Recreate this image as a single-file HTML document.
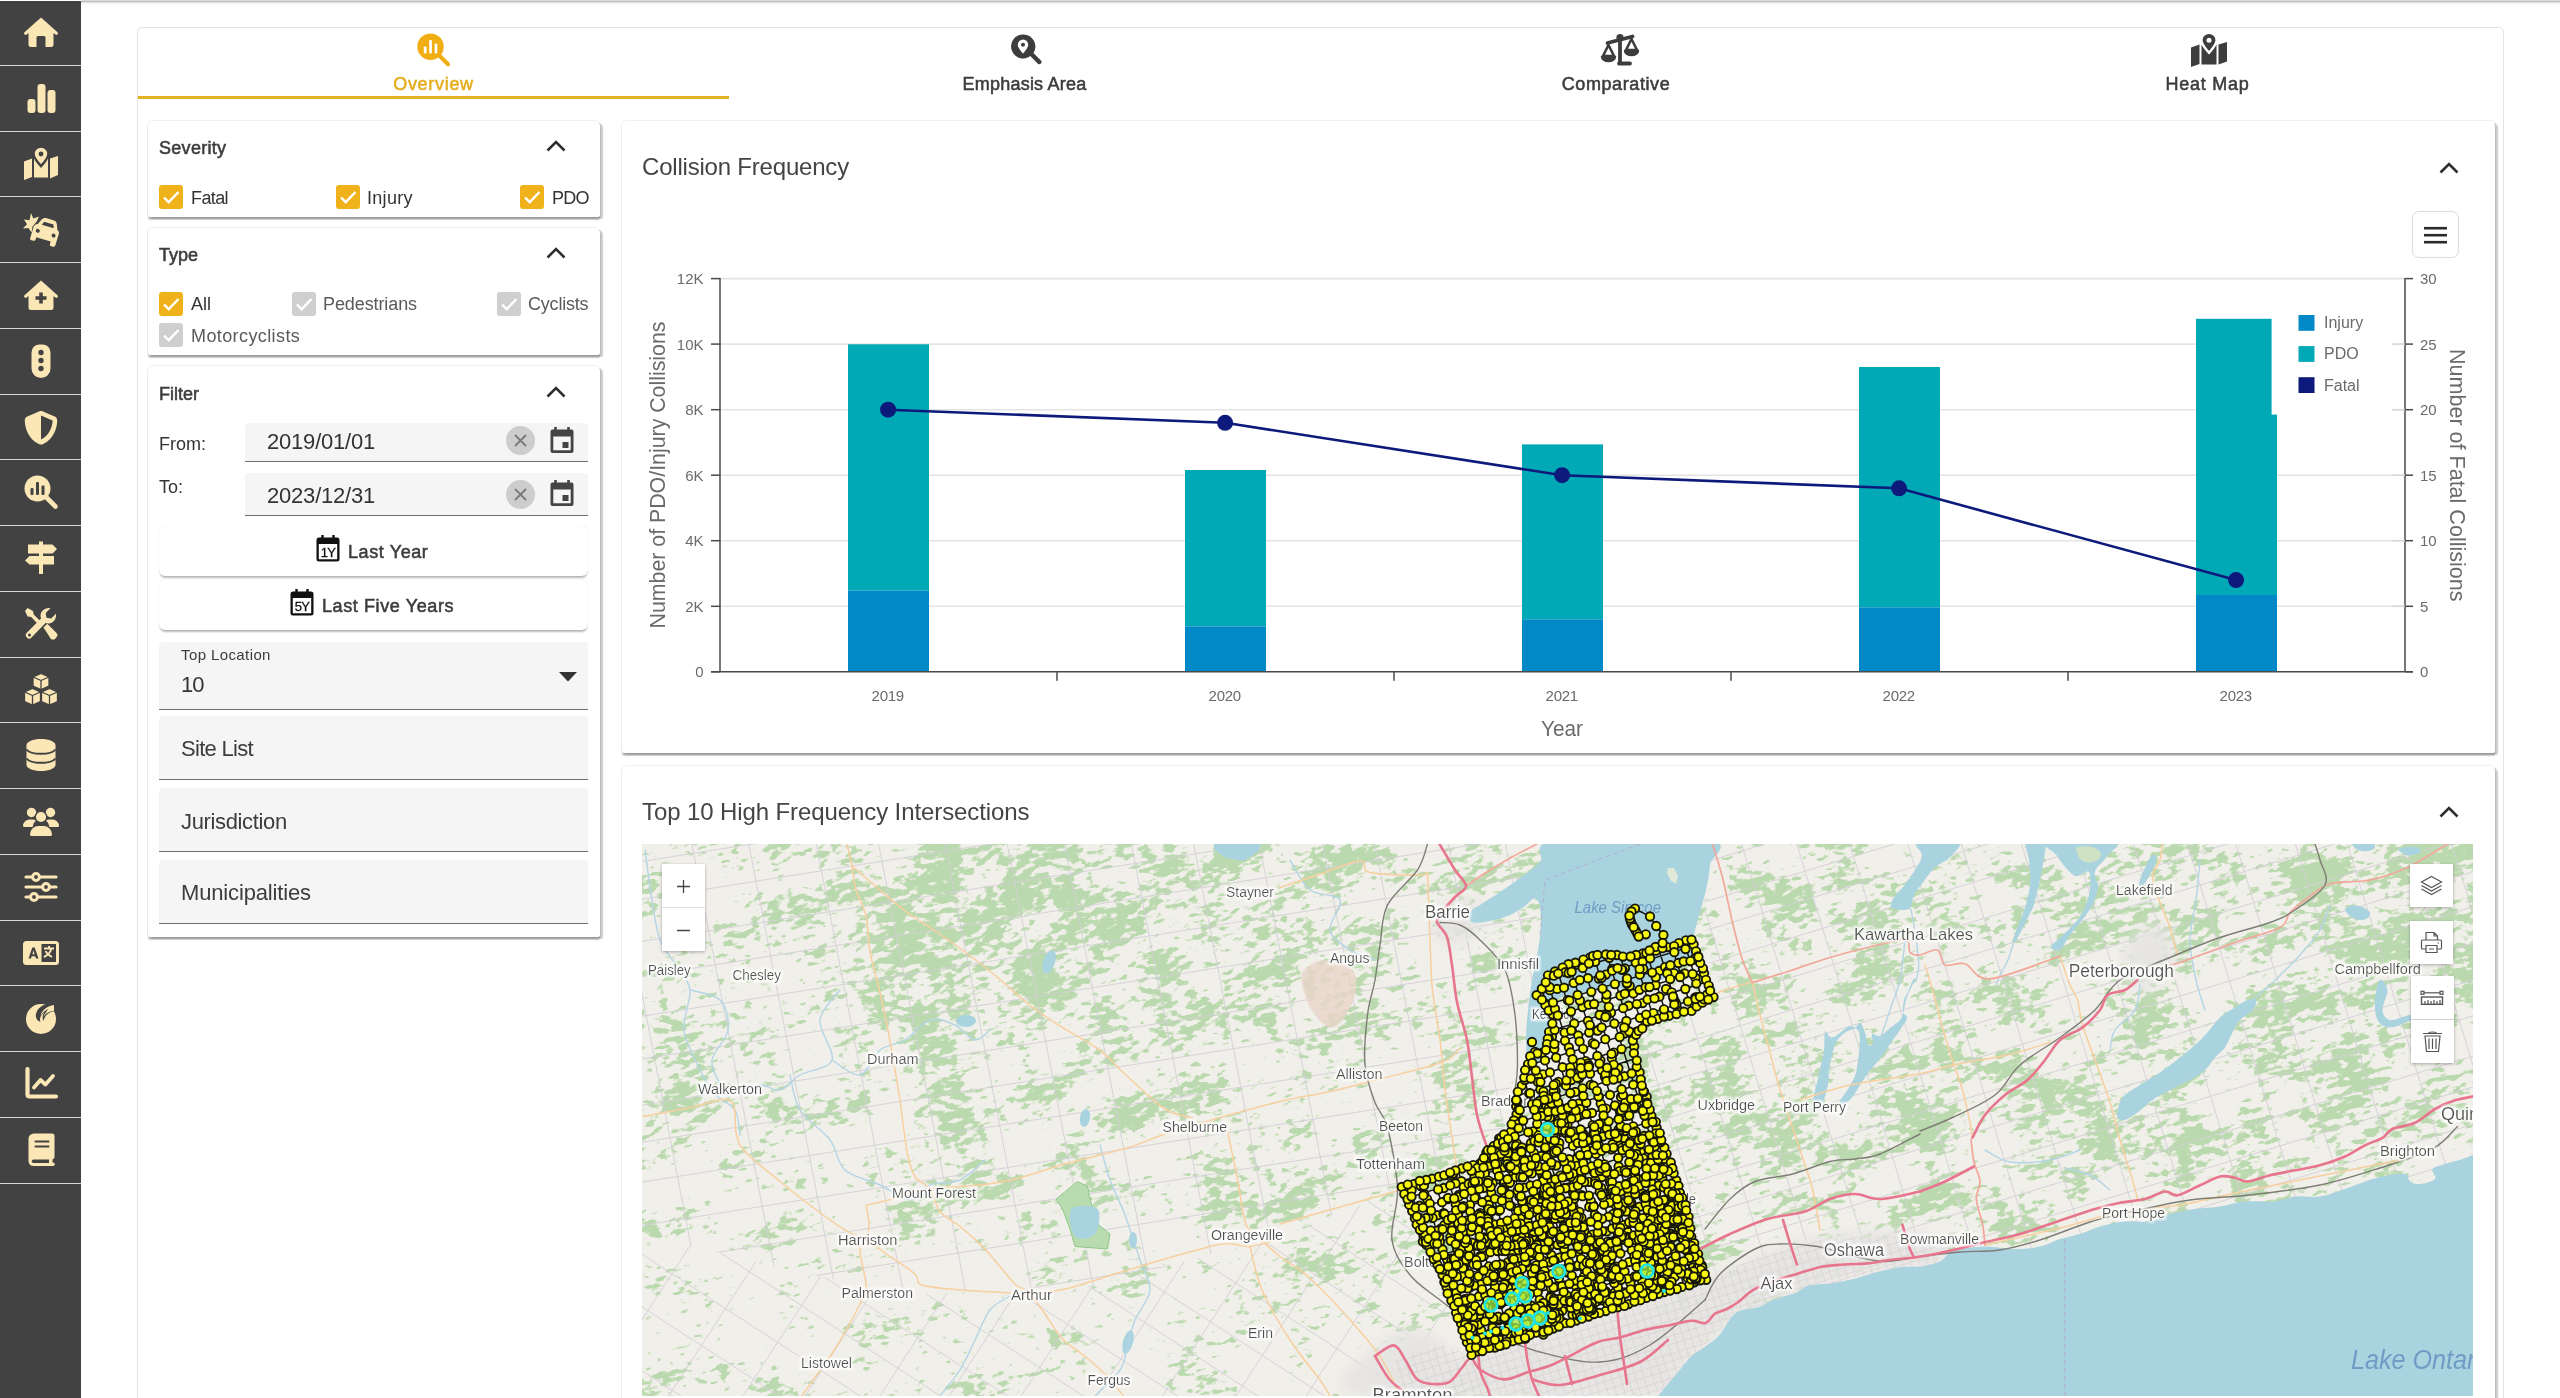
<!DOCTYPE html>
<html lang="en"><head><meta charset="utf-8"><title>Collision Dashboard</title>
<style>
*{box-sizing:border-box;margin:0;padding:0}
html,body{width:2560px;height:1398px;overflow:hidden;background:#fff;font-family:"Liberation Sans",sans-serif;color:#333}
.abs{position:absolute}
#topbar{position:absolute;left:81px;top:0;width:2479px;height:5px;background:linear-gradient(#e6e6e6 0,#c2c2c2 1.5px,#e2e2e2 2.5px,#f6f6f6 3.5px,#fff 5px)}
#side{position:absolute;left:0;top:1px;width:81px;height:1397px;background:#424242}
#side .it{position:absolute;left:0;width:81px;height:66px;border-bottom:1.5px solid #d9d9d9}
#side svg{position:absolute;left:23px;top:14px;width:36px;height:36px;fill:#fbe7b6}
#main{position:absolute;left:137px;top:27px;width:2367px;height:1400px;border:1px solid #e4e4e4;border-radius:5px;background:#fff}
.tab{position:absolute;top:27px;height:72px;text-align:center;font-size:18px;color:#3c3c3c;-webkit-text-stroke:.55px currentColor}
.tab span{position:absolute;left:0;right:0;top:47px;line-height:20px;white-space:nowrap}
.tab svg{position:absolute;left:50%;top:5px;margin-left:-22px;width:44px;height:36px;fill:#3d3d3d}
#ink{position:absolute;left:138px;top:96px;width:591px;height:3px;background:#e4b122}
.card{position:absolute;background:#fff;border-radius:5px 5px 2px 2px;box-shadow:0 0 0 1px rgba(0,0,0,.055),2.5px 2px 1.2px rgba(0,0,0,.2),0 3px 1.2px rgba(0,0,0,.2)}
.h{position:absolute;font-size:18px;line-height:20px;white-space:nowrap;color:#3c3c3c;-webkit-text-stroke:.55px currentColor}
.chev{position:absolute;width:20px;height:12px;fill:none;stroke:#2e2e2e;stroke-width:2.6}
.cb{position:absolute;width:24px;height:24px;border-radius:3px;background:#f0b21a}
.cb.d{background:#cfcfcf}
.cb svg{position:absolute;left:0;top:0;width:24px;height:24px;fill:none;stroke:#fff;stroke-width:2.4}
.lb{position:absolute;font-size:18px;line-height:22px;white-space:nowrap;color:#333}
.lb.d{color:#5a5a5a}
.fld{position:absolute;background:#f5f5f5;border-bottom:1.5px solid #6e6e6e;border-radius:4px 4px 0 0}
.fld .v{position:absolute;font-size:22px;line-height:26px;white-space:nowrap;color:#333}
.clr{position:absolute;width:29px;height:29px;border-radius:50%;background:#cdcdcd}
.clr svg{position:absolute;left:0;top:0;width:29px;height:29px;stroke:#7a7a7a;stroke-width:1.8;fill:none}
.btn{position:absolute;left:159px;width:429px;height:50px;border-radius:6px;background:#fff;box-shadow:0 3px 2px -1px rgba(0,0,0,.28),0 0 1px rgba(0,0,0,.18)}
.btn span{position:absolute;font-size:18px;line-height:20px;letter-spacing:.6px;white-space:nowrap;color:#3c3c3c;-webkit-text-stroke:.55px currentColor}
.ttl{position:absolute;font-size:24px;line-height:28px;white-space:nowrap;color:#444}
.mbtn{position:absolute;width:43px;height:43px;background:#fff;box-shadow:0 1px 3px rgba(0,0,0,.3)}
.mbtn svg{position:absolute;left:9px;top:9px;width:25px;height:25px;fill:none;stroke:#555;stroke-width:1.2}
#root{position:absolute;left:0;top:0;width:2560px;height:1398px;overflow:hidden;will-change:transform;background:#fff}
</style></head><body><div id="root">
<div id="topbar"></div>
<div id="side">
<div class="it" style="top:-1.00px;height:65.750px"><svg viewBox="0 0 36 36"><path d="M18 3.5 1.5 18.2a1.6 1.6 0 0 0 2.1 2.4L5.5 19v11.5a2.5 2.5 0 0 0 2.5 2.5h5.5v-9.5a1.5 1.5 0 0 1 1.5-1.5h6a1.5 1.5 0 0 1 1.5 1.5V33H28a2.5 2.5 0 0 0 2.5-2.5V19l1.9 1.6a1.6 1.6 0 0 0 2.1-2.4z"/></svg></div>
<div class="it" style="top:64.75px;height:65.750px"><svg viewBox="0 0 36 36"><rect x="4.5" y="19" width="8" height="14" rx="3"/><rect x="14.5" y="4" width="8" height="29" rx="3"/><rect x="24.5" y="10" width="8" height="23" rx="3"/></svg></div>
<div class="it" style="top:130.50px;height:65.750px"><svg viewBox="0 0 36 36"><path d="M1 15.5 9 12.5V31l-8 3zM11 12.5c1 3 4 6 7 9.500c3-3.500 6-6.500 7-9.500V31.500l-14 0zM27 12.500 35 10V29l-8 3.500z"/><path d="M18 1a7 7 0 0 0-7 7c0 4 4.500 8.500 7 11.500 2.500-3 7-7.500 7-11.500a7 7 0 0 0-7-7z" stroke="#424242" stroke-width="1.6"/><circle cx="18" cy="8" r="2.400" fill="#424242"/></svg></div>
<div class="it" style="top:196.25px;height:65.750px"><svg viewBox="0 0 36 36"><path d="M8 2l2.300 5.500 5.700-2-2.500 5.300-4 4.700-1 6L5.500 17 0 17.500l4-4.200L1 8.500l5.500.8z"/><g transform="rotate(17 22 22)"><path d="M12.500 15.500 14.800 10a4 4 0 0 1 3.700-2.500h8.500a4 4 0 0 1 3.700 2.500l2.300 5.500a4 4 0 0 1 2.500 3.700V31a1.800 1.800 0 0 1-1.800 1.800h-2a1.800 1.800 0 0 1-1.800-1.800v-2.500h-15V31a1.800 1.800 0 0 1-1.800 1.800h-2A1.800 1.800 0 0 1 9.300 31V19.200a4 4 0 0 1 3.200-3.700z"/><path d="M16.500 15l1.400-3.500h9.700l1.400 3.500z" fill="#424242"/><circle cx="14.500" cy="22" r="2" fill="#424242"/><circle cx="31" cy="22" r="2" fill="#424242"/></g></svg></div>
<div class="it" style="top:262.00px;height:65.750px"><svg viewBox="0 0 36 36"><path d="M18 3.500 1.500 18.200a1.600 1.600 0 0 0 2.100 2.400L5.500 19v11.500A2.500 2.500 0 0 0 8 33h20a2.500 2.500 0 0 0 2.500-2.500V19l1.900 1.600a1.600 1.600 0 0 0 2.100-2.400z"/><path d="M16.200 15.500h3.600v3.700h3.700v3.600h-3.700v3.700h-3.600v-3.700h-3.700v-3.600h3.700z" fill="#424242"/></svg></div>
<div class="it" style="top:327.75px;height:65.750px"><svg viewBox="0 0 36 36"><path d="M8.500 9.500a8 8 0 0 1 8-8h3a8 8 0 0 1 8 8v16a9.500 9.500 0 0 1-19 0z"/><circle cx="18" cy="9.500" r="2.700" fill="#424242"/><circle cx="18" cy="17.500" r="2.700" fill="#424242"/><circle cx="18" cy="25.500" r="2.700" fill="#424242"/></svg></div>
<div class="it" style="top:393.50px;height:65.750px"><svg viewBox="0 0 36 36"><path d="M18 2c.500 0 1 .1 1.400.3l12.300 5.200c1.400.6 2.500 2 2.500 3.700 0 6.500-2.700 18.300-14 23.700a5 5 0 0 1-4.400 0C4.500 29.500 1.800 17.700 1.800 11.200c0-1.700 1.100-3.100 2.500-3.700L16.600 2.300c.4-.2.900-.3 1.400-.3z"/><path d="M18 6.500v24c9-4.400 11.500-14 11.600-19.100z" fill="#424242"/></svg></div>
<div class="it" style="top:459.25px;height:65.750px"><svg viewBox="0 0 36 36"><circle cx="14.500" cy="14.500" r="13"/><path d="M23.500 23.500 32.500 32.500" stroke="#fbe7b6" stroke-width="4.600" stroke-linecap="round"/><g fill="#424242"><rect x="7.500" y="14" width="3" height="7" rx="1"/><rect x="13" y="8" width="3" height="13" rx="1"/><rect x="18.500" y="11.500" width="3" height="9.500" rx="1"/></g></svg></div>
<div class="it" style="top:525.00px;height:65.750px"><svg viewBox="0 0 36 36"><path d="M16 1.500h4v3h9.500L34 9l-4.500 4.500H20v2.500h11v8.500H20V34h-4v-9.500H6.500L2 20.500 6.500 16H16v-2.500H5V4.500h11z"/></svg></div>
<div class="it" style="top:590.75px;height:65.750px"><svg viewBox="0 0 36 36"><path d="M4.500 2 10 5l.7 3.500 7.800 7.800-2.600 2.600L8.100 11.100 4.600 10.400 2 5z"/><path d="M33 9.500a8 8 0 0 1-10.500 7.600L8.500 31.500a3.300 3.300 0 0 1-4.700-4.700L18 12.600A8 8 0 0 1 27.500 2.200l-4.800 4.800.8 4.700 4.700.8 4.800-4.800c.1.600 0 1.200 0 1.800z"/><path d="M20.500 21.500l3.800-3.800 9 9a3.400 3.400 0 0 1 0 4.800l-.9.900a3.400 3.400 0 0 1-4.800 0z"/><circle cx="6.500" cy="29" r="1.500" fill="#424242"/></svg></div>
<div class="it" style="top:656.50px;height:65.750px"><svg viewBox="0 0 36 36"><g stroke="#424242" stroke-width="1.300" stroke-linejoin="round"><path d="M18 1.500 26 5v9l-8 3.500L10 14V5z"/><path d="M9.500 16.500 17.500 20v9.500l-8 3.500-8-3.500V20z"/><path d="M26.500 16.500 34.500 20v9.500l-8 3.500-8-3.500V20z"/><path d="M10 5l8 3.500L26 5M18 8.500v9M1.500 20l8 3.500 8-3.500M9.500 23.500V33M18.500 20l8 3.500 8-3.500M26.500 23.500V33" fill="none"/></g></svg></div>
<div class="it" style="top:722.25px;height:65.750px"><svg viewBox="0 0 36 36"><path d="M3.500 8c0-3.300 6.500-6 14.500-6s14.500 2.700 14.500 6v20c0 3.300-6.500 6-14.500 6S3.500 31.300 3.500 28z"/><path d="M3.500 12.500c2 2.700 7.500 4.300 14.500 4.300s12.500-1.600 14.500-4.300M3.500 21.500c2 2.700 7.500 4.300 14.500 4.300s12.500-1.600 14.500-4.300" fill="none" stroke="#424242" stroke-width="2"/></svg></div>
<div class="it" style="top:788.00px;height:65.750px"><svg viewBox="0 0 36 36"><circle cx="8.500" cy="9.500" r="4.700"/><circle cx="27.500" cy="9.500" r="4.700"/><path d="M0 23a6.500 6.500 0 0 1 6.500-6.500h3A6.500 6.500 0 0 1 13 17.600 9.500 9.500 0 0 0 9.500 24H1.200A1.200 1.200 0 0 1 0 23zM36 23a6.500 6.500 0 0 0-6.500-6.500h-3a6.500 6.500 0 0 0-3.500 1.100A9.500 9.500 0 0 1 26.500 24h8.300a1.200 1.200 0 0 0 1.200-1z"/><circle cx="18" cy="14" r="5.700" stroke="#424242" stroke-width="1.200"/><path d="M7 31.500a8.500 8.500 0 0 1 8.500-8.500h5a8.500 8.500 0 0 1 8.500 8.500 1.500 1.500 0 0 1-1.500 1.500h-19A1.500 1.500 0 0 1 7 31.500z"/></svg></div>
<div class="it" style="top:853.75px;height:65.750px"><svg viewBox="0 0 36 36"><g stroke="#fbe7b6" stroke-width="3.200" stroke-linecap="round" fill="none"><path d="M3 8h30M3 18h30M3 28h30"/></g><g stroke="#fbe7b6" stroke-width="3" fill="#424242"><circle cx="13" cy="8" r="3.400"/><circle cx="23" cy="18" r="3.400"/><circle cx="11" cy="28" r="3.400"/></g></svg></div>
<div class="it" style="top:919.50px;height:65.750px"><svg viewBox="0 0 36 36"><rect x="0" y="6" width="36" height="24" rx="3.500"/><rect x="18.500" y="9" width="14.500" height="18" fill="#424242"/><path d="M5.500 23.500 9.300 12.500h2.400l3.800 11h-2.500l-.7-2.200H8.700L8 23.500zm3.900-4.300h2.200l-1.100-3.600z" fill="#424242"/><path d="M25 11v1.500h-4v2h6c-.3 1.300-1 2.500-1.900 3.500-.6-.6-1.100-1.300-1.400-2h-2c.4 1.200 1.100 2.300 2 3.300-1 .8-2.100 1.400-3.200 1.800l.8 1.800c1.400-.5 2.700-1.300 3.800-2.300 1 .9 2.200 1.600 3.500 2.100l.8-1.800c-1.100-.4-2.100-1-3-1.700 1.300-1.400 2.200-3 2.600-4.700H31v-2h-4V11z"/></svg></div>
<div class="it" style="top:985.25px;height:65.750px"><svg viewBox="0 0 36 36"><circle cx="18" cy="19" r="15"/><path d="M30 3.500C22 3 14.500 7 13 14c-.8 3.500 1 7 4.500 8-1.500-3.500.5-7.500 4-10-2 3-2.500 6 -1 9 1-5.500 5-8.500 10.500-10-3.500 0-6 .5-8 2 1.500-4 4-7 7-9.500z" fill="#424242"/><path d="M31 5c-6.500 1-12 5-13.500 10.500 2.500-4 6.500-6.500 11-7.500-4 2-7 5-8 9 2.500-4 6-6 10.500-6.500" fill="#fbe7b6"/></svg></div>
<div class="it" style="top:1051.00px;height:65.750px"><svg viewBox="0 0 36 36"><path d="M4.500 3v25.500a2 2 0 0 0 2 2H33" fill="none" stroke="#fbe7b6" stroke-width="4.200" stroke-linecap="round"/><path d="M11 21.500l6.500-7.500 5 4.500 7.500-8.500" fill="none" stroke="#fbe7b6" stroke-width="3.800" stroke-linecap="round" stroke-linejoin="round"/></svg></div>
<div class="it" style="top:1116.75px;height:65.750px"><svg viewBox="0 0 36 36"><path d="M5.500 7a5.500 5.500 0 0 1 5.500-5.500h18A2.500 2.500 0 0 1 31.500 4v21a2.500 2.500 0 0 1-2 2.400v3.100H30a1.800 1.800 0 0 1 0 3.600H10.500a5 5 0 0 1-5-5z"/><path d="M10.500 27.500a1.700 1.700 0 0 0 0 3.400h15.500v-3.400z" fill="#424242"/><path d="M12.500 9.500h13M12.500 14.500h13" stroke="#424242" stroke-width="2" fill="none" stroke-linecap="round"/></svg></div>
</div>
<div id="main"></div>
<div class="tab" style="left:138px;width:591px;color:#e5ae1f"><svg viewBox="0 0 44 36" style="fill:#f0ae12"><circle cx="18.500" cy="14.700" r="13.200"/><path d="M27.500 23.700 36 32.200" stroke="#f0ae12" stroke-width="4.200" stroke-linecap="round"/><g fill="#fff"><rect x="11.800" y="14.500" width="2.700" height="7" rx=".8"/><rect x="17.200" y="8" width="2.700" height="13.500" rx=".8"/><rect x="22.600" y="11.500" width="2.700" height="10" rx=".8"/></g></svg><span style="letter-spacing:.7px">Overview</span></div>
<div class="tab" style="left:729px;width:591px"><svg viewBox="0 0 44 36"><path d="M20 2.500a12 12 0 1 0 7.300 21.600l7.600 7.600a2.200 2.200 0 0 0 3.100-3.100l-7.600-7.600A12 12 0 0 0 20 2.500z"/><path d="M20 7.500a5.200 5.200 0 0 0-5.200 5.200c0 3 3.400 6.500 5.200 8.800 1.800-2.300 5.200-5.800 5.200-8.800A5.200 5.200 0 0 0 20 7.500z" fill="#fff"/><circle cx="20" cy="12.700" r="2" /></svg><span style="letter-spacing:.23px">Emphasis Area</span></div>
<div class="tab" style="left:1320px;width:592px"><svg viewBox="0 0 44 36" style="margin-left:-18px"><g fill="none" stroke="#3d3d3d" stroke-linecap="round" stroke-linejoin="round"><path d="M22 5.500v25M21 31.500h11M9.500 11 34.500 4.500" stroke-width="3.800"/><path d="M10.500 13 5 24h11zM33.500 7 28 18h11z" stroke-width="2.600"/><path d="M3.500 24.500a7 5 0 0 0 14 0zM26.500 18.500a7 5 0 0 0 14 0z" fill="#3d3d3d" stroke-width="1.500"/></g><circle cx="22" cy="5.500" r="3.600"/></svg><span style="letter-spacing:.6px">Comparative</span></div>
<div class="tab" style="left:1912px;width:591px"><svg viewBox="0 0 44 36" style="margin-left:-20px"><path d="M3 15.500 11.500 12.500V32L3 35zM13.500 12.500c1 3 4.500 6.500 7.500 10 3-3.500 6.500-7 7.500-10V32.500l-15 0zM30.500 12.500 39 10V29.500l-8.500 3z"/><path d="M21 1a7.300 7.300 0 0 0-7.300 7.300c0 4.200 4.700 8.800 7.300 12 2.600-3.200 7.300-7.800 7.300-12A7.300 7.300 0 0 0 21 1z" stroke="#fff" stroke-width="1.800"/><circle cx="21" cy="8.300" r="2.500" fill="#fff"/></svg><span style="letter-spacing:.75px">Heat Map</span></div>
<div id="ink"></div>

<!-- Severity -->
<div class="card" style="left:148px;top:121px;width:452px;height:96px"></div>
<div class="h" style="left:159px;top:138px;letter-spacing:.3px">Severity</div>
<svg class="chev" style="left:546px;top:140px" viewBox="0 0 20 12"><path d="M1.500 10.500 10 2l8.500 8.500"/></svg>
<div class="cb" style="left:159px;top:185px"><svg viewBox="0 0 24 24"><path d="M5 12.500l4.700 4.700L19.500 7"/></svg></div><div class="lb" style="left:191px;top:187px;letter-spacing:-.6px">Fatal</div>
<div class="cb" style="left:336px;top:185px"><svg viewBox="0 0 24 24"><path d="M5 12.500l4.700 4.700L19.500 7"/></svg></div><div class="lb" style="left:367px;top:187px;letter-spacing:.3px">Injury</div>
<div class="cb" style="left:520px;top:185px"><svg viewBox="0 0 24 24"><path d="M5 12.500l4.700 4.700L19.500 7"/></svg></div><div class="lb" style="left:552px;top:187px;letter-spacing:-.7px">PDO</div>

<!-- Type -->
<div class="card" style="left:148px;top:228px;width:452px;height:127px"></div>
<div class="h" style="left:159px;top:245px">Type</div>
<svg class="chev" style="left:546px;top:247px" viewBox="0 0 20 12"><path d="M1.500 10.500 10 2l8.500 8.500"/></svg>
<div class="cb" style="left:159px;top:292px"><svg viewBox="0 0 24 24"><path d="M5 12.500l4.700 4.700L19.500 7"/></svg></div><div class="lb" style="left:191px;top:293px">All</div>
<div class="cb d" style="left:292px;top:292px"><svg viewBox="0 0 24 24"><path d="M5 12.500l4.700 4.700L19.500 7"/></svg></div><div class="lb d" style="left:323px;top:293px;letter-spacing:-.1px">Pedestrians</div>
<div class="cb d" style="left:497px;top:292px"><svg viewBox="0 0 24 24"><path d="M5 12.500l4.700 4.700L19.500 7"/></svg></div><div class="lb d" style="left:528px;top:293px;letter-spacing:-.2px">Cyclists</div>
<div class="cb d" style="left:159px;top:323px"><svg viewBox="0 0 24 24"><path d="M5 12.500l4.700 4.700L19.500 7"/></svg></div><div class="lb d" style="left:191px;top:325px;letter-spacing:.4px">Motorcyclists</div>

<!-- Filter -->
<div class="card" style="left:148px;top:366px;width:452px;height:571px"></div>
<div class="h" style="left:159px;top:384px">Filter</div>
<svg class="chev" style="left:546px;top:386px" viewBox="0 0 20 12"><path d="M1.500 10.500 10 2l8.500 8.500"/></svg>
<div class="lb" style="left:159px;top:433px">From:</div>
<div class="fld" style="left:245px;top:423px;width:343px;height:39px"><div class="v" style="left:22px;top:6px;letter-spacing:-.2px">2019/01/01</div></div>
<div class="clr" style="left:505.500px;top:426px"><svg viewBox="0 0 29 29"><path d="M9 9l11 11M20 9 9 20"/></svg></div>
<svg class="abs" style="left:549px;top:426px;width:26px;height:28px" viewBox="0 0 26 28"><path d="M6.500 1v4M19.500 1v4" stroke="#444" stroke-width="2.600"/><path d="M3.500 3.500h19a2 2 0 0 1 2 2V25a2 2 0 0 1-2 2h-19a2 2 0 0 1-2-2V5.500a2 2 0 0 1 2-2zM4.300 10.500v13.800h17.400V10.500z" fill="#444" fill-rule="evenodd"/><rect x="13.500" y="16" width="6" height="6" fill="#444"/></svg>
<div class="lb" style="left:159px;top:476px">To:</div>
<div class="fld" style="left:245px;top:473px;width:343px;height:43px"><div class="v" style="left:22px;top:10px;letter-spacing:-.2px">2023/12/31</div></div>
<div class="clr" style="left:505.500px;top:480px"><svg viewBox="0 0 29 29"><path d="M9 9l11 11M20 9 9 20"/></svg></div>
<svg class="abs" style="left:549px;top:479px;width:26px;height:28px" viewBox="0 0 26 28"><path d="M6.500 1v4M19.500 1v4" stroke="#444" stroke-width="2.600"/><path d="M3.500 3.500h19a2 2 0 0 1 2 2V25a2 2 0 0 1-2 2h-19a2 2 0 0 1-2-2V5.500a2 2 0 0 1 2-2zM4.300 10.500v13.800h17.400V10.500z" fill="#444" fill-rule="evenodd"/><rect x="13.500" y="16" width="6" height="6" fill="#444"/></svg>

<div class="btn" style="top:526px"><svg class="abs" style="left:157px;top:9px;width:24px;height:27px" viewBox="0 0 24 27"><path d="M6.500 0v4M17.500 0v4" stroke="#111" stroke-width="2.400"/><path d="M3 2.500h18a2.500 2.500 0 0 1 2.500 2.500v19a2.500 2.500 0 0 1-2.500 2.500H3A2.500 2.500 0 0 1 .5 24V5A2.500 2.500 0 0 1 3 2.500zM2.800 9v15.200h18.400V9z" fill="#111" fill-rule="evenodd"/><text x="12" y="22" text-anchor="middle" font-family="Liberation Sans" font-size="13" fill="#111" letter-spacing="-.8" stroke="#111" stroke-width=".3">1Y</text></svg><span style="left:189px;top:16px">Last Year</span></div>
<div class="btn" style="top:580px"><svg class="abs" style="left:131px;top:9px;width:24px;height:27px" viewBox="0 0 24 27"><path d="M6.500 0v4M17.500 0v4" stroke="#111" stroke-width="2.400"/><path d="M3 2.500h18a2.500 2.500 0 0 1 2.500 2.500v19a2.500 2.500 0 0 1-2.500 2.500H3A2.500 2.500 0 0 1 .5 24V5A2.500 2.500 0 0 1 3 2.500zM2.800 9v15.200h18.400V9z" fill="#111" fill-rule="evenodd"/><text x="12" y="22" text-anchor="middle" font-family="Liberation Sans" font-size="13" fill="#111" letter-spacing="-.8" stroke="#111" stroke-width=".3">5Y</text></svg><span style="left:163px;top:16px">Last Five Years</span></div>

<div class="fld" style="left:159px;top:642px;width:429px;height:67.500px"><div class="abs" style="left:22px;top:4px;font-size:15px;line-height:18px;letter-spacing:.4px;color:#3c3c3c;white-space:nowrap">Top Location</div><div class="v" style="left:22px;top:30px;letter-spacing:-1px">10</div><svg class="abs" style="left:400px;top:30px;width:18px;height:10px" viewBox="0 0 18 10"><path d="M0 0h18L9 9.500z" fill="#333"/></svg></div>
<div class="fld" style="left:159px;top:716px;width:429px;height:64px"><div class="v" style="left:22px;top:20px;letter-spacing:-.7px;color:#3c3c3c">Site List</div></div>
<div class="fld" style="left:159px;top:788px;width:429px;height:64px"><div class="v" style="left:22px;top:21px;letter-spacing:-.35px;color:#3c3c3c">Jurisdiction</div></div>
<div class="fld" style="left:159px;top:859.500px;width:429px;height:64px"><div class="v" style="left:22px;top:20px;letter-spacing:-.15px;color:#3c3c3c">Municipalities</div></div>
<div class="card" style="left:622px;top:121px;width:1873px;height:632px"></div>
<div class="ttl" style="left:642px;top:153px;letter-spacing:-.2px">Collision Frequency</div>
<svg class="chev" style="left:2439px;top:162px" viewBox="0 0 20 12"><path d="M1.500 10.500 10 2l8.500 8.500"/></svg>
<div class="abs" style="left:2412px;top:211px;width:47px;height:47px;border:1px solid #dcdcdc;border-radius:7px;background:#fff"></div>
<svg class="abs" style="left:0;top:0;width:2560px;height:760px;overflow:visible" viewBox="0 0 2560 760" font-family="Liberation Sans, sans-serif">
<rect x="2424" y="226.9" width="23" height="2.600" fill="#2b2b2b"/>
<rect x="2424" y="233.9" width="23" height="2.600" fill="#2b2b2b"/>
<rect x="2424" y="240.9" width="23" height="2.600" fill="#2b2b2b"/>
<path d="M720.0 606.3H2405.0" stroke="#e4e4e4" stroke-width="1.600"/>
<path d="M720.0 540.7H2405.0" stroke="#e4e4e4" stroke-width="1.600"/>
<path d="M720.0 475.2H2405.0" stroke="#e4e4e4" stroke-width="1.600"/>
<path d="M720.0 409.7H2405.0" stroke="#e4e4e4" stroke-width="1.600"/>
<path d="M720.0 344.1H2405.0" stroke="#e4e4e4" stroke-width="1.600"/>
<path d="M720.0 278.6H2405.0" stroke="#e4e4e4" stroke-width="1.600"/>
<rect x="848.0" y="344.3" width="81" height="246.2" fill="#00a9b5"/>
<rect x="848.0" y="590.5" width="81" height="81.3" fill="#0089c6"/>
<rect x="1185.0" y="470.0" width="81" height="156.4" fill="#00a9b5"/>
<rect x="1185.0" y="626.4" width="81" height="45.4" fill="#0089c6"/>
<rect x="1522.0" y="444.4" width="81" height="174.9" fill="#00a9b5"/>
<rect x="1522.0" y="619.3" width="81" height="52.5" fill="#0089c6"/>
<rect x="1859.0" y="367.0" width="81" height="240.3" fill="#00a9b5"/>
<rect x="1859.0" y="607.3" width="81" height="64.5" fill="#0089c6"/>
<rect x="2196.0" y="318.8" width="81" height="276.2" fill="#00a9b5"/>
<rect x="2196.0" y="595.0" width="81" height="76.8" fill="#0089c6"/>
<rect x="2271.600" y="300" width="120.400" height="114.600" fill="#fff"/>
<path d="M720.0 278.1V671.8" stroke="#4a4a4a" stroke-width="1.500" fill="none"/>
<path d="M2405.0 278.1V671.8" stroke="#4a4a4a" stroke-width="1.500" fill="none"/>
<path d="M711.0 671.8H2413.0" stroke="#4a4a4a" stroke-width="1.500" fill="none"/>
<path d="M711.0 671.8H720.0" stroke="#4a4a4a" stroke-width="1.500"/>
<path d="M2405.0 671.8H2413.0" stroke="#4a4a4a" stroke-width="1.500"/>
<text x="703.500" y="677.4" text-anchor="end" font-size="15" fill="#6a6a6a">0</text>
<text x="2420" y="677.4" font-size="15" fill="#6a6a6a">0</text>
<path d="M711.0 606.3H720.0" stroke="#4a4a4a" stroke-width="1.500"/>
<path d="M2405.0 606.3H2413.0" stroke="#4a4a4a" stroke-width="1.500"/>
<path d="M2392.0 606.3H2405.0" stroke="#d8d8d8" stroke-width="1.500"/>
<text x="703.500" y="611.9" text-anchor="end" font-size="15" fill="#6a6a6a">2K</text>
<text x="2420" y="611.9" font-size="15" fill="#6a6a6a">5</text>
<path d="M711.0 540.7H720.0" stroke="#4a4a4a" stroke-width="1.500"/>
<path d="M2405.0 540.7H2413.0" stroke="#4a4a4a" stroke-width="1.500"/>
<path d="M2392.0 540.7H2405.0" stroke="#d8d8d8" stroke-width="1.500"/>
<text x="703.500" y="546.3" text-anchor="end" font-size="15" fill="#6a6a6a">4K</text>
<text x="2420" y="546.3" font-size="15" fill="#6a6a6a">10</text>
<path d="M711.0 475.2H720.0" stroke="#4a4a4a" stroke-width="1.500"/>
<path d="M2405.0 475.2H2413.0" stroke="#4a4a4a" stroke-width="1.500"/>
<path d="M2392.0 475.2H2405.0" stroke="#d8d8d8" stroke-width="1.500"/>
<text x="703.500" y="480.8" text-anchor="end" font-size="15" fill="#6a6a6a">6K</text>
<text x="2420" y="480.8" font-size="15" fill="#6a6a6a">15</text>
<path d="M711.0 409.7H720.0" stroke="#4a4a4a" stroke-width="1.500"/>
<path d="M2405.0 409.7H2413.0" stroke="#4a4a4a" stroke-width="1.500"/>
<path d="M2392.0 409.7H2405.0" stroke="#d8d8d8" stroke-width="1.500"/>
<text x="703.500" y="415.3" text-anchor="end" font-size="15" fill="#6a6a6a">8K</text>
<text x="2420" y="415.3" font-size="15" fill="#6a6a6a">20</text>
<path d="M711.0 344.1H720.0" stroke="#4a4a4a" stroke-width="1.500"/>
<path d="M2405.0 344.1H2413.0" stroke="#4a4a4a" stroke-width="1.500"/>
<path d="M2392.0 344.1H2405.0" stroke="#d8d8d8" stroke-width="1.500"/>
<text x="703.500" y="349.7" text-anchor="end" font-size="15" fill="#6a6a6a">10K</text>
<text x="2420" y="349.7" font-size="15" fill="#6a6a6a">25</text>
<path d="M711.0 278.6H720.0" stroke="#4a4a4a" stroke-width="1.500"/>
<path d="M2405.0 278.6H2413.0" stroke="#4a4a4a" stroke-width="1.500"/>
<text x="703.500" y="284.2" text-anchor="end" font-size="15" fill="#6a6a6a">12K</text>
<text x="2420" y="284.2" font-size="15" fill="#6a6a6a">30</text>
<path d="M1057.0 671.8V680.8" stroke="#4a4a4a" stroke-width="1.500"/>
<path d="M1394.0 671.8V680.8" stroke="#4a4a4a" stroke-width="1.500"/>
<path d="M1731.0 671.8V680.8" stroke="#4a4a4a" stroke-width="1.500"/>
<path d="M2068.0 671.8V680.8" stroke="#4a4a4a" stroke-width="1.500"/>
<text x="887.7" y="701.200" text-anchor="middle" font-size="15" fill="#6a6a6a" letter-spacing="-.3">2019</text>
<text x="1224.7" y="701.200" text-anchor="middle" font-size="15" fill="#6a6a6a" letter-spacing="-.3">2020</text>
<text x="1561.7" y="701.200" text-anchor="middle" font-size="15" fill="#6a6a6a" letter-spacing="-.3">2021</text>
<text x="1898.7" y="701.200" text-anchor="middle" font-size="15" fill="#6a6a6a" letter-spacing="-.3">2022</text>
<text x="2235.7" y="701.200" text-anchor="middle" font-size="15" fill="#6a6a6a" letter-spacing="-.3">2023</text>
<polyline points="888.1,409.7 1225.1,422.8 1562.1,475.2 1899.1,488.3 2236.1,580.1" fill="none" stroke="#0d1a7c" stroke-width="2.600" stroke-linejoin="round"/>
<circle cx="888.1" cy="409.7" r="8" fill="#0d1a7c"/>
<circle cx="1225.1" cy="422.8" r="8" fill="#0d1a7c"/>
<circle cx="1562.1" cy="475.2" r="8" fill="#0d1a7c"/>
<circle cx="1899.1" cy="488.3" r="8" fill="#0d1a7c"/>
<circle cx="2236.1" cy="580.1" r="8" fill="#0d1a7c"/>
<rect x="2298.500" y="315.0" width="16" height="15.800" fill="#0089c6"/>
<text x="2324" y="328.3" font-size="16" fill="#6a6a6a">Injury</text>
<rect x="2298.500" y="346.1" width="16" height="15.800" fill="#00a9b5"/>
<text x="2324" y="359.4" font-size="16" fill="#6a6a6a">PDO</text>
<rect x="2298.500" y="377.2" width="16" height="15.800" fill="#0d1a7c"/>
<text x="2324" y="390.5" font-size="16" fill="#6a6a6a">Fatal</text>
<text transform="translate(664.500 628.500) rotate(-90)" font-size="22" fill="#6a6a6a" textLength="307" lengthAdjust="spacingAndGlyphs">Number of PDO/Injury Collisions</text>
<text transform="translate(2450 349) rotate(90)" font-size="22" fill="#6a6a6a" textLength="252.500" lengthAdjust="spacingAndGlyphs">Number of Fatal Collisions</text>
<text x="1562" y="735.500" text-anchor="middle" font-size="22" fill="#6a6a6a" textLength="42" lengthAdjust="spacingAndGlyphs">Year</text>
</svg>
<div class="card" style="left:622px;top:766px;width:1873px;height:700px"></div>
<div class="ttl" style="left:642px;top:798px;letter-spacing:-.1px">Top 10 High Frequency Intersections</div>
<svg class="chev" style="left:2439px;top:806px" viewBox="0 0 20 12"><path d="M1.500 10.500 10 2l8.500 8.500"/></svg>
<svg class="abs" style="left:642px;top:844px;width:1831px;height:552px" viewBox="642 844 1831 552" font-family="Liberation Sans, sans-serif">
<defs>
<filter id="gr" x="-400" y="200" width="3400" height="2200" filterUnits="userSpaceOnUse" color-interpolation-filters="sRGB">
<feTurbulence type="fractalNoise" baseFrequency="0.085 0.17" numOctaves="3" seed="11" result="hf0"/>
<feColorMatrix in="hf0" type="matrix" values="1 0 0 0 0 1 0 0 0 0 1 0 0 0 0 0 0 0 0 1" result="hf"/>
<feTurbulence type="fractalNoise" baseFrequency="0.016 0.026" numOctaves="2" seed="4" result="mf0"/>
<feColorMatrix in="mf0" type="matrix" values="1 0 0 0 0 1 0 0 0 0 1 0 0 0 0 0 0 0 0 1" result="mf"/>
<feComposite in="hf" in2="mf" operator="arithmetic" k1="0" k2="0.7" k3="0.7" k4="-0.2" result="hm"/>
<feComposite in="hm" in2="SourceGraphic" operator="arithmetic" k1="0" k2="1" k3="0.35" k4="-0.25" result="mx"/>
<feColorMatrix in="mx" type="matrix" values="0 0 0 0 0.705  0 0 0 0 0.845  0 0 0 0 0.65  14 0 0 0 -6.500"/>
</filter>
<filter id="b6" x="-10%" y="-20%" width="120%" height="140%"><feGaussianBlur stdDeviation="7"/></filter>
<filter id="bl" x="-10%" y="-10%" width="120%" height="120%"><feGaussianBlur stdDeviation="28"/></filter>
<filter id="halo" x="-5%" y="-25%" width="110%" height="150%"><feMorphology in="SourceAlpha" operator="dilate" radius="1.500" result="d"/><feGaussianBlur in="d" stdDeviation=".8" result="b"/><feFlood flood-color="#fff" flood-opacity=".9"/><feComposite in2="b" operator="in" result="h"/><feMerge><feMergeNode in="h"/><feMergeNode in="SourceGraphic"/></feMerge></filter>
<clipPath id="mc"><rect x="642" y="844" width="1831" height="552"/></clipPath>
</defs>
<g clip-path="url(#mc)">
<rect x="642" y="844" width="1831" height="552" fill="#f1efe9"/>
<g filter="url(#gr)" transform="rotate(-13 1557 1120)" opacity=".88">
<rect x="-400" y="200" width="3400" height="2200" fill="#6b6b6b"/>
<g filter="url(#bl)" transform="rotate(13 1557 1120)">
<ellipse cx="980" cy="930" rx="190" ry="110" fill="#c6c6c6"/>
<ellipse cx="1130" cy="1000" rx="120" ry="80" fill="#9e9e9e"/>
<ellipse cx="1330" cy="960" rx="70" ry="110" fill="#9e9e9e"/>
<ellipse cx="1250" cy="880" rx="90" ry="50" fill="#999999"/>
<ellipse cx="760" cy="1000" rx="110" ry="120" fill="#6b6b6b"/>
<ellipse cx="700" cy="880" rx="60" ry="60" fill="#4c4c4c"/>
<ellipse cx="800" cy="1280" rx="200" ry="130" fill="#383838"/>
<ellipse cx="1100" cy="1330" rx="200" ry="90" fill="#333333"/>
<ellipse cx="1000" cy="1150" rx="100" ry="60" fill="#7f7f7f"/>
<ellipse cx="1180" cy="1180" rx="90" ry="70" fill="#4c4c4c"/>
<ellipse cx="1330" cy="1200" rx="70" ry="90" fill="#7f7f7f"/>
<ellipse cx="1420" cy="1010" rx="60" ry="120" fill="#595959"/>
<ellipse cx="1480" cy="880" rx="50" ry="50" fill="#727272"/>
<ellipse cx="1800" cy="900" rx="90" ry="70" fill="#999999"/>
<ellipse cx="1800" cy="1080" rx="90" ry="110" fill="#9e9e9e"/>
<ellipse cx="1960" cy="900" rx="60" ry="60" fill="#8c8c8c"/>
<ellipse cx="1950" cy="1100" rx="90" ry="90" fill="#999999"/>
<ellipse cx="2150" cy="900" rx="120" ry="60" fill="#9e9e9e"/>
<ellipse cx="2420" cy="900" rx="90" ry="80" fill="#f2f2f2"/>
<ellipse cx="2330" cy="870" rx="60" ry="40" fill="#b2b2b2"/>
<ellipse cx="2300" cy="1040" rx="150" ry="80" fill="#9e9e9e"/>
<ellipse cx="2100" cy="1130" rx="120" ry="60" fill="#999999"/>
<ellipse cx="2380" cy="1130" rx="90" ry="40" fill="#8c8c8c"/>
<ellipse cx="1560" cy="1340" rx="160" ry="70" fill="#000000"/>
<ellipse cx="1400" cy="1360" rx="100" ry="50" fill="#141414"/>
<ellipse cx="1850" cy="1250" rx="120" ry="30" fill="#1e1e1e"/>
</g></g>
<defs>
<clipPath id="zW"><path d="M642.0 844.0 L1545.0 844.0 L1530.0 1000.0 L1500.0 1140.0 L1400.0 1190.0 L1280.0 1235.0 L1100.0 1285.0 L900.0 1295.0 L642.0 1235.0Z"/></clipPath>
<clipPath id="zS"><path d="M642.0 1235.0 L900.0 1295.0 L1100.0 1285.0 L1280.0 1235.0 L1400.0 1190.0 L1472.0 1355.0 L1480.0 1396.0 L642.0 1396.0Z"/></clipPath>
<clipPath id="zE"><path d="M1700.0 844.0 L2473.0 844.0 L2473.0 1396.0 L1700.0 1396.0 L1705.0 1280.0 L1640.0 1050.0 L1712.0 997.0Z"/></clipPath>
<clipPath id="zT"><path d="M1440.0 1345.0 L1472.0 1355.0 L1706.0 1281.0 L1760.0 1255.0 L1830.0 1238.0 L1915.0 1235.0 L1940.0 1248.0 L1940.0 1264.0 L1880.0 1270.0 L1830.0 1284.0 L1773.0 1300.0 L1740.0 1310.0 L1656.0 1396.0 L1400.0 1396.0 L1395.0 1360.0Z"/></clipPath>
</defs>
<path d="M122 -275L2492 -650M128 -237L2498 -613M135 -192L2505 -567M140 -159L2510 -535M147 -114L2518 -490M153 -77L2523 -452M159 -41L2529 -416M166 4L2536 -371M171 38L2542 -337M178 82L2549 -293M184 117L2554 -258M190 157L2560 -218M197 201L2567 -175M204 245L2574 -131M209 276L2579 -99M215 317L2586 -59M222 361L2593 -14M229 404L2600 29M235 439L2605 64M241 477L2611 101M248 523L2618 148M253 552L2623 176M260 601L2631 225M266 634L2636 258M271 671L2642 296M278 711L2648 335M284 752L2655 377M292 798L2662 422M297 830L2667 454M304 874L2674 499M310 914L2680 539M316 951L2686 575M322 992L2693 617M328 1026L2698 651M334 1065L2704 690M340 1107L2711 731M348 1152L2718 776M353 1188L2724 813M359 1227L2730 851M366 1269L2737 894M372 1307L2743 932M378 1345L2749 969M385 1390L2756 1015M391 1429L2762 1053M397 1463L2767 1087M404 1506L2774 1131M410 1545L2780 1170M417 1589L2787 1213M423 1627L2793 1251M428 1661L2799 1285M436 1708L2806 1333M440 1738L2811 1362M447 1781L2818 1405M454 1824L2825 1449M459 1857L2830 1481M466 1900L2837 1525M472 1934L2842 1559M479 1981L2849 1606M485 2022L2856 1647M491 2059L2862 1684M498 2102L2869 1727M503 2135L2874 1760M510 2179L2881 1804M516 2218L2887 1842M523 2257L2893 1881M529 2295L2899 1919M536 2339L2906 1964M542 2380L2913 2004M547 2414L2918 2038M554 2455L2924 2080M559 2488L2930 2112M567 2535L2937 2159M573 2574L2943 2198M580 2617L2950 2242M586 2655L2956 2279M591 2688L2961 2312M597 2729L2968 2353M604 2771L2975 2396M609 2803L2980 2428M616 2848L2987 2473M622 2884L2992 2509" fill="none" stroke="#d3cfd7" stroke-width="0.9" clip-path="url(#zW)"/>
<path d="M3770 -533L4228 1823M3710 -521L4168 1835M3636 -507L4094 1849M3587 -497L4045 1859M3524 -485L3982 1871M3461 -472L3919 1884M3391 -459L3849 1897M3345 -450L3803 1906M3277 -437L3735 1919M3214 -425L3672 1931M3147 -411L3605 1944M3088 -400L3546 1956M3026 -388L3484 1968M2976 -378L3434 1978M2912 -366L3370 1990M2853 -354L3311 2002M2782 -341L3240 2015M2720 -328L3178 2027M2674 -319L3132 2036M2613 -308L3070 2048M2551 -296L3009 2060M2490 -284L2948 2072M2424 -271L2882 2085M2362 -259L2819 2097M2307 -248L2765 2108M2250 -237L2708 2119M2182 -224L2640 2132M2122 -212L2580 2144M2058 -200L2516 2156M1990 -186L2448 2169M1934 -176L2392 2180M1876 -164L2334 2192M1813 -152L2271 2204M1751 -140L2209 2216M1702 -131L2160 2225M1626 -116L2083 2240M1567 -104L2025 2252M1504 -92L1962 2264M1445 -81L1903 2275M1391 -70L1849 2286M1330 -58L1788 2298M1275 -48L1733 2308M1204 -34L1662 2322M1154 -24L1612 2332M1093 -12L1551 2344M1030 0L1487 2356M970 12L1427 2368M905 24L1363 2380M850 35L1308 2391M790 47L1248 2403M726 59L1184 2415M666 71L1124 2427M601 84L1059 2439M546 94L1004 2450M470 109L928 2465M414 120L871 2476M361 130L819 2486M298 142L756 2498M236 154L694 2510M175 166L633 2522M118 177L576 2533M44 192L502 2548M-19 204L439 2560M-71 214L387 2570M-132 226L326 2582M-185 236L273 2592M-247 248L211 2604M-312 261L146 2617M-371 272L87 2628M-442 286L16 2642M-491 296L-33 2652M-549 307L-92 2663M-627 322L-169 2678M-680 333L-222 2688M-734 343L-276 2699M-802 356L-344 2712M-854 366L-396 2722M-924 380L-466 2736M-993 393L-535 2749M-1052 405L-594 2761M-1109 416L-652 2772" fill="none" stroke="#d3cfd7" stroke-width="0.9" clip-path="url(#zW)"/>
<path d="M1511 -1012L3524 295M1487 -974L3499 333M1464 -940L3477 368M1436 -896L3449 411M1414 -862L3426 445M1388 -822L3401 485M1367 -790L3380 517M1344 -754L3357 553M1316 -711L3329 596M1290 -672L3303 635M1267 -637L3280 670M1244 -600L3257 707M1220 -563L3233 744M1196 -527L3209 780M1176 -496L3189 811M1150 -456L3163 851M1127 -421L3140 886M1106 -388L3118 920M1082 -351L3095 957M1056 -311L3069 996M1032 -274L3045 1033M1005 -233L3018 1075M979 -193L2992 1114M959 -161L2972 1146M931 -119L2944 1188M907 -82L2920 1225M883 -45L2896 1262M864 -15L2876 1292M841 21L2853 1328M817 57L2829 1365M793 94L2806 1401M769 131L2782 1438M742 173L2755 1480M716 213L2729 1520M692 249L2705 1556M671 282L2684 1589M646 321L2659 1628M621 359L2634 1666M602 388L2615 1695M574 431L2587 1738M548 471L2561 1778M525 506L2538 1814M501 543L2514 1850M479 577L2492 1884M458 610L2470 1918M429 654L2442 1961M409 686L2421 1993M381 728L2394 2035M356 767L2369 2074M336 797L2349 2105M312 834L2325 2141M284 877L2297 2184M262 912L2275 2219M242 942L2255 2250M218 979L2231 2286M194 1016L2207 2323M165 1061L2178 2368M142 1097L2154 2404M122 1127L2135 2434M93 1171L2106 2478M68 1210L2081 2517M47 1243L2060 2550M25 1277L2038 2584M-0 1316L2012 2623M-21 1348L1991 2655M-45 1384L1968 2691M-75 1431L1937 2738M-97 1464L1916 2772M-120 1500L1893 2807M-147 1541L1866 2849M-167 1573L1845 2880M-194 1614L1818 2922M-218 1651L1795 2958M-238 1681L1775 2988M-262 1718L1751 3025M-286 1756L1727 3063M-310 1792L1703 3099M-336 1833L1677 3140M-358 1866L1655 3173M-383 1905L1630 3212M-405 1938L1608 3246" fill="none" stroke="#d3cfd7" stroke-width="0.9" clip-path="url(#zS)"/>
<path d="M-1103 823L204 -1190M-1061 851L246 -1162M-1009 884L298 -1129M-957 918L350 -1095M-901 954L406 -1059M-858 982L449 -1031M-801 1019L506 -993M-757 1048L551 -965M-706 1081L601 -932M-656 1114L651 -899M-613 1141L694 -871M-556 1178L751 -835M-510 1208L797 -805M-462 1239L845 -774M-400 1280L907 -733M-359 1306L948 -707M-304 1342L1003 -671M-250 1377L1057 -636M-202 1408L1105 -605M-155 1438L1152 -574M-102 1473L1205 -540M-51 1506L1256 -507M2 1541L1310 -472M43 1567L1350 -446M100 1604L1407 -409M145 1634L1452 -379M196 1667L1503 -346M254 1704L1561 -309M300 1734L1607 -278M351 1768L1658 -245M405 1802L1712 -211M457 1836L1764 -176M501 1864L1808 -148M553 1899L1861 -114M602 1930L1909 -82M653 1963L1960 -50M706 1998L2013 -15M752 2028L2059 15M804 2061L2111 49M853 2094L2160 81M911 2131L2218 118M957 2161L2264 148M1010 2195L2317 183M1062 2229L2369 216M1102 2255L2409 242M1156 2290L2464 278M1213 2327L2520 314M1261 2358L2568 346M1301 2384L2608 371M1351 2417L2658 404M1406 2453L2713 440M1451 2482L2758 469M1504 2516L2811 503M1552 2547L2859 534M1611 2586L2918 573M1663 2619L2970 607M1715 2653L3022 640M1754 2679L3061 666M1813 2717L3120 704M1862 2749L3170 736M1905 2776L3212 764M1966 2816L3274 804M2018 2850L3325 837M2057 2875L3364 862M2118 2915L3426 902M2160 2942L3468 930M2212 2976L3519 963M2270 3014L3577 1001M2318 3045L3625 1032M2358 3071L3665 1058M2413 3106L3720 1093M2464 3140L3771 1127M2512 3171L3819 1158M2560 3202L3867 1189M2612 3236L3919 1223M2668 3272L3976 1260M2708 3298L4015 1285M2767 3336L4074 1323M2815 3368L4122 1355M2859 3396L4166 1383M2914 3432L4221 1419" fill="none" stroke="#d3cfd7" stroke-width="0.9" clip-path="url(#zS)"/>
<path d="M13 171L2308 -530M22 203L2317 -499M31 231L2326 -471M44 273L2339 -429M53 303L2348 -399M63 337L2359 -364M71 362L2366 -340M81 396L2376 -306M90 426L2386 -276M103 466L2398 -236M111 493L2406 -209M121 524L2416 -177M131 560L2426 -142M143 597L2438 -105M152 629L2448 -73M161 656L2456 -46M170 687L2465 -15M183 727L2478 25M191 756L2487 55M202 790L2497 88M210 817L2505 115M220 849L2515 147M232 887L2527 186M241 917L2536 216M250 946L2545 245M262 987L2557 286M271 1017L2566 315M282 1051L2577 349M289 1077L2585 375M302 1117L2597 415M309 1141L2604 440M322 1182L2617 480M330 1210L2625 509M340 1242L2635 540M350 1276L2646 575M362 1312L2657 611M369 1339L2665 637M379 1370L2674 668M390 1406L2685 704M399 1436L2694 734M409 1467L2704 765M419 1500L2714 798M428 1531L2724 830M439 1565L2734 864M449 1599L2744 897M459 1632L2754 930M470 1668L2765 967M479 1696L2774 995M489 1731L2785 1029M498 1760L2794 1059M509 1794L2804 1093M518 1824L2813 1122M528 1859L2824 1157M538 1889L2833 1187M550 1928L2845 1227M559 1959L2854 1257M568 1988L2863 1286M579 2023L2874 1322M590 2060L2885 1359M598 2085L2893 1383M610 2124L2905 1423M618 2153L2914 1451M629 2186L2924 1484M640 2222L2935 1520M648 2250L2943 1548M658 2284L2954 1582M669 2318L2964 1616M680 2353L2975 1652M688 2380L2983 1678M699 2417L2994 1715M709 2448L3004 1747M718 2480L3014 1778M728 2510L3023 1809M738 2542L3033 1841M747 2572L3042 1870M757 2605L3052 1904M767 2637L3062 1935M778 2676L3074 1975M787 2704L3082 2002M797 2736L3092 2034M806 2767L3101 2066" fill="none" stroke="#d3cfd7" stroke-width="0.9" clip-path="url(#zE)"/>
<path d="M3191 -634L3892 1661M3141 -619L3842 1676M3094 -605L3795 1691M3050 -591L3752 1704M3001 -576L3702 1719M2950 -561L3652 1735M2898 -545L3600 1750M2853 -531L3554 1764M2799 -514L3500 1781M2752 -500L3453 1795M2692 -482L3393 1814M2642 -466L3343 1829M2598 -453L3300 1842M2553 -439L3255 1856M2493 -421L3194 1874M2453 -409L3154 1887M2402 -393L3104 1902M2358 -380L3060 1916M2302 -363L3004 1933M2251 -347L2953 1948M2201 -332L2903 1964M2156 -318L2858 1977M2102 -301L2803 1994M2059 -288L2761 2007M2006 -272L2708 2023M1959 -257L2660 2038M1904 -241L2606 2054M1860 -227L2562 2068M1811 -212L2512 2083M1757 -196L2458 2099M1708 -181L2410 2114M1653 -164L2355 2131M1604 -149L2306 2146M1551 -133L2253 2162M1503 -118L2204 2177M1452 -103L2154 2193M1400 -87L2102 2208M1357 -74L2059 2221M1309 -59L2010 2236M1249 -41L1951 2255M1212 -29L1914 2266M1154 -11L1855 2284M1105 3L1807 2299M1064 16L1766 2311M1003 35L1704 2330M952 50L1654 2345M906 64L1608 2359M855 80L1557 2375M804 95L1506 2391M764 108L1466 2403M709 125L1411 2420M660 140L1361 2435M605 156L1307 2452M556 171L1257 2467M506 187L1207 2482M459 201L1161 2496M405 217L1107 2513M359 232L1060 2527M309 247L1010 2542M266 260L968 2555M219 274L921 2569M168 290L870 2585M115 306L816 2601M69 320L770 2615M8 339L710 2634M-37 353L664 2648M-88 368L614 2663M-138 383L564 2679M-188 399L513 2694M-235 413L466 2708M-278 426L424 2721M-339 445L362 2740M-388 460L313 2755M-434 474L267 2769M-485 490L217 2785M-536 505L165 2800M-577 518L125 2813M-637 536L65 2831M-679 549L22 2844M-726 563L-25 2859M-779 579L-77 2875" fill="none" stroke="#d3cfd7" stroke-width="0.9" clip-path="url(#zE)"/>
<path d="M1472.0 1355.0C1498.7 1350.7 1561.0 1326.3 1600.0 1314.0C1639.0 1301.7 1682.7 1281.7 1706.0 1281.0C1729.3 1280.3 1740.2 1299.2 1740.0 1310.0C1739.8 1320.8 1715.0 1336.0 1705.0 1346.0C1695.0 1356.0 1688.2 1361.7 1680.0 1370.0C1671.8 1378.3 1709.3 1391.7 1656.0 1396.0C1602.7 1400.3 1407.3 1403.7 1360.0 1396.0C1312.7 1388.3 1363.7 1361.0 1372.0 1350.0C1380.3 1339.0 1398.7 1331.7 1410.0 1330.0C1421.3 1328.3 1429.7 1335.8 1440.0 1340.0C1450.3 1344.2 1445.3 1359.3 1472.0 1355.0Z" fill="#e6e4e3" opacity=".9" filter="url(#b6)"/>
<path d="M1706.0 1281.0C1709.3 1271.8 1739.3 1262.7 1760.0 1255.0C1780.7 1247.3 1804.2 1238.8 1830.0 1235.0C1855.8 1231.2 1896.7 1230.3 1915.0 1232.0C1933.3 1233.7 1935.8 1239.3 1940.0 1245.0C1944.2 1250.7 1950.0 1261.8 1940.0 1266.0C1930.0 1270.2 1898.3 1267.0 1880.0 1270.0C1861.7 1273.0 1847.8 1279.0 1830.0 1284.0C1812.2 1289.0 1788.0 1295.7 1773.0 1300.0C1758.0 1304.3 1751.2 1313.2 1740.0 1310.0C1728.8 1306.8 1702.7 1290.2 1706.0 1281.0Z" fill="#e6e4e3" opacity=".9" filter="url(#b6)"/>
<path d="M1440.0 905.0C1447.2 900.0 1468.3 895.8 1475.0 900.0C1481.7 904.2 1484.2 922.5 1480.0 930.0C1475.8 937.5 1458.0 945.0 1450.0 945.0C1442.0 945.0 1433.7 936.7 1432.0 930.0C1430.3 923.3 1432.8 910.0 1440.0 905.0Z" fill="#e6e4e3" opacity=".9" filter="url(#b6)"/>
<path d="M2130.0 940.0C2135.8 930.8 2152.5 921.7 2160.0 925.0C2167.5 928.3 2176.7 949.2 2175.0 960.0C2173.3 970.8 2158.3 986.7 2150.0 990.0C2141.7 993.3 2128.3 988.3 2125.0 980.0C2121.7 971.7 2124.2 949.2 2130.0 940.0Z" fill="#e6e4e3" opacity=".9" filter="url(#b6)"/>
<g opacity=".6"><path d="M316 1165L2612 463M319 1172L2614 470M321 1180L2616 479M324 1189L2619 487M326 1195L2621 494M328 1203L2623 501M330 1211L2626 509M333 1219L2628 517M335 1226L2630 525M337 1234L2633 532M340 1242L2635 540M342 1248L2637 547M344 1256L2639 554M347 1264L2642 562M349 1272L2644 571M351 1279L2646 578M354 1287L2649 586M356 1294L2651 592M358 1302L2653 600M361 1310L2656 608M363 1318L2658 616M366 1326L2661 624M368 1333L2663 632M370 1340L2665 639M373 1348L2668 647M375 1356L2670 654M377 1364L2672 662M379 1371L2674 669M382 1380L2677 678M384 1386L2679 685M387 1395L2682 693M389 1403L2684 701M391 1409L2686 707M394 1417L2689 716M396 1425L2691 724M398 1433L2694 732M401 1440L2696 738M403 1448L2698 746M405 1455L2700 753M408 1464L2703 762M410 1470L2705 769M412 1479L2707 777M414 1486L2710 784M417 1494L2712 792M420 1502L2715 800M421 1509L2717 807M424 1517L2719 816M426 1524L2721 823M429 1533L2724 831M431 1540L2726 838M433 1547L2728 845M436 1556L2731 854M438 1563L2733 861M440 1570L2735 868M442 1577L2738 876M445 1586L2740 884M447 1593L2742 891M450 1601L2745 899M452 1608L2747 906M454 1616L2749 914M457 1624L2752 922M459 1632L2754 930M461 1638L2756 937M464 1647L2759 945M466 1655L2761 953M468 1662L2763 960M471 1670L2766 969M473 1678L2768 976M476 1686L2771 984M478 1692L2773 991M480 1700L2775 998M482 1708L2778 1006M485 1716L2780 1015M487 1723L2782 1022M489 1731L2785 1029M492 1739L2787 1037M494 1746L2789 1044M496 1753L2791 1052M499 1761L2794 1059M501 1770L2796 1068M503 1777L2799 1075" fill="none" stroke="#c9c6c6" stroke-width="0.7" clip-path="url(#zT)"/><path d="M1512 -121L2214 2174M1505 -119L2207 2176M1498 -117L2199 2179M1490 -114L2191 2181M1483 -112L2184 2183M1475 -109L2176 2186M1466 -107L2168 2188M1459 -105L2160 2191M1451 -102L2153 2193M1444 -100L2145 2195M1436 -98L2137 2198M1428 -95L2130 2200M1421 -93L2122 2202M1413 -91L2115 2205M1406 -89L2108 2207M1398 -86L2099 2209M1390 -84L2092 2211M1382 -81L2084 2214M1375 -79L2076 2216M1368 -77L2069 2218M1360 -75L2062 2221M1351 -72L2053 2223M1345 -70L2047 2225M1337 -67L2038 2228M1329 -65L2031 2230M1322 -63L2023 2232M1313 -60L2015 2235M1305 -58L2007 2237M1299 -56L2001 2239M1291 -53L1992 2242M1283 -51L1985 2244M1275 -49L1977 2247M1268 -46L1970 2249M1261 -44L1962 2251M1253 -42L1955 2253M1245 -39L1947 2256M1237 -37L1938 2258M1230 -35L1931 2261M1222 -32L1924 2263M1214 -30L1915 2265M1206 -27L1908 2268M1199 -25L1901 2270M1192 -23L1894 2272M1184 -21L1886 2274M1177 -18L1878 2277M1169 -16L1870 2279M1161 -14L1863 2281M1154 -11L1855 2284M1146 -9L1848 2286M1138 -6L1839 2289M1130 -4L1831 2291M1122 -2L1824 2293M1115 0L1817 2296M1107 3L1809 2298M1100 5L1801 2300M1092 7L1794 2303M1084 10L1786 2305M1077 12L1779 2307M1069 14L1771 2310M1061 17L1762 2312M1054 19L1756 2314M1046 22L1748 2317M1038 24L1740 2319M1030 26L1732 2322M1023 28L1725 2324M1016 31L1717 2326M1008 33L1710 2328M1000 36L1702 2331M993 38L1694 2333M984 40L1686 2336M977 43L1678 2338M969 45L1671 2340M963 47L1664 2342M955 49L1657 2345M946 52L1648 2347M938 54L1640 2350M931 57L1633 2352M923 59L1625 2354M917 61L1618 2356M908 64L1610 2359M900 66L1602 2361" fill="none" stroke="#c9c6c6" stroke-width="0.7" clip-path="url(#zT)"/></g>
<path d="M1656.4 1398.0C1658.3 1395.7 1664.1 1388.7 1668.0 1384.0C1671.9 1379.3 1675.9 1374.7 1679.8 1370.0C1683.7 1365.3 1687.2 1359.9 1691.5 1356.0C1695.8 1352.1 1700.9 1350.0 1705.6 1346.5C1710.3 1343.0 1715.8 1339.1 1719.7 1334.8C1723.6 1330.5 1725.9 1324.7 1729.0 1320.8C1732.1 1316.9 1733.3 1313.8 1738.4 1311.4C1743.5 1309.1 1753.6 1308.7 1759.5 1306.7C1765.4 1304.8 1767.3 1302.1 1773.6 1299.7C1779.8 1297.3 1791.2 1294.9 1797.0 1292.6C1802.8 1290.2 1802.9 1287.1 1808.7 1285.6C1814.5 1284.0 1824.3 1284.5 1832.1 1283.3C1839.9 1282.1 1847.8 1280.5 1855.6 1278.6C1863.4 1276.6 1871.2 1273.5 1879.0 1271.6C1886.8 1269.6 1895.6 1267.8 1902.4 1266.9C1909.2 1266.1 1913.7 1267.4 1920.0 1266.5C1926.3 1265.6 1934.6 1264.0 1940.0 1261.5C1945.4 1259.0 1945.4 1254.0 1952.5 1251.5C1959.6 1249.0 1972.1 1246.9 1982.5 1246.5C1992.9 1246.1 2005.4 1249.0 2015.0 1249.0C2024.6 1249.0 2032.5 1248.2 2040.0 1246.5C2047.5 1244.8 2053.3 1241.1 2060.0 1239.0C2066.7 1236.9 2073.3 1236.1 2080.0 1234.0C2086.7 1231.9 2092.5 1228.6 2100.0 1226.5C2107.5 1224.4 2116.7 1222.3 2125.0 1221.5C2133.3 1220.7 2142.5 1222.8 2150.0 1221.5C2157.5 1220.2 2162.5 1216.1 2170.0 1214.0C2177.5 1211.9 2186.7 1210.2 2195.0 1209.0C2203.3 1207.8 2211.7 1207.8 2220.0 1206.5C2228.3 1205.2 2235.8 1202.3 2245.0 1201.5C2254.2 1200.7 2266.7 1202.3 2275.0 1201.5C2283.3 1200.7 2287.5 1197.3 2295.0 1196.5C2302.5 1195.7 2311.7 1197.8 2320.0 1196.5C2328.3 1195.2 2337.5 1191.5 2345.0 1189.0C2352.5 1186.5 2358.8 1183.6 2365.0 1181.5C2371.2 1179.4 2375.8 1177.8 2382.5 1176.5C2389.2 1175.2 2400.4 1173.2 2405.0 1174.0C2409.6 1174.8 2407.5 1179.8 2410.0 1181.5C2412.5 1183.2 2415.8 1184.4 2420.0 1184.0C2424.2 1183.6 2432.9 1181.5 2435.0 1179.0C2437.1 1176.5 2430.8 1171.5 2432.5 1169.0C2434.2 1166.5 2440.0 1165.7 2445.0 1164.0C2450.0 1162.3 2456.7 1161.0 2462.5 1159.0C2468.3 1157.0 2477.1 1153.2 2480.0 1152.0L2480 1400L1656 1400Z" fill="#aad3e0"/>
<path d="M1556.0 840.0C1527.8 843.7 1546.0 855.7 1540.0 862.0C1534.0 868.3 1526.7 873.0 1520.0 878.0C1513.3 883.0 1506.7 887.5 1500.0 892.0C1493.3 896.5 1485.0 901.7 1480.0 905.0C1475.0 908.3 1471.3 909.2 1470.0 912.0C1468.7 914.8 1468.7 920.5 1472.0 922.0C1475.3 923.5 1483.7 922.2 1490.0 921.0C1496.3 919.8 1504.2 917.5 1510.0 915.0C1515.8 912.5 1521.2 908.7 1525.0 906.0C1528.8 903.3 1530.7 899.5 1533.0 899.0C1535.3 898.5 1537.7 898.7 1539.0 903.0C1540.3 907.3 1541.2 917.2 1541.0 925.0C1540.8 932.8 1539.5 940.8 1538.0 950.0C1536.5 959.2 1533.7 970.0 1532.0 980.0C1530.3 990.0 1529.0 1000.0 1528.0 1010.0C1527.0 1020.0 1525.8 1031.0 1526.0 1040.0C1526.2 1049.0 1526.7 1060.7 1529.0 1064.0C1531.3 1067.3 1536.8 1065.7 1540.0 1060.0C1543.2 1054.3 1545.3 1040.0 1548.0 1030.0C1550.7 1020.0 1547.3 1006.7 1556.0 1000.0C1564.7 993.3 1584.3 992.5 1600.0 990.0C1615.7 987.5 1635.0 990.0 1650.0 985.0C1665.0 980.0 1682.7 968.3 1690.0 960.0C1697.3 951.7 1692.3 943.0 1694.0 935.0C1695.7 927.0 1698.0 919.5 1700.0 912.0C1702.0 904.5 1704.3 897.8 1706.0 890.0C1707.7 882.2 1709.5 873.3 1710.0 865.0C1710.5 856.7 1734.7 844.2 1709.0 840.0C1683.3 835.8 1584.2 836.3 1556.0 840.0Z" fill="#aad3e0"/>
<path d="M1668 868l6 0 4 8-2 8-5-3-4-8z" fill="#dfe9d6"/>
<path d="M2117.5 1112.5C2118.1 1109.0 2118.8 1102.1 2122.5 1097.5C2126.2 1092.9 2133.8 1089.2 2140.0 1085.0C2146.2 1080.8 2153.3 1077.1 2160.0 1072.5C2166.7 1067.9 2174.2 1062.1 2180.0 1057.5C2185.8 1052.9 2190.4 1049.2 2195.0 1045.0C2199.6 1040.8 2203.3 1037.1 2207.5 1032.5C2211.7 1027.9 2215.4 1021.7 2220.0 1017.5C2224.6 1013.3 2230.4 1010.4 2235.0 1007.5C2239.6 1004.6 2244.0 1001.2 2247.5 1000.0C2251.0 998.8 2255.4 998.3 2256.2 1000.0C2257.1 1001.7 2255.2 1006.7 2252.5 1010.0C2249.8 1013.3 2243.3 1016.2 2240.0 1020.0C2236.7 1023.8 2235.0 1027.9 2232.5 1032.5C2230.0 1037.1 2227.9 1043.3 2225.0 1047.5C2222.1 1051.7 2218.3 1053.8 2215.0 1057.5C2211.7 1061.2 2209.2 1066.2 2205.0 1070.0C2200.8 1073.8 2195.8 1076.7 2190.0 1080.0C2184.2 1083.3 2176.2 1086.7 2170.0 1090.0C2163.8 1093.3 2157.9 1096.2 2152.5 1100.0C2147.1 1103.8 2142.1 1109.2 2137.5 1112.5C2132.9 1115.8 2128.1 1119.0 2125.0 1120.0C2121.9 1121.0 2120.0 1120.0 2118.8 1118.8C2117.5 1117.5 2116.9 1116.0 2117.5 1112.5Z" fill="#aad3e0"/>
<path d="M1813.0 1103.0C1812.7 1097.5 1818.2 1078.8 1820.0 1070.0C1821.8 1061.2 1823.2 1056.3 1824.0 1050.0C1824.8 1043.7 1824.0 1034.2 1825.0 1032.0C1826.0 1029.8 1828.2 1036.3 1830.0 1037.0C1831.8 1037.7 1833.0 1037.7 1836.0 1036.0C1839.0 1034.3 1844.7 1028.3 1848.0 1027.0C1851.3 1025.7 1856.3 1027.2 1856.0 1028.0C1855.7 1028.8 1849.3 1029.7 1846.0 1032.0C1842.7 1034.3 1838.3 1038.0 1836.0 1042.0C1833.7 1046.0 1833.2 1051.3 1832.0 1056.0C1830.8 1060.7 1829.7 1065.2 1829.0 1070.0C1828.3 1074.8 1829.2 1079.5 1828.0 1085.0C1826.8 1090.5 1824.5 1100.0 1822.0 1103.0C1819.5 1106.0 1813.3 1108.5 1813.0 1103.0Z" fill="#aad3e0"/>
<path d="M1856.0 1028.0C1856.2 1026.5 1858.8 1023.2 1860.0 1023.0C1861.2 1022.8 1862.0 1024.8 1863.0 1027.0C1864.0 1029.2 1865.2 1033.0 1866.0 1036.0C1866.8 1039.0 1866.8 1043.7 1868.0 1045.0C1869.2 1046.3 1872.3 1045.8 1873.0 1044.0C1873.7 1042.2 1870.8 1035.3 1872.0 1034.0C1873.2 1032.7 1877.0 1037.0 1880.0 1036.0C1883.0 1035.0 1886.7 1030.7 1890.0 1028.0C1893.3 1025.3 1897.7 1023.0 1900.0 1020.0C1902.3 1017.0 1903.0 1013.3 1904.0 1010.0C1905.0 1006.7 1904.7 1004.0 1906.0 1000.0C1907.3 996.0 1910.3 989.3 1912.0 986.0C1913.7 982.7 1915.8 981.0 1916.0 980.0C1916.2 979.0 1914.3 978.0 1913.0 980.0C1911.7 982.0 1909.5 988.7 1908.0 992.0C1906.5 995.3 1904.8 996.7 1904.0 1000.0C1903.2 1003.3 1902.5 1009.0 1903.0 1012.0C1903.5 1015.0 1907.5 1015.0 1907.0 1018.0C1906.5 1021.0 1902.8 1025.7 1900.0 1030.0C1897.2 1034.3 1893.0 1039.7 1890.0 1044.0C1887.0 1048.3 1884.8 1052.2 1882.0 1056.0C1879.2 1059.8 1875.7 1063.7 1873.0 1067.0C1870.3 1070.3 1868.2 1073.0 1866.0 1076.0C1863.8 1079.0 1862.0 1081.8 1860.0 1085.0C1858.0 1088.2 1856.3 1092.0 1854.0 1095.0C1851.7 1098.0 1848.5 1101.7 1846.0 1103.0C1843.5 1104.3 1839.0 1104.8 1839.0 1103.0C1839.0 1101.2 1843.3 1096.5 1846.0 1092.0C1848.7 1087.5 1853.0 1081.3 1855.0 1076.0C1857.0 1070.7 1857.2 1065.3 1858.0 1060.0C1858.8 1054.7 1859.8 1048.7 1860.0 1044.0C1860.2 1039.3 1859.7 1034.7 1859.0 1032.0C1858.3 1029.3 1855.8 1029.5 1856.0 1028.0Z" fill="#aad3e0"/>
<path d="M1917.0 840.0C1923.3 837.4 1954.1 837.2 1959.6 840.0C1965.1 842.8 1954.2 852.3 1950.0 857.0C1945.8 861.7 1939.1 863.5 1934.4 868.0C1929.7 872.5 1925.2 879.5 1921.8 884.0C1918.4 888.5 1916.1 890.8 1914.0 895.0C1911.9 899.2 1912.7 906.9 1909.0 909.0C1905.3 911.1 1894.6 909.5 1892.0 907.7C1889.4 905.9 1891.7 901.5 1893.5 898.0C1895.3 894.5 1899.6 891.4 1903.0 887.0C1906.4 882.6 1910.9 876.7 1914.0 871.5C1917.1 866.3 1921.3 861.0 1921.8 855.7C1922.3 850.5 1910.7 842.6 1917.0 840.0Z" fill="#aad3e0"/>
<path d="M2025.7 840.0C2028.3 836.9 2041.7 836.1 2044.6 840.0C2047.5 843.9 2044.0 855.7 2043.0 863.6C2042.0 871.5 2039.9 880.1 2038.3 887.2C2036.7 894.3 2035.6 900.2 2033.5 906.0C2031.4 911.8 2028.3 916.5 2025.7 921.8C2023.1 927.1 2019.9 933.9 2017.8 937.6C2015.7 941.3 2013.5 944.4 2013.0 943.9C2012.5 943.4 2013.4 938.6 2014.7 934.4C2016.0 930.2 2018.9 924.5 2021.0 918.7C2023.1 912.9 2025.7 906.4 2027.3 899.8C2028.9 893.2 2030.2 886.1 2030.4 879.3C2030.7 872.5 2029.6 865.4 2028.8 858.9C2028.0 852.4 2023.1 843.1 2025.7 840.0Z" fill="#aad3e0"/>
<path d="M2046.0 840.0C2055.7 837.4 2105.2 837.4 2115.4 840.0C2125.7 842.6 2110.9 850.5 2107.5 855.7C2104.1 861.0 2096.6 866.2 2095.0 871.5C2093.4 876.8 2098.5 881.5 2098.0 887.2C2097.5 893.0 2094.7 900.2 2091.8 906.0C2088.9 911.8 2084.7 916.5 2080.8 921.8C2076.9 927.1 2071.6 932.9 2068.2 937.6C2064.8 942.3 2063.2 948.4 2060.3 950.0C2057.4 951.6 2050.9 949.1 2050.9 947.0C2050.9 944.9 2056.1 941.8 2060.3 937.6C2064.5 933.4 2071.8 927.1 2076.0 921.8C2080.2 916.5 2083.1 911.8 2085.5 906.0C2087.9 900.2 2089.7 893.0 2090.2 887.2C2090.7 881.5 2091.0 873.3 2088.6 871.5C2086.2 869.7 2079.9 877.0 2076.0 876.2C2072.1 875.4 2068.2 870.2 2065.0 866.8C2061.8 863.4 2060.2 860.2 2057.0 855.7C2053.8 851.2 2036.3 842.6 2046.0 840.0Z" fill="#aad3e0"/>
<path d="M2151.6 855.7C2154.0 853.4 2157.4 856.0 2156.3 860.5C2155.2 865.0 2148.2 878.3 2145.3 882.5C2142.4 886.7 2139.6 886.9 2139.0 885.6C2138.4 884.3 2139.9 879.6 2142.0 874.6C2144.1 869.6 2149.2 858.1 2151.6 855.7Z" fill="#aad3e0"/>
<path d="M2076 848c8-3 20-2 24 4s-6 12-14 10-8-6-10-14z" fill="#cfe3c4"/>
<path d="M2345.0 908.8C2345.8 906.7 2353.3 904.9 2357.5 905.5C2361.7 906.1 2368.8 910.2 2370.0 912.5C2371.2 914.8 2367.9 918.6 2365.0 919.5C2362.1 920.4 2355.8 919.8 2352.5 918.0C2349.2 916.2 2344.2 910.8 2345.0 908.8Z" fill="#aad3e0"/>
<path d="M2380.0 980.0C2382.1 978.3 2387.1 985.0 2387.5 990.0C2387.9 995.0 2382.1 1005.0 2382.5 1010.0C2382.9 1015.0 2385.4 1019.2 2390.0 1020.0C2394.6 1020.8 2406.5 1015.0 2410.0 1015.0C2413.5 1015.0 2414.6 1017.9 2411.2 1020.0C2407.9 1022.1 2395.6 1027.5 2390.0 1027.5C2384.4 1027.5 2380.0 1024.6 2377.5 1020.0C2375.0 1015.4 2374.6 1006.7 2375.0 1000.0C2375.4 993.3 2377.9 981.7 2380.0 980.0Z" fill="#aad3e0"/>
<path d="M2350.0 837.5C2352.1 835.8 2363.3 835.8 2367.5 837.5C2371.7 839.2 2375.4 845.2 2375.0 847.5C2374.6 849.8 2368.3 851.2 2365.0 851.2C2361.7 851.3 2357.5 850.3 2355.0 848.0C2352.5 845.7 2347.9 839.2 2350.0 837.5Z" fill="#aad3e0"/>
<path d="M2398.8 848.8C2400.4 847.4 2412.7 846.3 2416.2 847.0C2419.8 847.7 2421.7 851.7 2420.0 853.0C2418.3 854.3 2409.8 855.7 2406.2 855.0C2402.7 854.3 2397.1 850.1 2398.8 848.8Z" fill="#aad3e0"/>
<path d="M1212 840 L1262 840 L1258 852 L1244 861 L1226 858 L1215 850Z" fill="#aad3e0"/>
<ellipse cx="1049" cy="962" rx="6" ry="12" transform="rotate(20 1049 962)" fill="#aad3e0"/>
<ellipse cx="1085" cy="1118" rx="5" ry="9" transform="rotate(10 1085 1118)" fill="#aad3e0"/>
<ellipse cx="966" cy="1021" rx="10" ry="6" transform="rotate(0 966 1021)" fill="#aad3e0"/>
<ellipse cx="1128" cy="1342" rx="5" ry="12" transform="rotate(15 1128 1342)" fill="#aad3e0"/>
<ellipse cx="1133" cy="1240" rx="4" ry="8" transform="rotate(0 1133 1240)" fill="#aad3e0"/>
<path d="M1056.2 1199.0 L1077.5 1181.5 L1087.5 1186.5 L1090.0 1199.0 L1097.5 1224.0 L1110.0 1234.0 L1107.5 1249.0 L1075.0 1246.5 L1070.0 1229.0 L1062.5 1209.0Z" fill="#b9dbb0" stroke="#8fc98a" stroke-width="1"/>
<path d="M1071.2 1209.0C1075.0 1204.4 1093.5 1204.8 1097.5 1209.0C1101.5 1213.2 1098.8 1229.4 1095.0 1234.0C1091.2 1238.6 1079.0 1240.7 1075.0 1236.5C1071.0 1232.3 1067.5 1213.6 1071.2 1209.0Z" fill="#aad3e0"/>
<path d="M1302.5 972.5C1305.8 966.7 1316.7 960.4 1325.0 960.0C1333.3 959.6 1347.5 964.2 1352.5 970.0C1357.5 975.8 1356.7 986.7 1355.0 995.0C1353.3 1003.3 1346.7 1014.6 1342.5 1020.0C1338.3 1025.4 1334.6 1028.3 1330.0 1027.5C1325.4 1026.7 1319.2 1020.4 1315.0 1015.0C1310.8 1009.6 1307.1 1002.1 1305.0 995.0C1302.9 987.9 1299.2 978.3 1302.5 972.5Z" fill="#e8d5c8" opacity=".8"/>
<path d="M645.0 850.0C646.2 858.3 649.5 885.0 652.0 900.0C654.5 915.0 656.0 929.2 660.0 940.0C664.0 950.8 671.0 956.7 676.0 965.0C681.0 973.3 688.7 979.2 690.0 990.0C691.3 1000.8 682.3 1016.7 684.0 1030.0C685.7 1043.3 694.7 1059.2 700.0 1070.0C705.3 1080.8 710.2 1088.3 716.0 1095.0C721.8 1101.7 731.0 1103.3 735.0 1110.0C739.0 1116.7 739.2 1130.8 740.0 1135.0" fill="none" stroke="#b4d5e6" stroke-width="1.400" stroke-linecap="round"/>
<path d="M690.0 990.0C695.0 991.7 713.7 993.3 720.0 1000.0C726.3 1006.7 729.3 1020.0 728.0 1030.0C726.7 1040.0 713.3 1050.8 712.0 1060.0C710.7 1069.2 718.7 1080.8 720.0 1085.0" fill="none" stroke="#b4d5e6" stroke-width="1.400" stroke-linecap="round"/>
<path d="M840.0 990.0C836.7 995.0 821.3 1008.3 820.0 1020.0C818.7 1031.7 835.3 1050.8 832.0 1060.0C828.7 1069.2 808.7 1070.0 800.0 1075.0C791.3 1080.0 786.7 1088.3 780.0 1090.0C773.3 1091.7 766.7 1084.2 760.0 1085.0C753.3 1085.8 743.3 1093.3 740.0 1095.0" fill="none" stroke="#b4d5e6" stroke-width="1.400" stroke-linecap="round"/>
<path d="M832.0 1060.0C836.7 1062.5 852.0 1076.7 860.0 1075.0C868.0 1073.3 872.5 1055.8 880.0 1050.0C887.5 1044.2 896.7 1045.0 905.0 1040.0C913.3 1035.0 921.7 1022.5 930.0 1020.0C938.3 1017.5 947.5 1021.7 955.0 1025.0C962.5 1028.3 969.2 1039.2 975.0 1040.0C980.8 1040.8 987.5 1031.7 990.0 1030.0" fill="none" stroke="#b4d5e6" stroke-width="1.400" stroke-linecap="round"/>
<path d="M790.0 1075.0C791.7 1080.8 793.3 1099.2 800.0 1110.0C806.7 1120.8 822.5 1130.0 830.0 1140.0C837.5 1150.0 836.7 1162.5 845.0 1170.0C853.3 1177.5 869.2 1180.0 880.0 1185.0C890.8 1190.0 901.7 1200.0 910.0 1200.0C918.3 1200.0 921.7 1188.3 930.0 1185.0C938.3 1181.7 950.8 1184.2 960.0 1180.0C969.2 1175.8 980.8 1163.3 985.0 1160.0" fill="none" stroke="#b4d5e6" stroke-width="1.400" stroke-linecap="round"/>
<path d="M1100.0 1145.0C1101.7 1150.8 1105.8 1168.3 1110.0 1180.0C1114.2 1191.7 1120.0 1201.7 1125.0 1215.0C1130.0 1228.3 1135.8 1247.5 1140.0 1260.0C1144.2 1272.5 1150.8 1280.0 1150.0 1290.0C1149.2 1300.0 1138.7 1310.8 1135.0 1320.0C1131.3 1329.2 1130.5 1336.7 1128.0 1345.0C1125.5 1353.3 1125.5 1361.5 1120.0 1370.0C1114.5 1378.5 1099.2 1391.7 1095.0 1396.0" fill="none" stroke="#b4d5e6" stroke-width="1.400" stroke-linecap="round"/>
<path d="M1010.0 1296.0C1006.7 1298.3 995.8 1302.7 990.0 1310.0C984.2 1317.3 980.0 1330.0 975.0 1340.0C970.0 1350.0 965.8 1360.7 960.0 1370.0C954.2 1379.3 943.3 1391.7 940.0 1396.0" fill="none" stroke="#b4d5e6" stroke-width="1.400" stroke-linecap="round"/>
<path d="M1290.0 860.0C1293.3 865.0 1301.7 883.3 1310.0 890.0C1318.3 896.7 1336.7 893.3 1340.0 900.0C1343.3 906.7 1328.3 921.7 1330.0 930.0C1331.7 938.3 1342.5 945.0 1350.0 950.0C1357.5 955.0 1370.8 958.3 1375.0 960.0" fill="none" stroke="#b4d5e6" stroke-width="1.400" stroke-linecap="round"/>
<path d="M1905.0 940.0C1904.2 946.7 1902.5 968.3 1900.0 980.0C1897.5 991.7 1893.3 1000.0 1890.0 1010.0C1886.7 1020.0 1881.7 1035.0 1880.0 1040.0" fill="none" stroke="#b4d5e6" stroke-width="1.400" stroke-linecap="round"/>
<path d="M2140.0 985.0C2139.2 989.2 2139.2 1002.5 2135.0 1010.0C2130.8 1017.5 2119.2 1023.3 2115.0 1030.0C2110.8 1036.7 2110.8 1046.7 2110.0 1050.0" fill="none" stroke="#b4d5e6" stroke-width="1.400" stroke-linecap="round"/>
<path d="M2200.0 860.0C2199.3 866.7 2197.7 886.7 2196.0 900.0C2194.3 913.3 2190.0 926.7 2190.0 940.0C2190.0 953.3 2193.5 968.3 2196.0 980.0C2198.5 991.7 2203.5 1005.0 2205.0 1010.0" fill="none" stroke="#b4d5e6" stroke-width="1.400" stroke-linecap="round"/>
<path d="M2330.0 905.0C2328.3 909.2 2325.0 921.7 2320.0 930.0C2315.0 938.3 2308.3 945.8 2300.0 955.0C2291.7 964.2 2278.0 977.5 2270.0 985.0C2262.0 992.5 2255.0 997.5 2252.0 1000.0" fill="none" stroke="#b4d5e6" stroke-width="1.400" stroke-linecap="round"/>
<path d="M2080.0 1150.0C2075.0 1151.7 2061.7 1158.0 2050.0 1160.0C2038.3 1162.0 2020.8 1163.7 2010.0 1162.0C1999.2 1160.3 1989.2 1152.0 1985.0 1150.0" fill="none" stroke="#b4d5e6" stroke-width="1.400" stroke-linecap="round"/>
<path d="M2110.0 1190.0C2106.7 1187.5 2097.5 1178.7 2090.0 1175.0C2082.5 1171.3 2069.2 1169.2 2065.0 1168.0" fill="none" stroke="#b4d5e6" stroke-width="1.400" stroke-linecap="round"/>
<path d="M1916.0 980.0C1916.5 977.7 1918.8 973.6 1918.7 966.0C1918.6 958.4 1916.8 943.9 1915.5 934.4C1914.2 924.9 1911.6 913.2 1910.8 909.0" fill="none" stroke="#b4d5e6" stroke-width="1.400" stroke-linecap="round"/>
<path d="M2013.0 944.0C2012.2 946.7 2010.2 954.8 2008.0 960.0C2005.8 965.2 2002.0 970.8 2000.0 975.0C1998.0 979.2 1996.7 983.3 1996.0 985.0" fill="none" stroke="#b4d5e6" stroke-width="1.400" stroke-linecap="round"/>
<path d="M847.0 844.0C847.8 847.7 850.5 858.3 852.0 866.0C853.5 873.7 853.7 881.7 856.0 890.0C858.3 898.3 863.7 905.7 866.0 916.0C868.3 926.3 868.0 940.7 870.0 952.0C872.0 963.3 875.3 972.7 878.0 984.0C880.7 995.3 883.3 1006.7 886.0 1020.0C888.7 1033.3 891.7 1050.7 894.0 1064.0C896.3 1077.3 898.6 1090.8 900.0 1100.0C901.4 1109.2 901.2 1110.0 902.5 1119.0C903.8 1128.0 905.4 1144.4 907.5 1154.0C909.6 1163.6 911.2 1170.7 915.0 1176.5C918.8 1182.3 925.8 1183.2 930.0 1189.0C934.2 1194.8 935.0 1205.2 940.0 1211.5C945.0 1217.8 952.9 1220.7 960.0 1226.5C967.1 1232.3 975.8 1239.8 982.5 1246.5C989.2 1253.2 994.6 1260.2 1000.0 1266.5C1005.4 1272.8 1010.0 1279.4 1015.0 1284.0C1020.0 1288.6 1025.0 1289.0 1030.0 1294.0C1035.0 1299.0 1039.6 1306.5 1045.0 1314.0C1050.4 1321.5 1055.8 1331.9 1062.5 1339.0C1069.2 1346.1 1077.5 1350.2 1085.0 1356.5C1092.5 1362.8 1100.8 1369.6 1107.5 1376.5C1114.2 1383.4 1122.1 1394.4 1125.0 1398.0" fill="none" stroke="#f8cf9f" stroke-width="1.5" stroke-linejoin="round" stroke-linecap="round"/>
<path d="M852.0 866.0C856.7 870.0 870.9 882.3 880.0 890.0C889.1 897.7 897.1 905.0 906.5 912.0C915.9 919.0 925.9 924.7 936.6 932.0C947.3 939.3 960.0 948.0 970.7 956.0C981.4 964.0 990.7 971.7 1000.7 980.0C1010.7 988.3 1020.8 998.3 1030.8 1006.0C1040.8 1013.7 1049.3 1019.0 1060.8 1026.4C1072.3 1033.8 1088.9 1042.1 1100.0 1050.4C1111.1 1058.8 1116.7 1066.7 1127.5 1076.5C1138.3 1086.3 1154.2 1102.1 1165.0 1109.0C1175.8 1115.9 1187.9 1116.3 1192.5 1117.8" fill="none" stroke="#f8cf9f" stroke-width="1.5" stroke-linejoin="round" stroke-linecap="round"/>
<path d="M642.0 1116.5C650.0 1115.0 675.3 1110.5 690.0 1107.8C704.7 1105.1 722.3 1095.9 730.0 1100.3C737.7 1104.7 733.8 1125.5 736.3 1134.0C738.8 1142.5 737.7 1143.6 745.0 1151.5C752.3 1159.4 768.3 1171.9 780.0 1181.5C791.7 1191.1 803.8 1200.7 815.0 1209.0C826.2 1217.3 839.2 1226.5 847.5 1231.5C855.8 1236.5 857.9 1234.8 865.0 1239.0C872.1 1243.2 881.7 1250.7 890.0 1256.5C898.3 1262.3 909.6 1269.2 915.0 1274.0C920.4 1278.8 914.2 1282.6 922.5 1285.3C930.8 1288.0 950.4 1289.0 965.0 1290.3C979.6 1291.5 999.2 1292.2 1010.0 1292.8C1020.8 1293.4 1026.7 1293.8 1030.0 1294.0" fill="none" stroke="#f8cf9f" stroke-width="1.5" stroke-linejoin="round" stroke-linecap="round"/>
<path d="M866.3 1205.3C870.7 1204.2 881.9 1201.7 892.5 1199.0C903.1 1196.3 915.8 1191.3 930.0 1189.0C944.2 1186.7 963.3 1187.0 977.5 1185.3C991.7 1183.6 1000.4 1182.5 1015.0 1179.0C1029.6 1175.5 1046.2 1169.2 1065.0 1164.0C1083.8 1158.8 1110.8 1152.8 1127.5 1147.8C1144.2 1142.8 1150.4 1138.8 1165.0 1134.0C1179.6 1129.2 1195.8 1124.4 1215.0 1119.0C1234.2 1113.6 1260.8 1106.1 1280.0 1101.5C1299.2 1096.9 1313.3 1095.2 1330.0 1091.5C1346.7 1087.8 1361.2 1083.9 1380.0 1079.0C1398.8 1074.1 1429.2 1067.2 1442.5 1062.0C1455.8 1056.8 1457.1 1050.3 1460.0 1048.0" fill="none" stroke="#f8cf9f" stroke-width="1.5" stroke-linejoin="round" stroke-linecap="round"/>
<path d="M866.3 1205.3C866.7 1209.2 869.8 1221.7 868.8 1229.0C867.8 1236.3 860.4 1239.4 860.0 1249.0C859.6 1258.6 866.3 1277.3 866.3 1286.5C866.3 1295.7 865.2 1293.6 860.0 1304.0C854.8 1314.4 845.0 1333.3 835.0 1349.0C825.0 1364.7 805.8 1389.8 800.0 1398.0" fill="none" stroke="#f8cf9f" stroke-width="1.5" stroke-linejoin="round" stroke-linecap="round"/>
<path d="M1030.0 1294.0C1035.8 1293.2 1050.8 1292.3 1065.0 1289.0C1079.2 1285.7 1098.3 1279.0 1115.0 1274.0C1131.7 1269.0 1147.1 1264.0 1165.0 1259.0C1182.9 1254.0 1208.3 1246.1 1222.5 1244.0C1236.7 1241.9 1240.4 1247.3 1250.0 1246.5C1259.6 1245.7 1275.0 1240.2 1280.0 1239.0" fill="none" stroke="#f8cf9f" stroke-width="1.5" stroke-linejoin="round" stroke-linecap="round"/>
<path d="M1227.5 1131.5C1229.2 1139.4 1234.6 1164.0 1237.5 1179.0C1240.4 1194.0 1242.1 1212.3 1245.0 1221.5C1247.9 1230.7 1249.2 1228.2 1255.0 1234.0C1260.8 1239.8 1271.7 1249.8 1280.0 1256.5C1288.3 1263.2 1294.6 1264.8 1305.0 1274.0C1315.4 1283.2 1330.0 1297.8 1342.5 1311.5C1355.0 1325.2 1370.4 1342.4 1380.0 1356.5C1389.6 1370.6 1396.7 1389.4 1400.0 1396.0" fill="none" stroke="#f8cf9f" stroke-width="1.5" stroke-linejoin="round" stroke-linecap="round"/>
<path d="M1280.0 1224.0C1290.0 1221.2 1320.0 1212.7 1340.0 1207.0C1360.0 1201.3 1390.0 1192.8 1400.0 1190.0" fill="none" stroke="#f8cf9f" stroke-width="1.5" stroke-linejoin="round" stroke-linecap="round"/>
<path d="M1427.5 872.5C1427.9 883.8 1429.2 920.4 1430.0 940.0C1430.8 959.6 1430.8 973.3 1432.5 990.0C1434.2 1006.7 1437.9 1023.3 1440.0 1040.0C1442.1 1056.7 1442.9 1073.3 1445.0 1090.0C1447.1 1106.7 1450.0 1123.8 1452.5 1140.0C1455.0 1156.2 1458.8 1179.6 1460.0 1187.5" fill="none" stroke="#f8cf9f" stroke-width="1.5" stroke-linejoin="round" stroke-linecap="round"/>
<path d="M1280.0 887.5C1286.2 885.4 1304.2 879.4 1317.5 875.0C1330.8 870.6 1351.2 861.4 1360.0 861.0C1368.8 860.6 1360.0 870.2 1370.0 872.5C1380.0 874.8 1410.4 875.0 1420.0 875.0C1429.6 875.0 1426.2 872.9 1427.5 872.5" fill="none" stroke="#f8cf9f" stroke-width="1.5" stroke-linejoin="round" stroke-linecap="round"/>
<path d="M1752.5 982.5C1753.8 987.9 1757.1 1003.3 1760.0 1015.0C1762.9 1026.7 1766.7 1040.0 1770.0 1052.5C1773.3 1065.0 1776.2 1077.5 1780.0 1090.0C1783.8 1102.5 1788.3 1115.0 1792.5 1127.5C1796.7 1140.0 1801.7 1154.8 1805.0 1165.0C1808.3 1175.2 1810.0 1178.2 1812.5 1189.0C1815.0 1199.8 1818.8 1223.2 1820.0 1230.0" fill="none" stroke="#f8cf9f" stroke-width="1.5" stroke-linejoin="round" stroke-linecap="round"/>
<path d="M2060.0 956.3C2061.7 961.1 2067.1 977.7 2070.0 985.0C2072.9 992.3 2075.4 993.3 2077.5 1000.0C2079.6 1006.7 2079.6 1015.0 2082.5 1025.0C2085.4 1035.0 2090.4 1047.1 2095.0 1060.0C2099.6 1072.9 2105.8 1089.2 2110.0 1102.5C2114.2 1115.8 2116.2 1127.1 2120.0 1140.0C2123.8 1152.9 2129.6 1170.2 2132.5 1180.0C2135.4 1189.8 2136.7 1195.8 2137.5 1199.0" fill="none" stroke="#f8cf9f" stroke-width="1.5" stroke-linejoin="round" stroke-linecap="round"/>
<path d="M2162.5 844.0C2162.1 846.7 2161.7 854.4 2160.0 860.0C2158.3 865.6 2152.5 870.4 2152.5 877.5C2152.5 884.6 2157.1 894.2 2160.0 902.5C2162.9 910.8 2167.1 918.8 2170.0 927.5C2172.9 936.2 2176.2 950.4 2177.5 955.0" fill="none" stroke="#f8cf9f" stroke-width="1.5" stroke-linejoin="round" stroke-linecap="round"/>
<path d="M1925.0 965.0C1926.2 969.2 1929.6 979.6 1932.5 990.0C1935.4 1000.4 1939.2 1015.8 1942.5 1027.5C1945.8 1039.2 1949.2 1049.6 1952.5 1060.0C1955.8 1070.4 1959.6 1079.6 1962.5 1090.0C1965.4 1100.4 1968.3 1114.6 1970.0 1122.5C1971.7 1130.4 1972.1 1135.0 1972.5 1137.5" fill="none" stroke="#f8cf9f" stroke-width="1.5" stroke-linejoin="round" stroke-linecap="round"/>
<path d="M1800.0 1100.0C1808.3 1097.5 1830.0 1089.4 1850.0 1085.0C1870.0 1080.6 1902.9 1077.1 1920.0 1073.8C1937.1 1070.5 1937.9 1068.1 1952.5 1065.0C1967.1 1061.9 1991.2 1058.8 2007.5 1055.0C2023.8 1051.2 2042.9 1044.6 2050.0 1042.5" fill="none" stroke="#f8cf9f" stroke-width="1.5" stroke-linejoin="round" stroke-linecap="round"/>
<path d="M1700.0 1000.0C1704.2 998.3 1716.3 993.0 1725.0 990.0C1733.7 987.0 1747.5 983.3 1752.0 982.0" fill="none" stroke="#f8cf9f" stroke-width="1.5" stroke-linejoin="round" stroke-linecap="round"/>
<path d="M1985.0 1245.0C1997.5 1242.2 2037.5 1233.5 2060.0 1228.0C2082.5 1222.5 2100.0 1215.8 2120.0 1212.0C2140.0 1208.2 2160.0 1208.3 2180.0 1205.0C2200.0 1201.7 2220.0 1196.2 2240.0 1192.0C2260.0 1187.8 2281.7 1183.7 2300.0 1180.0C2318.3 1176.3 2333.3 1173.3 2350.0 1170.0C2366.7 1166.7 2391.7 1161.7 2400.0 1160.0" fill="none" stroke="#f8cf9f" stroke-width="1.5" stroke-linejoin="round" stroke-linecap="round"/>
<path d="M1250.0 1246.0C1252.0 1253.3 1255.3 1274.3 1262.0 1290.0C1268.7 1305.7 1280.3 1325.0 1290.0 1340.0C1299.7 1355.0 1313.3 1370.7 1320.0 1380.0C1326.7 1389.3 1328.3 1393.3 1330.0 1396.0" fill="none" stroke="#f8cf9f" stroke-width="1.5" stroke-linejoin="round" stroke-linecap="round"/>
<path d="M1712.5 844.0C1714.2 849.6 1719.2 864.4 1722.5 877.5C1725.8 890.6 1729.2 908.8 1732.5 922.5C1735.8 936.2 1739.2 950.0 1742.5 960.0C1745.8 970.0 1750.8 978.8 1752.5 982.5" fill="none" stroke="#f3a79a" stroke-width="1.7" stroke-linejoin="round" stroke-linecap="round"/>
<path d="M1752.5 982.5C1759.2 980.4 1779.6 974.2 1792.5 970.0C1805.4 965.8 1817.5 961.2 1830.0 957.5C1842.5 953.8 1855.0 950.4 1867.5 947.5C1880.0 944.6 1897.9 939.2 1905.0 940.0C1912.1 940.8 1907.5 950.0 1910.0 952.5C1912.5 955.0 1915.4 955.4 1920.0 955.0C1924.6 954.6 1933.3 948.3 1937.5 950.0C1941.7 951.7 1940.4 962.7 1945.0 965.0C1949.6 967.3 1957.5 961.5 1965.0 963.8C1972.5 966.1 1974.2 980.0 1990.0 978.8C2005.8 977.5 2048.3 960.0 2060.0 956.3" fill="none" stroke="#f3a79a" stroke-width="1.7" stroke-linejoin="round" stroke-linecap="round"/>
<path d="M2170.0 965.0C2171.7 964.6 2169.2 966.2 2180.0 962.5C2190.8 958.8 2218.3 948.3 2235.0 942.5C2251.7 936.7 2270.8 932.5 2280.0 927.5C2289.2 922.5 2285.0 917.7 2290.0 912.5C2295.0 907.3 2303.3 901.1 2310.0 896.3C2316.7 891.5 2320.0 886.5 2330.0 883.8C2340.0 881.1 2357.1 882.7 2370.0 880.0C2382.9 877.3 2394.6 873.5 2407.5 867.5C2420.4 861.5 2440.8 847.9 2447.5 844.0" fill="none" stroke="#f3a79a" stroke-width="1.7" stroke-linejoin="round" stroke-linecap="round"/>
<path d="M1971.0 1139.0C1971.5 1142.8 1972.3 1154.4 1973.8 1161.5C1975.3 1168.6 1979.6 1175.2 1980.0 1181.5C1980.4 1187.8 1975.9 1191.9 1976.3 1199.0C1976.7 1206.1 1981.0 1216.3 1982.5 1224.0C1984.0 1231.7 1984.6 1241.5 1985.0 1245.0" fill="none" stroke="#f3a79a" stroke-width="1.7" stroke-linejoin="round" stroke-linecap="round"/>
<path d="M1537.0 844.0C1532.8 846.2 1520.3 852.3 1512.0 857.0C1503.7 861.7 1494.7 867.2 1487.0 872.0C1479.3 876.8 1469.5 883.7 1466.0 886.0" fill="none" stroke="#f3a79a" stroke-width="1.7" stroke-linejoin="round" stroke-linecap="round"/>
<path d="M1427.5 844.0C1425.8 848.3 1424.2 859.8 1417.5 870.0C1410.8 880.2 1393.8 892.5 1387.5 905.0C1381.2 917.5 1382.1 932.5 1380.0 945.0C1377.9 957.5 1377.1 968.3 1375.0 980.0C1372.9 991.7 1369.2 1000.8 1367.5 1015.0C1365.8 1029.2 1363.8 1050.4 1365.0 1065.0C1366.2 1079.6 1371.2 1092.1 1375.0 1102.5C1378.8 1112.9 1383.8 1113.1 1387.5 1127.5C1391.2 1141.9 1396.8 1170.2 1397.5 1189.0C1398.2 1207.8 1389.9 1225.7 1392.0 1240.0C1394.1 1254.3 1402.0 1265.0 1410.0 1275.0C1418.0 1285.0 1428.3 1290.8 1440.0 1300.0C1451.7 1309.2 1473.3 1325.0 1480.0 1330.0" fill="none" stroke="#7d7d75" stroke-width="1.4" stroke-linejoin="round" stroke-linecap="round"/>
<path d="M1440.0 922.5C1443.3 922.9 1453.3 922.1 1460.0 925.0C1466.7 927.9 1472.5 932.5 1480.0 940.0C1487.5 947.5 1499.2 957.5 1505.0 970.0C1510.8 982.5 1512.9 999.2 1515.0 1015.0C1517.1 1030.8 1517.5 1052.5 1517.5 1065.0C1517.5 1077.5 1515.4 1085.8 1515.0 1090.0" fill="none" stroke="#7d7d75" stroke-width="1.4" stroke-linejoin="round" stroke-linecap="round"/>
<path d="M1920.0 1131.0C1925.4 1128.8 1940.0 1123.5 1952.5 1117.5C1965.0 1111.5 1983.8 1103.8 1995.0 1095.0C2006.2 1086.2 2009.2 1074.6 2020.0 1065.0C2030.8 1055.4 2047.5 1046.7 2060.0 1037.5C2072.5 1028.3 2085.0 1019.6 2095.0 1010.0C2105.0 1000.4 2107.5 988.8 2120.0 980.0C2132.5 971.2 2153.3 964.6 2170.0 957.5C2186.7 950.4 2203.3 943.3 2220.0 937.5C2236.7 931.7 2257.5 927.1 2270.0 922.5C2282.5 917.9 2285.8 916.2 2295.0 910.0C2304.2 903.8 2320.8 893.3 2325.0 885.0C2329.2 876.7 2321.7 866.8 2320.0 860.0C2318.3 853.2 2315.8 846.7 2315.0 844.0" fill="none" stroke="#7d7d75" stroke-width="1.4" stroke-linejoin="round" stroke-linecap="round"/>
<path d="M1705.0 1300.0C1707.5 1295.7 1711.7 1282.5 1720.0 1274.0C1728.3 1265.5 1745.0 1254.0 1755.0 1249.0C1765.0 1244.0 1769.6 1244.4 1780.0 1244.0C1790.4 1243.6 1805.0 1244.4 1817.5 1246.5C1830.0 1248.6 1843.8 1254.0 1855.0 1256.5C1866.2 1259.0 1874.2 1261.5 1885.0 1261.5C1895.8 1261.5 1907.5 1258.1 1920.0 1256.5C1932.5 1254.9 1946.7 1253.1 1960.0 1252.0C1973.3 1250.9 1986.7 1252.0 2000.0 1250.0C2013.3 1248.0 2025.0 1244.7 2040.0 1240.0C2055.0 1235.3 2075.0 1226.7 2090.0 1222.0C2105.0 1217.3 2113.3 1215.7 2130.0 1212.0C2146.7 1208.3 2170.0 1202.8 2190.0 1200.0C2210.0 1197.2 2228.3 1197.5 2250.0 1195.0C2271.7 1192.5 2298.3 1189.5 2320.0 1185.0C2341.7 1180.5 2361.2 1174.0 2380.0 1168.0C2398.8 1162.0 2419.6 1155.9 2432.5 1149.0C2445.4 1142.1 2453.3 1130.2 2457.5 1126.5" fill="none" stroke="#7d7d75" stroke-width="1.4" stroke-linejoin="round" stroke-linecap="round"/>
<path d="M1705.0 1229.0C1709.2 1224.0 1721.7 1206.9 1730.0 1199.0C1738.3 1191.1 1744.6 1185.7 1755.0 1181.5C1765.4 1177.3 1780.0 1177.3 1792.5 1174.0C1805.0 1170.7 1819.6 1164.0 1830.0 1161.5C1840.4 1159.0 1846.7 1160.2 1855.0 1159.0C1863.3 1157.8 1869.2 1158.2 1880.0 1154.0C1890.8 1149.8 1913.3 1137.3 1920.0 1134.0" fill="none" stroke="#7d7d75" stroke-width="1.4" stroke-linejoin="round" stroke-linecap="round"/>
<path d="M1480.0 1330.0C1490.0 1333.7 1520.0 1346.7 1540.0 1352.0C1560.0 1357.3 1581.7 1363.2 1600.0 1362.0C1618.3 1360.8 1632.5 1355.3 1650.0 1345.0C1667.5 1334.7 1695.8 1307.5 1705.0 1300.0" fill="none" stroke="#7d7d75" stroke-width="1.4" stroke-linejoin="round" stroke-linecap="round"/>
<path d="M1439.5 844.0C1442.1 848.3 1450.6 863.0 1455.0 870.0C1459.4 877.0 1466.0 881.5 1466.0 886.0C1466.0 890.5 1459.0 892.7 1455.0 897.0C1451.0 901.3 1445.0 907.8 1442.0 912.0C1439.0 916.2 1436.2 917.8 1437.0 922.0C1437.8 926.2 1444.5 929.8 1447.0 937.0C1449.5 944.2 1450.3 954.2 1452.0 965.0C1453.7 975.8 1454.5 989.5 1457.0 1002.0C1459.5 1014.5 1464.5 1027.5 1467.0 1040.0C1469.5 1052.5 1470.3 1064.5 1472.0 1077.0C1473.7 1089.5 1474.5 1103.3 1477.0 1115.0C1479.5 1126.7 1484.0 1138.7 1487.0 1147.0C1490.0 1155.3 1493.7 1162.0 1495.0 1165.0" fill="none" stroke="#e8758e" stroke-width="2.6" stroke-linejoin="round" stroke-linecap="round"/>
<path d="M2137.5 980.0C2135.4 981.7 2130.0 987.5 2125.0 990.0C2120.0 992.5 2111.7 991.7 2107.5 995.0C2103.3 998.3 2104.2 1004.6 2100.0 1010.0C2095.8 1015.4 2089.2 1022.5 2082.5 1027.5C2075.8 1032.5 2066.2 1034.6 2060.0 1040.0C2053.8 1045.4 2050.4 1053.3 2045.0 1060.0C2039.6 1066.7 2034.2 1074.2 2027.5 1080.0C2020.8 1085.8 2012.1 1089.2 2005.0 1095.0C1997.9 1100.8 1990.4 1107.9 1985.0 1115.0C1979.6 1122.1 1974.6 1133.8 1972.5 1137.5" fill="none" stroke="#e8758e" stroke-width="2.6" stroke-linejoin="round" stroke-linecap="round"/>
<path d="M1920.0 1191.5C1924.2 1189.8 1936.0 1185.7 1945.0 1181.5C1954.0 1177.3 1969.0 1169.0 1973.8 1166.5" fill="none" stroke="#e8758e" stroke-width="2.6" stroke-linejoin="round" stroke-linecap="round"/>
<path d="M1700.0 1249.0C1705.0 1246.5 1718.8 1239.0 1730.0 1234.0C1741.2 1229.0 1755.0 1222.8 1767.5 1219.0C1780.0 1215.2 1794.6 1214.8 1805.0 1211.5C1815.4 1208.2 1821.7 1201.9 1830.0 1199.0C1838.3 1196.1 1846.7 1194.0 1855.0 1194.0C1863.3 1194.0 1869.2 1199.4 1880.0 1199.0C1890.8 1198.6 1913.3 1192.8 1920.0 1191.5" fill="none" stroke="#e8758e" stroke-width="2.6" stroke-linejoin="round" stroke-linecap="round"/>
<path d="M1375.0 1356.0C1378.2 1354.2 1388.9 1344.6 1394.0 1345.4C1399.1 1346.2 1401.7 1354.9 1405.6 1360.6C1409.5 1366.3 1412.6 1375.5 1417.3 1379.4C1422.0 1383.3 1428.2 1383.6 1433.7 1384.0C1439.2 1384.4 1445.3 1384.4 1450.0 1381.7C1454.7 1379.0 1458.5 1371.5 1462.0 1367.6C1465.5 1363.7 1467.9 1357.9 1471.0 1358.3C1474.1 1358.7 1475.1 1366.5 1480.6 1370.0C1486.1 1373.5 1496.2 1379.0 1504.0 1379.4C1511.8 1379.8 1519.7 1374.7 1527.5 1372.3C1535.3 1369.9 1543.2 1368.4 1551.0 1365.3C1558.8 1362.2 1566.6 1357.5 1574.4 1353.6C1582.2 1349.7 1590.0 1344.6 1597.8 1341.9C1605.6 1339.2 1613.4 1339.2 1621.2 1337.2C1629.0 1335.2 1636.9 1332.0 1644.7 1330.0C1652.5 1328.0 1660.2 1327.0 1668.0 1325.5C1675.8 1324.0 1685.2 1321.2 1691.5 1320.8C1697.8 1320.4 1701.7 1324.2 1705.6 1323.0C1709.5 1321.8 1711.5 1316.0 1715.0 1313.7C1718.5 1311.4 1722.8 1311.0 1726.7 1309.0C1730.6 1307.0 1734.1 1305.1 1738.4 1302.0C1742.7 1298.9 1746.6 1293.8 1752.5 1290.3C1758.4 1286.8 1766.2 1283.7 1773.6 1281.0C1781.0 1278.3 1789.2 1276.2 1797.0 1273.9C1804.8 1271.6 1812.6 1268.5 1820.4 1266.9C1828.2 1265.3 1836.1 1265.1 1843.9 1264.5C1851.7 1263.9 1859.5 1264.2 1867.3 1263.4C1875.1 1262.6 1882.9 1260.8 1890.7 1259.8C1898.5 1258.8 1906.8 1258.5 1914.2 1257.5C1921.6 1256.5 1927.8 1255.4 1935.0 1254.0C1942.2 1252.6 1949.6 1250.9 1957.5 1249.0C1965.4 1247.1 1972.1 1245.3 1982.5 1242.8C1992.9 1240.3 2007.5 1237.5 2020.0 1234.0C2032.5 1230.5 2045.0 1225.7 2057.5 1221.5C2070.0 1217.3 2084.6 1212.1 2095.0 1209.0C2105.4 1205.9 2111.7 1204.5 2120.0 1202.8C2128.3 1201.1 2137.5 1200.9 2145.0 1199.0C2152.5 1197.1 2159.6 1192.1 2165.0 1191.5C2170.4 1190.9 2171.7 1196.3 2177.5 1195.3C2183.3 1194.3 2192.9 1188.4 2200.0 1185.3C2207.1 1182.2 2214.2 1177.8 2220.0 1176.5C2225.8 1175.2 2230.4 1177.0 2235.0 1177.8C2239.6 1178.6 2241.7 1181.9 2247.5 1181.5C2253.3 1181.1 2262.1 1177.2 2270.0 1175.3C2277.9 1173.4 2286.7 1172.0 2295.0 1170.3C2303.3 1168.6 2311.7 1167.6 2320.0 1165.3C2328.3 1163.0 2337.5 1159.8 2345.0 1156.5C2352.5 1153.2 2358.8 1148.4 2365.0 1145.3C2371.2 1142.2 2377.9 1140.5 2382.5 1137.8C2387.1 1135.1 2387.1 1131.5 2392.5 1129.0C2397.9 1126.5 2407.9 1126.1 2415.0 1122.8C2422.1 1119.5 2428.3 1112.8 2435.0 1109.0C2441.7 1105.2 2447.5 1102.6 2455.0 1100.3C2462.5 1098.0 2475.8 1095.9 2480.0 1095.0" fill="none" stroke="#e8758e" stroke-width="2.6" stroke-linejoin="round" stroke-linecap="round"/>
<path d="M1783.0 1220.0C1784.2 1223.9 1787.7 1236.0 1790.0 1243.4C1792.3 1250.8 1795.8 1261.0 1797.0 1264.5" fill="none" stroke="#e8758e" stroke-width="2.6" stroke-linejoin="round" stroke-linecap="round"/>
<path d="M1902.4 1224.7C1903.6 1228.6 1907.5 1242.5 1909.5 1248.0C1911.5 1253.5 1913.4 1255.9 1914.2 1257.5" fill="none" stroke="#e8758e" stroke-width="2.6" stroke-linejoin="round" stroke-linecap="round"/>
<path d="M1525.0 1341.9C1525.4 1345.0 1526.3 1354.3 1527.5 1360.6C1528.7 1366.8 1530.1 1373.5 1532.0 1379.4C1533.9 1385.3 1537.8 1393.2 1539.0 1396.0" fill="none" stroke="#e8758e" stroke-width="2.6" stroke-linejoin="round" stroke-linecap="round"/>
<path d="M1617.7 1313.7C1618.1 1317.6 1619.0 1329.2 1620.0 1337.0C1621.0 1344.8 1622.4 1352.8 1623.6 1360.6C1624.8 1368.4 1626.4 1380.1 1627.0 1384.0" fill="none" stroke="#e8758e" stroke-width="2.6" stroke-linejoin="round" stroke-linecap="round"/>
<path d="M1565.0 1356.0 L1572.0 1384.0" fill="none" stroke="#e8758e" stroke-width="2.6" stroke-linejoin="round" stroke-linecap="round"/>
<path d="M1478.3 1356.0C1478.7 1358.7 1479.0 1366.8 1480.6 1372.3C1482.1 1377.8 1486.0 1384.8 1487.6 1388.7C1489.2 1392.7 1489.6 1394.8 1490.0 1396.0" fill="none" stroke="#e8758e" stroke-width="2.6" stroke-linejoin="round" stroke-linecap="round"/>
<path d="M1532.0 1379.4C1536.7 1380.3 1548.7 1385.7 1560.0 1385.0C1571.3 1384.3 1586.7 1378.8 1600.0 1375.0C1613.3 1371.2 1628.7 1367.8 1640.0 1362.0C1651.3 1356.2 1663.3 1343.7 1668.0 1340.0" fill="none" stroke="#e8758e" stroke-width="2.6" stroke-linejoin="round" stroke-linecap="round"/>
<path d="M1375.0 1356.0C1377.5 1360.0 1384.2 1373.3 1390.0 1380.0C1395.8 1386.7 1406.7 1393.3 1410.0 1396.0" fill="none" stroke="#e8758e" stroke-width="2.6" stroke-linejoin="round" stroke-linecap="round"/>
<path d="M2065 1240V1396" stroke="#b39ac0" stroke-width="1" stroke-dasharray="5 3" opacity=".7"/>
<path d="M1540 935L1545 880L1640 844" stroke="#b39ac0" stroke-width="1" stroke-dasharray="5 3" opacity=".6" fill="none"/>
<g filter="url(#halo)" fill="#4f4f4f">
<text x="648.0" y="975.0" font-size="14" textLength="42.7" lengthAdjust="spacingAndGlyphs">Paisley</text>
<text x="732.5" y="980.0" font-size="14" textLength="48.5" lengthAdjust="spacingAndGlyphs">Chesley</text>
<text x="867.0" y="1064.0" font-size="14" textLength="51.5" lengthAdjust="spacingAndGlyphs">Durham</text>
<text x="698.0" y="1093.5" font-size="14" textLength="64.0" lengthAdjust="spacingAndGlyphs">Walkerton</text>
<text x="1226.0" y="897.0" font-size="14" textLength="48.0" lengthAdjust="spacingAndGlyphs">Stayner</text>
<text x="1425.0" y="918.0" font-size="18" textLength="45.0" lengthAdjust="spacingAndGlyphs">Barrie</text>
<text x="1330.0" y="962.5" font-size="14" textLength="39.5" lengthAdjust="spacingAndGlyphs">Angus</text>
<text x="1497.0" y="969.0" font-size="14" textLength="42.0" lengthAdjust="spacingAndGlyphs">Innisfil</text>
<text x="1336.0" y="1079.0" font-size="14" textLength="46.5" lengthAdjust="spacingAndGlyphs">Alliston</text>
<text x="1379.0" y="1131.0" font-size="14" textLength="44.0" lengthAdjust="spacingAndGlyphs">Beeton</text>
<text x="1356.0" y="1169.0" font-size="14" textLength="69.0" lengthAdjust="spacingAndGlyphs">Tottenham</text>
<text x="1481.0" y="1106.0" font-size="14" textLength="55.0" lengthAdjust="spacingAndGlyphs">Bradford</text>
<text x="1404.0" y="1266.5" font-size="14" textLength="41.0" lengthAdjust="spacingAndGlyphs">Bolton</text>
<text x="1162.5" y="1131.5" font-size="14" textLength="64.5" lengthAdjust="spacingAndGlyphs">Shelburne</text>
<text x="892.0" y="1198.0" font-size="14" textLength="84.0" lengthAdjust="spacingAndGlyphs">Mount Forest</text>
<text x="838.0" y="1245.0" font-size="14" textLength="59.5" lengthAdjust="spacingAndGlyphs">Harriston</text>
<text x="841.5" y="1298.0" font-size="14" textLength="71.5" lengthAdjust="spacingAndGlyphs">Palmerston</text>
<text x="1011.0" y="1300.0" font-size="14" textLength="41.0" lengthAdjust="spacingAndGlyphs">Arthur</text>
<text x="1211.0" y="1240.0" font-size="14" textLength="72.0" lengthAdjust="spacingAndGlyphs">Orangeville</text>
<text x="801.0" y="1368.0" font-size="14" textLength="51.0" lengthAdjust="spacingAndGlyphs">Listowel</text>
<text x="1087.5" y="1385.0" font-size="14" textLength="43.0" lengthAdjust="spacingAndGlyphs">Fergus</text>
<text x="1248.0" y="1338.0" font-size="14" textLength="25.0" lengthAdjust="spacingAndGlyphs">Erin</text>
<text x="1697.5" y="1110.0" font-size="14" textLength="57.5" lengthAdjust="spacingAndGlyphs">Uxbridge</text>
<text x="1783.0" y="1111.5" font-size="14" textLength="63.0" lengthAdjust="spacingAndGlyphs">Port Perry</text>
<text x="1824.0" y="1256.0" font-size="18" textLength="60.0" lengthAdjust="spacingAndGlyphs">Oshawa</text>
<text x="1760.5" y="1289.0" font-size="17" textLength="32.0" lengthAdjust="spacingAndGlyphs">Ajax</text>
<text x="1900.0" y="1244.0" font-size="14" textLength="79.0" lengthAdjust="spacingAndGlyphs">Bowmanville</text>
<text x="2102.0" y="1218.0" font-size="14" textLength="63.0" lengthAdjust="spacingAndGlyphs">Port Hope</text>
<text x="2380.0" y="1156.0" font-size="14" textLength="55.0" lengthAdjust="spacingAndGlyphs">Brighton</text>
<text x="2441.0" y="1120.0" font-size="18" textLength="99.0" lengthAdjust="spacingAndGlyphs">Quinte West</text>
<text x="2334.5" y="974.0" font-size="14" textLength="86.3" lengthAdjust="spacingAndGlyphs">Campbellford</text>
<text x="2068.8" y="977.0" font-size="18" textLength="105.0" lengthAdjust="spacingAndGlyphs">Peterborough</text>
<text x="2116.0" y="895.0" font-size="14" textLength="56.5" lengthAdjust="spacingAndGlyphs">Lakefield</text>
<text x="1854.0" y="940.0" font-size="17" textLength="119.0" lengthAdjust="spacingAndGlyphs">Kawartha Lakes</text>
<text x="1372.5" y="1401.0" font-size="18" textLength="80.0" lengthAdjust="spacingAndGlyphs">Brampton</text>
<text x="1532.0" y="1019.0" font-size="14" textLength="43.0" lengthAdjust="spacingAndGlyphs">Keswick</text>
<text x="1640.0" y="1204.0" font-size="14" textLength="56.0" lengthAdjust="spacingAndGlyphs">Stouffville</text>
</g>
<g font-style="italic" fill="#6f9cc4"><text x="1574.500" y="912.500" font-size="17" textLength="86.500" lengthAdjust="spacingAndGlyphs">Lake Simcoe</text><text x="2351" y="1369" font-size="27" textLength="144" lengthAdjust="spacingAndGlyphs">Lake Ontario</text></g>
<defs><clipPath id="yp"><path d="M1402 1187 L1462 1169 L1480 1163 L1487 1151 L1500 1139 L1510 1131 L1517 1114 L1516 1099 L1524 1078 L1530 1056 L1545 1050 L1550 1032 L1553 1015 L1537 995 L1549 975 L1562 967 L1590 957 L1605 954 L1630 957 L1650 951 L1668 948 L1691 939 L1700 962 L1706 980 L1713 997 L1692 1010 L1670 1015 L1647 1022 L1632 1040 L1636 1060 L1642 1085 L1650 1110 L1662 1140 L1670 1162 L1685 1204 L1695 1249 L1706 1279 L1600 1313 L1472 1354 L1440 1270 L1420 1230Z"/></clipPath></defs>
<path d="M1158 871L1730 691M1161 883L1734 703M1165 896L1738 715M1169 908L1741 728M1173 920L1745 740M1177 933L1749 752M1181 945L1753 765M1185 957L1757 777M1189 970L1761 789M1192 982L1765 801M1196 994L1769 814M1200 1006L1772 826M1204 1019L1776 838M1208 1031L1780 851M1212 1043L1784 863M1216 1056L1788 875M1220 1068L1792 888M1223 1080L1796 900M1227 1093L1800 912M1231 1105L1803 924M1235 1117L1807 937M1239 1129L1811 949M1243 1142L1815 961M1247 1154L1819 974M1251 1166L1823 986M1254 1179L1827 998M1258 1191L1831 1011M1262 1203L1834 1023M1266 1216L1838 1035M1270 1228L1842 1047M1274 1240L1846 1060M1278 1253L1850 1072M1282 1265L1854 1084M1286 1277L1858 1097M1289 1289L1862 1109M1293 1302L1866 1121M1297 1314L1869 1134M1301 1326L1873 1146M1305 1339L1877 1158M1309 1351L1881 1171M1313 1363L1885 1183M1317 1376L1889 1195M1320 1388L1893 1207M1324 1400L1897 1220M1328 1412L1900 1232M1332 1425L1904 1244M1336 1437L1908 1257M1340 1449L1912 1269M1344 1462L1916 1281M1348 1474L1920 1294M1351 1486L1924 1306M1355 1499L1928 1318M1359 1511L1931 1330M1363 1523L1935 1343M1367 1535L1939 1355M1371 1548L1943 1367M1375 1560L1947 1380M1379 1572L1951 1392M1382 1585L1955 1404M1386 1597L1959 1417M1390 1609L1962 1429M1144 862L1385 1625M1157 858L1397 1621M1169 854L1410 1617M1181 850L1422 1613M1194 846L1434 1609M1206 842L1447 1605M1218 838L1459 1601M1231 834L1471 1597M1243 831L1483 1594M1255 827L1496 1590M1267 823L1508 1586M1280 819L1520 1582M1292 815L1533 1578M1304 811L1545 1574M1317 807L1557 1570M1329 803L1570 1566M1341 800L1582 1563M1354 796L1594 1559M1366 792L1606 1555M1378 788L1619 1551M1391 784L1631 1547M1403 780L1643 1543M1415 776L1656 1539M1427 772L1668 1535M1440 769L1680 1531M1452 765L1693 1528M1464 761L1705 1524M1477 757L1717 1520M1489 753L1729 1516M1501 749L1742 1512M1514 745L1754 1508M1526 741L1766 1504M1538 737L1779 1500M1550 734L1791 1497M1563 730L1803 1493M1575 726L1816 1489M1587 722L1828 1485M1600 718L1840 1481M1612 714L1853 1477M1624 710L1865 1473M1637 706L1877 1469M1649 703L1889 1466M1661 699L1902 1462M1673 695L1914 1458M1686 691L1926 1454M1698 687L1939 1450M1710 683L1951 1446M1723 679L1963 1442M1735 675L1976 1438" stroke="#141414" stroke-width="1.500" fill="none" clip-path="url(#yp)"/>
<path d="M1635 908.600L1650 916.500L1656.200 926L1663.400 935L1655.500 946.900M1638.700 936.500L1645.800 934.300" stroke="#141414" stroke-width="1.500" fill="none"/>
<g fill="#f7f610" stroke="#161606" stroke-width="1.900">
<circle cx="1510.0" cy="1156.6" r="4.200"/>
<circle cx="1652.9" cy="1229.5" r="4.200"/>
<circle cx="1461.4" cy="1181.2" r="4.200"/>
<circle cx="1694.8" cy="958.4" r="4.200"/>
<circle cx="1488.3" cy="1199.9" r="4.200"/>
<circle cx="1571.2" cy="970.0" r="4.200"/>
<circle cx="1628.6" cy="1005.7" r="4.200"/>
<circle cx="1553.9" cy="1210.1" r="4.200"/>
<circle cx="1521.3" cy="1236.6" r="4.200"/>
<circle cx="1606.7" cy="1128.3" r="4.200"/>
<circle cx="1596.6" cy="1030.3" r="4.200"/>
<circle cx="1612.4" cy="1266.4" r="4.200"/>
<circle cx="1444.4" cy="1282.0" r="4.200"/>
<circle cx="1549.8" cy="1116.7" r="4.200"/>
<circle cx="1656.8" cy="1231.7" r="4.200"/>
<circle cx="1529.3" cy="1200.4" r="4.200"/>
<circle cx="1658.7" cy="1212.9" r="4.200"/>
<circle cx="1701.0" cy="998.6" r="4.200"/>
<circle cx="1628.6" cy="1195.7" r="4.200"/>
<circle cx="1556.8" cy="1184.7" r="4.200"/>
<circle cx="1533.5" cy="1234.4" r="4.200"/>
<circle cx="1617.9" cy="1144.6" r="4.200"/>
<circle cx="1563.7" cy="1285.3" r="4.200"/>
<circle cx="1628.5" cy="1304.1" r="4.200"/>
<circle cx="1561.4" cy="1269.4" r="4.200"/>
<circle cx="1651.4" cy="1115.9" r="4.200"/>
<circle cx="1479.2" cy="1337.2" r="4.200"/>
<circle cx="1551.8" cy="1183.1" r="4.200"/>
<circle cx="1621.0" cy="1097.0" r="4.200"/>
<circle cx="1579.2" cy="1265.4" r="4.200"/>
<circle cx="1551.7" cy="1233.3" r="4.200"/>
<circle cx="1539.2" cy="1252.0" r="4.200"/>
<circle cx="1452.6" cy="1271.4" r="4.200"/>
<circle cx="1489.7" cy="1277.5" r="4.200"/>
<circle cx="1480.0" cy="1243.1" r="4.200"/>
<circle cx="1567.4" cy="1124.8" r="4.200"/>
<circle cx="1661.0" cy="1221.1" r="4.200"/>
<circle cx="1556.3" cy="1165.5" r="4.200"/>
<circle cx="1550.0" cy="1118.2" r="4.200"/>
<circle cx="1489.1" cy="1266.3" r="4.200"/>
<circle cx="1691.7" cy="1278.4" r="4.200"/>
<circle cx="1651.2" cy="1182.6" r="4.200"/>
<circle cx="1596.8" cy="1129.4" r="4.200"/>
<circle cx="1523.9" cy="1313.7" r="4.200"/>
<circle cx="1553.1" cy="1328.5" r="4.200"/>
<circle cx="1642.8" cy="1109.2" r="4.200"/>
<circle cx="1590.1" cy="957.5" r="4.200"/>
<circle cx="1596.7" cy="1221.1" r="4.200"/>
<circle cx="1653.4" cy="1013.1" r="4.200"/>
<circle cx="1543.4" cy="1260.8" r="4.200"/>
<circle cx="1504.1" cy="1317.1" r="4.200"/>
<circle cx="1589.2" cy="1032.6" r="4.200"/>
<circle cx="1549.1" cy="1180.5" r="4.200"/>
<circle cx="1590.5" cy="1308.1" r="4.200"/>
<circle cx="1469.9" cy="1287.4" r="4.200"/>
<circle cx="1496.4" cy="1243.5" r="4.200"/>
<circle cx="1483.0" cy="1350.1" r="4.200"/>
<circle cx="1547.2" cy="1116.6" r="4.200"/>
<circle cx="1685.3" cy="989.0" r="4.200"/>
<circle cx="1528.0" cy="1066.0" r="4.200"/>
<circle cx="1539.5" cy="1105.6" r="4.200"/>
<circle cx="1437.4" cy="1215.2" r="4.200"/>
<circle cx="1507.5" cy="1158.6" r="4.200"/>
<circle cx="1602.5" cy="1300.3" r="4.200"/>
<circle cx="1592.5" cy="1170.1" r="4.200"/>
<circle cx="1535.4" cy="1160.6" r="4.200"/>
<circle cx="1492.5" cy="1230.3" r="4.200"/>
<circle cx="1612.3" cy="1148.0" r="4.200"/>
<circle cx="1552.0" cy="1036.6" r="4.200"/>
<circle cx="1639.7" cy="1269.2" r="4.200"/>
<circle cx="1640.7" cy="1152.3" r="4.200"/>
<circle cx="1540.4" cy="1089.5" r="4.200"/>
<circle cx="1539.7" cy="1102.4" r="4.200"/>
<circle cx="1489.5" cy="1165.6" r="4.200"/>
<circle cx="1466.7" cy="1243.3" r="4.200"/>
<circle cx="1545.4" cy="1207.7" r="4.200"/>
<circle cx="1596.2" cy="1216.9" r="4.200"/>
<circle cx="1613.3" cy="1213.9" r="4.200"/>
<circle cx="1401.8" cy="1186.9" r="4.200"/>
<circle cx="1631.8" cy="1250.3" r="4.200"/>
<circle cx="1626.2" cy="1211.5" r="4.200"/>
<circle cx="1613.8" cy="1052.6" r="4.200"/>
<circle cx="1539.4" cy="995.4" r="4.200"/>
<circle cx="1597.9" cy="1286.3" r="4.200"/>
<circle cx="1649.7" cy="1176.0" r="4.200"/>
<circle cx="1481.6" cy="1290.1" r="4.200"/>
<circle cx="1464.0" cy="1299.3" r="4.200"/>
<circle cx="1611.8" cy="1058.2" r="4.200"/>
<circle cx="1474.6" cy="1223.8" r="4.200"/>
<circle cx="1652.2" cy="1275.6" r="4.200"/>
<circle cx="1516.2" cy="1106.3" r="4.200"/>
<circle cx="1488.8" cy="1204.9" r="4.200"/>
<circle cx="1578.3" cy="1251.9" r="4.200"/>
<circle cx="1550.9" cy="1165.1" r="4.200"/>
<circle cx="1531.9" cy="1169.5" r="4.200"/>
<circle cx="1612.8" cy="1297.8" r="4.200"/>
<circle cx="1629.7" cy="986.0" r="4.200"/>
<circle cx="1664.0" cy="1292.1" r="4.200"/>
<circle cx="1562.5" cy="1322.0" r="4.200"/>
<circle cx="1593.6" cy="1294.5" r="4.200"/>
<circle cx="1655.8" cy="950.7" r="4.200"/>
<circle cx="1644.1" cy="1240.1" r="4.200"/>
<circle cx="1512.1" cy="1284.8" r="4.200"/>
<circle cx="1504.6" cy="1232.0" r="4.200"/>
<circle cx="1530.6" cy="1334.1" r="4.200"/>
<circle cx="1486.4" cy="1152.6" r="4.200"/>
<circle cx="1592.8" cy="1125.1" r="4.200"/>
<circle cx="1462.9" cy="1276.3" r="4.200"/>
<circle cx="1612.2" cy="969.0" r="4.200"/>
<circle cx="1617.0" cy="1244.0" r="4.200"/>
<circle cx="1515.7" cy="1313.7" r="4.200"/>
<circle cx="1492.5" cy="1210.5" r="4.200"/>
<circle cx="1564.3" cy="1232.7" r="4.200"/>
<circle cx="1655.6" cy="985.0" r="4.200"/>
<circle cx="1427.1" cy="1199.1" r="4.200"/>
<circle cx="1502.2" cy="1302.3" r="4.200"/>
<circle cx="1558.4" cy="1081.8" r="4.200"/>
<circle cx="1543.5" cy="1154.6" r="4.200"/>
<circle cx="1443.6" cy="1213.2" r="4.200"/>
<circle cx="1559.2" cy="1314.2" r="4.200"/>
<circle cx="1547.8" cy="1158.2" r="4.200"/>
<circle cx="1477.5" cy="1337.9" r="4.200"/>
<circle cx="1447.5" cy="1199.0" r="4.200"/>
<circle cx="1511.8" cy="1254.3" r="4.200"/>
<circle cx="1514.6" cy="1286.3" r="4.200"/>
<circle cx="1574.2" cy="1198.8" r="4.200"/>
<circle cx="1631.3" cy="1160.5" r="4.200"/>
<circle cx="1605.8" cy="974.6" r="4.200"/>
<circle cx="1527.2" cy="1215.6" r="4.200"/>
<circle cx="1636.0" cy="1289.2" r="4.200"/>
<circle cx="1594.9" cy="1170.1" r="4.200"/>
<circle cx="1590.8" cy="1206.5" r="4.200"/>
<circle cx="1560.5" cy="1198.2" r="4.200"/>
<circle cx="1649.5" cy="1231.5" r="4.200"/>
<circle cx="1564.9" cy="1114.8" r="4.200"/>
<circle cx="1627.3" cy="1231.4" r="4.200"/>
<circle cx="1502.1" cy="1224.5" r="4.200"/>
<circle cx="1676.8" cy="1210.6" r="4.200"/>
<circle cx="1545.9" cy="1153.6" r="4.200"/>
<circle cx="1597.8" cy="1135.6" r="4.200"/>
<circle cx="1645.8" cy="934.3" r="4.200"/>
<circle cx="1659.2" cy="970.9" r="4.200"/>
<circle cx="1605.0" cy="1014.4" r="4.200"/>
<circle cx="1498.6" cy="1242.4" r="4.200"/>
<circle cx="1470.0" cy="1205.1" r="4.200"/>
<circle cx="1522.5" cy="1282.1" r="4.200"/>
<circle cx="1536.2" cy="1164.3" r="4.200"/>
<circle cx="1493.7" cy="1334.2" r="4.200"/>
<circle cx="1518.2" cy="1159.9" r="4.200"/>
<circle cx="1622.3" cy="1107.2" r="4.200"/>
<circle cx="1594.5" cy="1297.3" r="4.200"/>
<circle cx="1696.8" cy="1275.4" r="4.200"/>
<circle cx="1500.6" cy="1289.6" r="4.200"/>
<circle cx="1676.3" cy="1180.4" r="4.200"/>
<circle cx="1613.8" cy="1266.9" r="4.200"/>
<circle cx="1529.5" cy="1291.6" r="4.200"/>
<circle cx="1639.9" cy="1017.9" r="4.200"/>
<circle cx="1581.7" cy="1195.1" r="4.200"/>
<circle cx="1666.6" cy="1153.8" r="4.200"/>
<circle cx="1448.6" cy="1293.7" r="4.200"/>
<circle cx="1582.7" cy="1224.0" r="4.200"/>
<circle cx="1530.6" cy="1239.0" r="4.200"/>
<circle cx="1537.6" cy="1292.5" r="4.200"/>
<circle cx="1606.7" cy="1231.4" r="4.200"/>
<circle cx="1439.9" cy="1242.1" r="4.200"/>
<circle cx="1552.0" cy="1147.0" r="4.200"/>
<circle cx="1706.2" cy="1279.8" r="4.200"/>
<circle cx="1608.1" cy="1255.7" r="4.200"/>
<circle cx="1492.6" cy="1183.0" r="4.200"/>
<circle cx="1549.1" cy="1031.8" r="4.200"/>
<circle cx="1538.4" cy="1318.8" r="4.200"/>
<circle cx="1451.4" cy="1258.5" r="4.200"/>
<circle cx="1527.5" cy="1173.0" r="4.200"/>
<circle cx="1656.6" cy="1127.7" r="4.200"/>
<circle cx="1642.5" cy="1003.1" r="4.200"/>
<circle cx="1573.4" cy="1131.5" r="4.200"/>
<circle cx="1635.5" cy="930.4" r="4.200"/>
<circle cx="1478.9" cy="1296.4" r="4.200"/>
<circle cx="1557.4" cy="1231.6" r="4.200"/>
<circle cx="1414.2" cy="1183.9" r="4.200"/>
<circle cx="1622.1" cy="1147.6" r="4.200"/>
<circle cx="1576.3" cy="1266.1" r="4.200"/>
<circle cx="1687.8" cy="1277.9" r="4.200"/>
<circle cx="1484.7" cy="1252.6" r="4.200"/>
<circle cx="1546.2" cy="1308.2" r="4.200"/>
<circle cx="1571.0" cy="1093.1" r="4.200"/>
<circle cx="1512.7" cy="1262.9" r="4.200"/>
<circle cx="1638.7" cy="1162.8" r="4.200"/>
<circle cx="1691.5" cy="1010.9" r="4.200"/>
<circle cx="1686.0" cy="940.3" r="4.200"/>
<circle cx="1460.3" cy="1262.9" r="4.200"/>
<circle cx="1589.7" cy="1289.7" r="4.200"/>
<circle cx="1635.0" cy="1174.5" r="4.200"/>
<circle cx="1516.7" cy="1100.8" r="4.200"/>
<circle cx="1555.6" cy="1091.1" r="4.200"/>
<circle cx="1661.6" cy="1252.6" r="4.200"/>
<circle cx="1519.4" cy="1196.8" r="4.200"/>
<circle cx="1592.5" cy="1293.7" r="4.200"/>
<circle cx="1540.0" cy="1197.2" r="4.200"/>
<circle cx="1671.7" cy="1261.1" r="4.200"/>
<circle cx="1507.9" cy="1200.3" r="4.200"/>
<circle cx="1626.3" cy="1143.0" r="4.200"/>
<circle cx="1658.3" cy="1175.0" r="4.200"/>
<circle cx="1691.3" cy="1236.9" r="4.200"/>
<circle cx="1533.6" cy="1284.8" r="4.200"/>
<circle cx="1666.0" cy="988.9" r="4.200"/>
<circle cx="1604.9" cy="1270.4" r="4.200"/>
<circle cx="1618.6" cy="1166.5" r="4.200"/>
<circle cx="1696.6" cy="1006.4" r="4.200"/>
<circle cx="1628.9" cy="1107.6" r="4.200"/>
<circle cx="1485.3" cy="1243.3" r="4.200"/>
<circle cx="1598.8" cy="1274.4" r="4.200"/>
<circle cx="1490.4" cy="1237.4" r="4.200"/>
<circle cx="1610.0" cy="1094.9" r="4.200"/>
<circle cx="1506.7" cy="1282.5" r="4.200"/>
<circle cx="1658.6" cy="1293.8" r="4.200"/>
<circle cx="1646.1" cy="1123.6" r="4.200"/>
<circle cx="1632.0" cy="924.5" r="4.200"/>
<circle cx="1447.0" cy="1259.2" r="4.200"/>
<circle cx="1461.1" cy="1323.6" r="4.200"/>
<circle cx="1697.5" cy="1275.0" r="4.200"/>
<circle cx="1498.9" cy="1210.8" r="4.200"/>
<circle cx="1427.5" cy="1236.9" r="4.200"/>
<circle cx="1630.8" cy="921.5" r="4.200"/>
<circle cx="1510.9" cy="1131.8" r="4.200"/>
<circle cx="1533.1" cy="1212.2" r="4.200"/>
<circle cx="1498.9" cy="1148.1" r="4.200"/>
<circle cx="1502.3" cy="1293.3" r="4.200"/>
<circle cx="1475.4" cy="1245.4" r="4.200"/>
<circle cx="1551.5" cy="1216.0" r="4.200"/>
<circle cx="1498.0" cy="1159.4" r="4.200"/>
<circle cx="1549.2" cy="1161.4" r="4.200"/>
<circle cx="1694.2" cy="1282.3" r="4.200"/>
<circle cx="1516.9" cy="1143.6" r="4.200"/>
<circle cx="1559.7" cy="1257.5" r="4.200"/>
<circle cx="1498.9" cy="1333.0" r="4.200"/>
<circle cx="1625.2" cy="1102.4" r="4.200"/>
<circle cx="1562.6" cy="1067.2" r="4.200"/>
<circle cx="1503.5" cy="1167.4" r="4.200"/>
<circle cx="1501.8" cy="1289.4" r="4.200"/>
<circle cx="1538.7" cy="1275.1" r="4.200"/>
<circle cx="1532.0" cy="1042.0" r="4.200"/>
<circle cx="1526.7" cy="1217.8" r="4.200"/>
<circle cx="1631.3" cy="1202.6" r="4.200"/>
<circle cx="1485.9" cy="1212.9" r="4.200"/>
<circle cx="1545.4" cy="1112.4" r="4.200"/>
<circle cx="1657.4" cy="1270.8" r="4.200"/>
<circle cx="1606.2" cy="998.9" r="4.200"/>
<circle cx="1588.9" cy="1113.7" r="4.200"/>
<circle cx="1587.5" cy="1277.7" r="4.200"/>
<circle cx="1505.0" cy="1273.0" r="4.200"/>
<circle cx="1634.3" cy="1256.3" r="4.200"/>
<circle cx="1498.7" cy="1337.6" r="4.200"/>
<circle cx="1556.2" cy="1123.5" r="4.200"/>
<circle cx="1617.6" cy="1307.3" r="4.200"/>
<circle cx="1691.8" cy="1263.2" r="4.200"/>
<circle cx="1423.4" cy="1235.6" r="4.200"/>
<circle cx="1565.1" cy="1128.7" r="4.200"/>
<circle cx="1521.9" cy="1295.7" r="4.200"/>
<circle cx="1494.2" cy="1266.3" r="4.200"/>
<circle cx="1565.3" cy="1269.5" r="4.200"/>
<circle cx="1600.6" cy="1279.6" r="4.200"/>
<circle cx="1602.0" cy="1070.3" r="4.200"/>
<circle cx="1583.3" cy="1228.4" r="4.200"/>
<circle cx="1444.6" cy="1225.3" r="4.200"/>
<circle cx="1677.2" cy="1222.4" r="4.200"/>
<circle cx="1614.8" cy="1218.2" r="4.200"/>
<circle cx="1588.0" cy="978.2" r="4.200"/>
<circle cx="1578.3" cy="1103.6" r="4.200"/>
<circle cx="1663.4" cy="1220.1" r="4.200"/>
<circle cx="1676.7" cy="1212.3" r="4.200"/>
<circle cx="1570.0" cy="1268.9" r="4.200"/>
<circle cx="1579.9" cy="1249.2" r="4.200"/>
<circle cx="1466.8" cy="1316.1" r="4.200"/>
<circle cx="1488.3" cy="1212.6" r="4.200"/>
<circle cx="1418.3" cy="1217.9" r="4.200"/>
<circle cx="1521.6" cy="1311.9" r="4.200"/>
<circle cx="1698.1" cy="1254.1" r="4.200"/>
<circle cx="1639.8" cy="974.7" r="4.200"/>
<circle cx="1510.7" cy="1341.2" r="4.200"/>
<circle cx="1548.0" cy="975.3" r="4.200"/>
<circle cx="1432.6" cy="1217.9" r="4.200"/>
<circle cx="1543.4" cy="1091.6" r="4.200"/>
<circle cx="1695.3" cy="997.5" r="4.200"/>
<circle cx="1535.0" cy="1052.0" r="4.200"/>
<circle cx="1470.4" cy="1329.6" r="4.200"/>
<circle cx="1539.9" cy="1217.5" r="4.200"/>
<circle cx="1611.1" cy="1149.3" r="4.200"/>
<circle cx="1499.2" cy="1138.3" r="4.200"/>
<circle cx="1534.6" cy="1284.9" r="4.200"/>
<circle cx="1672.3" cy="1249.8" r="4.200"/>
<circle cx="1576.2" cy="1320.6" r="4.200"/>
<circle cx="1637.5" cy="1290.9" r="4.200"/>
<circle cx="1600.7" cy="1232.1" r="4.200"/>
<circle cx="1517.4" cy="1219.3" r="4.200"/>
<circle cx="1678.8" cy="943.1" r="4.200"/>
<circle cx="1689.2" cy="1285.3" r="4.200"/>
<circle cx="1597.8" cy="1030.7" r="4.200"/>
<circle cx="1578.1" cy="1312.9" r="4.200"/>
<circle cx="1542.0" cy="1053.0" r="4.200"/>
<circle cx="1628.0" cy="1223.8" r="4.200"/>
<circle cx="1692.2" cy="1257.1" r="4.200"/>
<circle cx="1667.3" cy="947.1" r="4.200"/>
<circle cx="1611.0" cy="1012.7" r="4.200"/>
<circle cx="1599.0" cy="1145.5" r="4.200"/>
<circle cx="1618.7" cy="1302.0" r="4.200"/>
<circle cx="1619.5" cy="1241.2" r="4.200"/>
<circle cx="1528.5" cy="1241.5" r="4.200"/>
<circle cx="1510.0" cy="1330.7" r="4.200"/>
<circle cx="1650.1" cy="1229.9" r="4.200"/>
<circle cx="1486.0" cy="1158.3" r="4.200"/>
<circle cx="1564.2" cy="1236.4" r="4.200"/>
<circle cx="1583.4" cy="959.6" r="4.200"/>
<circle cx="1504.9" cy="1143.9" r="4.200"/>
<circle cx="1629.0" cy="1168.5" r="4.200"/>
<circle cx="1639.0" cy="1218.2" r="4.200"/>
<circle cx="1551.3" cy="1254.9" r="4.200"/>
<circle cx="1642.0" cy="1280.8" r="4.200"/>
<circle cx="1534.7" cy="1240.2" r="4.200"/>
<circle cx="1599.6" cy="1015.0" r="4.200"/>
<circle cx="1533.4" cy="1254.8" r="4.200"/>
<circle cx="1491.7" cy="1245.1" r="4.200"/>
<circle cx="1575.6" cy="1285.8" r="4.200"/>
<circle cx="1662.1" cy="1282.0" r="4.200"/>
<circle cx="1581.8" cy="1136.0" r="4.200"/>
<circle cx="1547.6" cy="1329.5" r="4.200"/>
<circle cx="1577.2" cy="1157.5" r="4.200"/>
<circle cx="1642.2" cy="1193.4" r="4.200"/>
<circle cx="1624.1" cy="1138.0" r="4.200"/>
<circle cx="1584.9" cy="1270.4" r="4.200"/>
<circle cx="1631.7" cy="1165.1" r="4.200"/>
<circle cx="1662.4" cy="1178.4" r="4.200"/>
<circle cx="1554.7" cy="1030.1" r="4.200"/>
<circle cx="1548.8" cy="1154.8" r="4.200"/>
<circle cx="1432.1" cy="1178.7" r="4.200"/>
<circle cx="1468.8" cy="1316.7" r="4.200"/>
<circle cx="1453.7" cy="1290.5" r="4.200"/>
<circle cx="1633.2" cy="1126.3" r="4.200"/>
<circle cx="1486.2" cy="1219.9" r="4.200"/>
<circle cx="1636.3" cy="1099.9" r="4.200"/>
<circle cx="1488.6" cy="1218.4" r="4.200"/>
<circle cx="1542.7" cy="1331.4" r="4.200"/>
<circle cx="1527.7" cy="1240.8" r="4.200"/>
<circle cx="1494.7" cy="1150.4" r="4.200"/>
<circle cx="1555.0" cy="971.4" r="4.200"/>
<circle cx="1453.8" cy="1223.4" r="4.200"/>
<circle cx="1424.3" cy="1193.8" r="4.200"/>
<circle cx="1546.0" cy="1280.2" r="4.200"/>
<circle cx="1474.6" cy="1260.2" r="4.200"/>
<circle cx="1565.6" cy="1133.0" r="4.200"/>
<circle cx="1702.4" cy="1002.7" r="4.200"/>
<circle cx="1573.5" cy="1239.7" r="4.200"/>
<circle cx="1608.9" cy="1176.4" r="4.200"/>
<circle cx="1658.8" cy="1185.4" r="4.200"/>
<circle cx="1645.9" cy="1230.1" r="4.200"/>
<circle cx="1463.6" cy="1187.0" r="4.200"/>
<circle cx="1674.0" cy="1206.9" r="4.200"/>
<circle cx="1575.3" cy="962.7" r="4.200"/>
<circle cx="1549.4" cy="1262.4" r="4.200"/>
<circle cx="1545.5" cy="1314.4" r="4.200"/>
<circle cx="1572.5" cy="1314.7" r="4.200"/>
<circle cx="1603.3" cy="1276.5" r="4.200"/>
<circle cx="1675.6" cy="1236.1" r="4.200"/>
<circle cx="1685.5" cy="1246.2" r="4.200"/>
<circle cx="1602.4" cy="1258.3" r="4.200"/>
<circle cx="1549.1" cy="1236.2" r="4.200"/>
<circle cx="1566.3" cy="1297.9" r="4.200"/>
<circle cx="1555.7" cy="1152.5" r="4.200"/>
<circle cx="1688.0" cy="1001.4" r="4.200"/>
<circle cx="1421.1" cy="1186.1" r="4.200"/>
<circle cx="1501.4" cy="1331.5" r="4.200"/>
<circle cx="1517.6" cy="1190.7" r="4.200"/>
<circle cx="1576.5" cy="1159.1" r="4.200"/>
<circle cx="1503.7" cy="1182.9" r="4.200"/>
<circle cx="1513.5" cy="1151.8" r="4.200"/>
<circle cx="1659.7" cy="1165.8" r="4.200"/>
<circle cx="1491.3" cy="1192.7" r="4.200"/>
<circle cx="1631.4" cy="1278.8" r="4.200"/>
<circle cx="1540.0" cy="1318.7" r="4.200"/>
<circle cx="1582.5" cy="1007.1" r="4.200"/>
<circle cx="1602.8" cy="1136.5" r="4.200"/>
<circle cx="1479.9" cy="1345.5" r="4.200"/>
<circle cx="1547.0" cy="1004.1" r="4.200"/>
<circle cx="1616.0" cy="1266.6" r="4.200"/>
<circle cx="1516.9" cy="1338.7" r="4.200"/>
<circle cx="1691.1" cy="1279.3" r="4.200"/>
<circle cx="1471.6" cy="1320.6" r="4.200"/>
<circle cx="1663.0" cy="1218.2" r="4.200"/>
<circle cx="1616.9" cy="1240.5" r="4.200"/>
<circle cx="1597.3" cy="1267.0" r="4.200"/>
<circle cx="1661.6" cy="1209.7" r="4.200"/>
<circle cx="1670.4" cy="1202.7" r="4.200"/>
<circle cx="1644.1" cy="1244.9" r="4.200"/>
<circle cx="1644.6" cy="1195.7" r="4.200"/>
<circle cx="1624.0" cy="1203.4" r="4.200"/>
<circle cx="1589.4" cy="1309.9" r="4.200"/>
<circle cx="1501.0" cy="1246.4" r="4.200"/>
<circle cx="1663.1" cy="1282.7" r="4.200"/>
<circle cx="1639.7" cy="1274.4" r="4.200"/>
<circle cx="1593.3" cy="1205.2" r="4.200"/>
<circle cx="1555.9" cy="1286.7" r="4.200"/>
<circle cx="1533.8" cy="1284.7" r="4.200"/>
<circle cx="1420.5" cy="1185.6" r="4.200"/>
<circle cx="1574.2" cy="1023.4" r="4.200"/>
<circle cx="1630.5" cy="1283.1" r="4.200"/>
<circle cx="1590.1" cy="1251.2" r="4.200"/>
<circle cx="1564.5" cy="1175.4" r="4.200"/>
<circle cx="1569.1" cy="1159.2" r="4.200"/>
<circle cx="1564.1" cy="1249.1" r="4.200"/>
<circle cx="1688.0" cy="1252.5" r="4.200"/>
<circle cx="1572.9" cy="1238.1" r="4.200"/>
<circle cx="1438.9" cy="1176.7" r="4.200"/>
<circle cx="1602.4" cy="1172.6" r="4.200"/>
<circle cx="1600.4" cy="1259.1" r="4.200"/>
<circle cx="1551.6" cy="1203.8" r="4.200"/>
<circle cx="1494.7" cy="1224.4" r="4.200"/>
<circle cx="1663.4" cy="935.0" r="4.200"/>
<circle cx="1514.8" cy="1306.1" r="4.200"/>
<circle cx="1498.7" cy="1320.4" r="4.200"/>
<circle cx="1602.2" cy="1289.6" r="4.200"/>
<circle cx="1636.0" cy="1240.3" r="4.200"/>
<circle cx="1566.6" cy="1272.3" r="4.200"/>
<circle cx="1639.6" cy="1072.4" r="4.200"/>
<circle cx="1516.4" cy="1164.9" r="4.200"/>
<circle cx="1553.3" cy="1125.5" r="4.200"/>
<circle cx="1515.6" cy="1266.1" r="4.200"/>
<circle cx="1665.0" cy="967.1" r="4.200"/>
<circle cx="1545.0" cy="1240.5" r="4.200"/>
<circle cx="1538.9" cy="1242.1" r="4.200"/>
<circle cx="1489.8" cy="1158.2" r="4.200"/>
<circle cx="1470.2" cy="1211.6" r="4.200"/>
<circle cx="1528.9" cy="1160.3" r="4.200"/>
<circle cx="1693.1" cy="1267.4" r="4.200"/>
<circle cx="1552.3" cy="1023.6" r="4.200"/>
<circle cx="1458.8" cy="1195.0" r="4.200"/>
<circle cx="1612.2" cy="1228.5" r="4.200"/>
<circle cx="1462.3" cy="1249.2" r="4.200"/>
<circle cx="1599.1" cy="1243.0" r="4.200"/>
<circle cx="1543.6" cy="1095.8" r="4.200"/>
<circle cx="1568.4" cy="964.2" r="4.200"/>
<circle cx="1521.8" cy="1085.6" r="4.200"/>
<circle cx="1616.3" cy="1203.1" r="4.200"/>
<circle cx="1640.8" cy="1079.5" r="4.200"/>
<circle cx="1636.0" cy="1031.8" r="4.200"/>
<circle cx="1564.4" cy="1124.7" r="4.200"/>
<circle cx="1520.3" cy="1219.9" r="4.200"/>
<circle cx="1552.2" cy="1320.8" r="4.200"/>
<circle cx="1620.7" cy="1191.6" r="4.200"/>
<circle cx="1542.5" cy="1175.6" r="4.200"/>
<circle cx="1682.0" cy="1207.9" r="4.200"/>
<circle cx="1585.2" cy="1155.9" r="4.200"/>
<circle cx="1647.5" cy="999.4" r="4.200"/>
<circle cx="1480.5" cy="1332.0" r="4.200"/>
<circle cx="1618.0" cy="1134.6" r="4.200"/>
<circle cx="1542.5" cy="1332.6" r="4.200"/>
<circle cx="1443.7" cy="1214.4" r="4.200"/>
<circle cx="1486.8" cy="1220.0" r="4.200"/>
<circle cx="1497.3" cy="1318.8" r="4.200"/>
<circle cx="1626.9" cy="983.7" r="4.200"/>
<circle cx="1493.7" cy="1347.4" r="4.200"/>
<circle cx="1525.5" cy="1338.5" r="4.200"/>
<circle cx="1540.7" cy="1199.0" r="4.200"/>
<circle cx="1468.4" cy="1287.1" r="4.200"/>
<circle cx="1578.2" cy="1116.7" r="4.200"/>
<circle cx="1481.2" cy="1330.2" r="4.200"/>
<circle cx="1539.4" cy="1256.9" r="4.200"/>
<circle cx="1639.6" cy="1206.7" r="4.200"/>
<circle cx="1557.6" cy="1316.6" r="4.200"/>
<circle cx="1535.0" cy="1197.4" r="4.200"/>
<circle cx="1663.0" cy="1250.2" r="4.200"/>
<circle cx="1540.6" cy="1317.3" r="4.200"/>
<circle cx="1620.2" cy="1280.1" r="4.200"/>
<circle cx="1663.3" cy="1280.7" r="4.200"/>
<circle cx="1613.3" cy="1134.2" r="4.200"/>
<circle cx="1653.4" cy="1166.5" r="4.200"/>
<circle cx="1563.8" cy="1226.4" r="4.200"/>
<circle cx="1598.1" cy="1268.3" r="4.200"/>
<circle cx="1592.3" cy="1234.6" r="4.200"/>
<circle cx="1442.0" cy="1202.2" r="4.200"/>
<circle cx="1643.4" cy="1158.3" r="4.200"/>
<circle cx="1429.8" cy="1203.6" r="4.200"/>
<circle cx="1533.9" cy="1132.7" r="4.200"/>
<circle cx="1658.3" cy="1251.6" r="4.200"/>
<circle cx="1620.4" cy="995.7" r="4.200"/>
<circle cx="1627.7" cy="1237.0" r="4.200"/>
<circle cx="1536.4" cy="1265.2" r="4.200"/>
<circle cx="1554.2" cy="1300.4" r="4.200"/>
<circle cx="1457.2" cy="1249.1" r="4.200"/>
<circle cx="1534.7" cy="1165.1" r="4.200"/>
<circle cx="1498.7" cy="1277.2" r="4.200"/>
<circle cx="1496.0" cy="1318.1" r="4.200"/>
<circle cx="1472.8" cy="1317.7" r="4.200"/>
<circle cx="1468.8" cy="1325.8" r="4.200"/>
<circle cx="1571.4" cy="1226.5" r="4.200"/>
<circle cx="1484.2" cy="1237.3" r="4.200"/>
<circle cx="1484.2" cy="1315.0" r="4.200"/>
<circle cx="1625.2" cy="1116.2" r="4.200"/>
<circle cx="1571.0" cy="1011.5" r="4.200"/>
<circle cx="1463.6" cy="1306.2" r="4.200"/>
<circle cx="1472.8" cy="1342.5" r="4.200"/>
<circle cx="1591.1" cy="1288.7" r="4.200"/>
<circle cx="1606.3" cy="1120.9" r="4.200"/>
<circle cx="1523.9" cy="1159.2" r="4.200"/>
<circle cx="1531.8" cy="1144.5" r="4.200"/>
<circle cx="1713.5" cy="997.1" r="4.200"/>
<circle cx="1442.5" cy="1249.4" r="4.200"/>
<circle cx="1622.4" cy="1150.3" r="4.200"/>
<circle cx="1681.6" cy="1286.9" r="4.200"/>
<circle cx="1620.7" cy="1113.5" r="4.200"/>
<circle cx="1542.8" cy="1112.1" r="4.200"/>
<circle cx="1486.3" cy="1219.7" r="4.200"/>
<circle cx="1451.1" cy="1270.6" r="4.200"/>
<circle cx="1539.7" cy="1299.8" r="4.200"/>
<circle cx="1444.9" cy="1271.1" r="4.200"/>
<circle cx="1652.2" cy="1141.1" r="4.200"/>
<circle cx="1559.3" cy="1143.0" r="4.200"/>
<circle cx="1444.2" cy="1175.3" r="4.200"/>
<circle cx="1495.9" cy="1293.0" r="4.200"/>
<circle cx="1641.0" cy="1260.0" r="4.200"/>
<circle cx="1591.1" cy="1139.9" r="4.200"/>
<circle cx="1587.6" cy="1236.4" r="4.200"/>
<circle cx="1588.9" cy="1181.8" r="4.200"/>
<circle cx="1611.5" cy="1053.9" r="4.200"/>
<circle cx="1559.0" cy="1120.6" r="4.200"/>
<circle cx="1466.8" cy="1262.7" r="4.200"/>
<circle cx="1648.1" cy="1214.0" r="4.200"/>
<circle cx="1624.9" cy="968.4" r="4.200"/>
<circle cx="1579.4" cy="1211.8" r="4.200"/>
<circle cx="1615.0" cy="1105.5" r="4.200"/>
<circle cx="1655.0" cy="1273.1" r="4.200"/>
<circle cx="1671.4" cy="1234.0" r="4.200"/>
<circle cx="1636.6" cy="1147.4" r="4.200"/>
<circle cx="1605.6" cy="1291.4" r="4.200"/>
<circle cx="1481.2" cy="1284.3" r="4.200"/>
<circle cx="1514.2" cy="1157.2" r="4.200"/>
<circle cx="1491.5" cy="1211.2" r="4.200"/>
<circle cx="1657.7" cy="1140.6" r="4.200"/>
<circle cx="1678.5" cy="1186.0" r="4.200"/>
<circle cx="1547.5" cy="1241.6" r="4.200"/>
<circle cx="1466.9" cy="1342.0" r="4.200"/>
<circle cx="1562.3" cy="1310.7" r="4.200"/>
<circle cx="1469.4" cy="1279.3" r="4.200"/>
<circle cx="1674.0" cy="1214.8" r="4.200"/>
<circle cx="1564.6" cy="1032.6" r="4.200"/>
<circle cx="1557.9" cy="1210.2" r="4.200"/>
<circle cx="1611.2" cy="1270.4" r="4.200"/>
<circle cx="1660.2" cy="1203.3" r="4.200"/>
<circle cx="1630.6" cy="1033.1" r="4.200"/>
<circle cx="1569.7" cy="1138.7" r="4.200"/>
<circle cx="1622.6" cy="969.8" r="4.200"/>
<circle cx="1512.8" cy="1171.6" r="4.200"/>
<circle cx="1518.3" cy="1294.8" r="4.200"/>
<circle cx="1621.7" cy="1108.9" r="4.200"/>
<circle cx="1663.8" cy="1187.4" r="4.200"/>
<circle cx="1512.7" cy="1266.9" r="4.200"/>
<circle cx="1510.0" cy="1334.0" r="4.200"/>
<circle cx="1557.9" cy="1244.9" r="4.200"/>
<circle cx="1448.1" cy="1198.0" r="4.200"/>
<circle cx="1465.9" cy="1299.1" r="4.200"/>
<circle cx="1661.1" cy="1217.6" r="4.200"/>
<circle cx="1581.5" cy="1217.8" r="4.200"/>
<circle cx="1509.8" cy="1168.2" r="4.200"/>
<circle cx="1670.6" cy="1206.1" r="4.200"/>
<circle cx="1584.2" cy="1182.0" r="4.200"/>
<circle cx="1507.5" cy="1321.6" r="4.200"/>
<circle cx="1609.3" cy="1134.7" r="4.200"/>
<circle cx="1683.3" cy="1240.8" r="4.200"/>
<circle cx="1549.8" cy="1310.2" r="4.200"/>
<circle cx="1567.5" cy="1272.1" r="4.200"/>
<circle cx="1656.5" cy="1289.3" r="4.200"/>
<circle cx="1578.2" cy="1035.4" r="4.200"/>
<circle cx="1677.0" cy="1198.2" r="4.200"/>
<circle cx="1589.3" cy="1310.3" r="4.200"/>
<circle cx="1617.6" cy="1248.2" r="4.200"/>
<circle cx="1568.8" cy="1173.3" r="4.200"/>
<circle cx="1624.3" cy="1292.5" r="4.200"/>
<circle cx="1516.5" cy="1101.0" r="4.200"/>
<circle cx="1696.7" cy="959.6" r="4.200"/>
<circle cx="1566.0" cy="1085.7" r="4.200"/>
<circle cx="1606.2" cy="1108.6" r="4.200"/>
<circle cx="1578.5" cy="1264.9" r="4.200"/>
<circle cx="1534.0" cy="1322.2" r="4.200"/>
<circle cx="1652.4" cy="1189.4" r="4.200"/>
<circle cx="1550.9" cy="1296.0" r="4.200"/>
<circle cx="1474.5" cy="1176.5" r="4.200"/>
<circle cx="1549.6" cy="1214.2" r="4.200"/>
<circle cx="1414.9" cy="1218.2" r="4.200"/>
<circle cx="1529.1" cy="1241.0" r="4.200"/>
<circle cx="1630.3" cy="1141.8" r="4.200"/>
<circle cx="1590.9" cy="1201.1" r="4.200"/>
<circle cx="1601.8" cy="1177.1" r="4.200"/>
<circle cx="1550.4" cy="1297.7" r="4.200"/>
<circle cx="1608.1" cy="1270.9" r="4.200"/>
<circle cx="1686.1" cy="1229.0" r="4.200"/>
<circle cx="1566.2" cy="1235.4" r="4.200"/>
<circle cx="1553.8" cy="975.7" r="4.200"/>
<circle cx="1505.4" cy="1274.7" r="4.200"/>
<circle cx="1646.6" cy="1163.3" r="4.200"/>
<circle cx="1568.4" cy="1079.8" r="4.200"/>
<circle cx="1612.5" cy="1201.4" r="4.200"/>
<circle cx="1465.8" cy="1322.3" r="4.200"/>
<circle cx="1493.6" cy="1238.4" r="4.200"/>
<circle cx="1516.3" cy="1099.9" r="4.200"/>
<circle cx="1606.9" cy="1264.0" r="4.200"/>
<circle cx="1633.3" cy="993.4" r="4.200"/>
<circle cx="1655.1" cy="1282.3" r="4.200"/>
<circle cx="1546.3" cy="1105.8" r="4.200"/>
<circle cx="1486.3" cy="1225.7" r="4.200"/>
<circle cx="1611.7" cy="1146.2" r="4.200"/>
<circle cx="1471.1" cy="1340.7" r="4.200"/>
<circle cx="1677.2" cy="1200.1" r="4.200"/>
<circle cx="1609.8" cy="1263.3" r="4.200"/>
<circle cx="1527.7" cy="1221.8" r="4.200"/>
<circle cx="1469.1" cy="1314.9" r="4.200"/>
<circle cx="1702.1" cy="1268.2" r="4.200"/>
<circle cx="1516.6" cy="1114.1" r="4.200"/>
<circle cx="1479.9" cy="1163.6" r="4.200"/>
<circle cx="1697.6" cy="1267.3" r="4.200"/>
<circle cx="1577.9" cy="1109.5" r="4.200"/>
<circle cx="1619.0" cy="1186.2" r="4.200"/>
<circle cx="1660.2" cy="1268.1" r="4.200"/>
<circle cx="1642.9" cy="953.5" r="4.200"/>
<circle cx="1593.8" cy="1131.7" r="4.200"/>
<circle cx="1512.2" cy="1300.9" r="4.200"/>
<circle cx="1609.3" cy="957.8" r="4.200"/>
<circle cx="1607.2" cy="1276.2" r="4.200"/>
<circle cx="1676.4" cy="1267.7" r="4.200"/>
<circle cx="1675.0" cy="1220.6" r="4.200"/>
<circle cx="1551.3" cy="1104.9" r="4.200"/>
<circle cx="1548.7" cy="1262.2" r="4.200"/>
<circle cx="1514.9" cy="1336.6" r="4.200"/>
<circle cx="1547.8" cy="1274.3" r="4.200"/>
<circle cx="1478.5" cy="1324.6" r="4.200"/>
<circle cx="1543.9" cy="1183.6" r="4.200"/>
<circle cx="1612.2" cy="970.7" r="4.200"/>
<circle cx="1652.5" cy="1286.5" r="4.200"/>
<circle cx="1404.3" cy="1194.1" r="4.200"/>
<circle cx="1661.5" cy="1265.0" r="4.200"/>
<circle cx="1684.6" cy="973.5" r="4.200"/>
<circle cx="1524.8" cy="1235.9" r="4.200"/>
<circle cx="1434.6" cy="1238.7" r="4.200"/>
<circle cx="1665.6" cy="1208.1" r="4.200"/>
<circle cx="1654.7" cy="1146.4" r="4.200"/>
<circle cx="1524.6" cy="1187.7" r="4.200"/>
<circle cx="1484.0" cy="1255.8" r="4.200"/>
<circle cx="1608.1" cy="1199.7" r="4.200"/>
<circle cx="1582.1" cy="1114.5" r="4.200"/>
<circle cx="1426.5" cy="1244.9" r="4.200"/>
<circle cx="1524.6" cy="1299.5" r="4.200"/>
<circle cx="1565.6" cy="1297.1" r="4.200"/>
<circle cx="1460.4" cy="1265.6" r="4.200"/>
<circle cx="1595.3" cy="1180.5" r="4.200"/>
<circle cx="1518.3" cy="1148.3" r="4.200"/>
<circle cx="1625.3" cy="1240.2" r="4.200"/>
<circle cx="1596.1" cy="1141.5" r="4.200"/>
<circle cx="1480.0" cy="1213.1" r="4.200"/>
<circle cx="1465.7" cy="1259.9" r="4.200"/>
<circle cx="1543.2" cy="1302.9" r="4.200"/>
<circle cx="1539.3" cy="1128.1" r="4.200"/>
<circle cx="1483.7" cy="1244.8" r="4.200"/>
<circle cx="1497.1" cy="1170.6" r="4.200"/>
<circle cx="1655.5" cy="1218.2" r="4.200"/>
<circle cx="1548.8" cy="1038.7" r="4.200"/>
<circle cx="1605.8" cy="1299.0" r="4.200"/>
<circle cx="1478.8" cy="1214.7" r="4.200"/>
<circle cx="1657.1" cy="1256.9" r="4.200"/>
<circle cx="1548.6" cy="1108.6" r="4.200"/>
<circle cx="1681.4" cy="1209.5" r="4.200"/>
<circle cx="1623.6" cy="1225.1" r="4.200"/>
<circle cx="1655.0" cy="1233.0" r="4.200"/>
<circle cx="1682.8" cy="1205.0" r="4.200"/>
<circle cx="1674.1" cy="946.1" r="4.200"/>
<circle cx="1646.7" cy="1096.8" r="4.200"/>
<circle cx="1704.0" cy="973.2" r="4.200"/>
<circle cx="1505.2" cy="1192.9" r="4.200"/>
<circle cx="1634.2" cy="1046.4" r="4.200"/>
<circle cx="1644.4" cy="1259.8" r="4.200"/>
<circle cx="1576.8" cy="1314.8" r="4.200"/>
<circle cx="1487.4" cy="1218.7" r="4.200"/>
<circle cx="1659.5" cy="1227.8" r="4.200"/>
<circle cx="1513.3" cy="1328.0" r="4.200"/>
<circle cx="1605.0" cy="1077.1" r="4.200"/>
<circle cx="1618.4" cy="1068.2" r="4.200"/>
<circle cx="1547.8" cy="1038.8" r="4.200"/>
<circle cx="1493.8" cy="1145.9" r="4.200"/>
<circle cx="1549.5" cy="1246.4" r="4.200"/>
<circle cx="1678.4" cy="963.0" r="4.200"/>
<circle cx="1687.5" cy="1260.7" r="4.200"/>
<circle cx="1603.6" cy="1121.2" r="4.200"/>
<circle cx="1626.9" cy="983.0" r="4.200"/>
<circle cx="1542.8" cy="1225.9" r="4.200"/>
<circle cx="1659.5" cy="1279.6" r="4.200"/>
<circle cx="1553.7" cy="1091.2" r="4.200"/>
<circle cx="1604.7" cy="1245.8" r="4.200"/>
<circle cx="1581.3" cy="1176.8" r="4.200"/>
<circle cx="1693.6" cy="944.4" r="4.200"/>
<circle cx="1451.6" cy="1279.6" r="4.200"/>
<circle cx="1428.4" cy="1217.0" r="4.200"/>
<circle cx="1607.0" cy="1168.7" r="4.200"/>
<circle cx="1624.4" cy="1033.5" r="4.200"/>
<circle cx="1662.8" cy="1173.4" r="4.200"/>
<circle cx="1504.5" cy="1237.3" r="4.200"/>
<circle cx="1695.5" cy="977.9" r="4.200"/>
<circle cx="1656.2" cy="1173.6" r="4.200"/>
<circle cx="1617.2" cy="1225.8" r="4.200"/>
<circle cx="1557.6" cy="1244.8" r="4.200"/>
<circle cx="1492.4" cy="1318.9" r="4.200"/>
<circle cx="1701.7" cy="1265.5" r="4.200"/>
<circle cx="1443.8" cy="1188.0" r="4.200"/>
<circle cx="1592.4" cy="1248.7" r="4.200"/>
<circle cx="1648.7" cy="1256.0" r="4.200"/>
<circle cx="1563.8" cy="1298.1" r="4.200"/>
<circle cx="1591.6" cy="1166.3" r="4.200"/>
<circle cx="1676.8" cy="1289.0" r="4.200"/>
<circle cx="1604.1" cy="1251.3" r="4.200"/>
<circle cx="1611.9" cy="1268.5" r="4.200"/>
<circle cx="1458.6" cy="1196.7" r="4.200"/>
<circle cx="1451.2" cy="1284.9" r="4.200"/>
<circle cx="1679.0" cy="1227.7" r="4.200"/>
<circle cx="1474.2" cy="1285.4" r="4.200"/>
<circle cx="1699.1" cy="1267.3" r="4.200"/>
<circle cx="1600.7" cy="1103.6" r="4.200"/>
<circle cx="1627.0" cy="1147.9" r="4.200"/>
<circle cx="1412.2" cy="1211.0" r="4.200"/>
<circle cx="1633.2" cy="1166.3" r="4.200"/>
<circle cx="1650.9" cy="1263.0" r="4.200"/>
<circle cx="1595.2" cy="961.8" r="4.200"/>
<circle cx="1624.5" cy="1076.2" r="4.200"/>
<circle cx="1466.0" cy="1260.3" r="4.200"/>
<circle cx="1550.8" cy="1288.1" r="4.200"/>
<circle cx="1679.9" cy="1262.5" r="4.200"/>
<circle cx="1644.7" cy="1250.0" r="4.200"/>
<circle cx="1610.9" cy="1191.1" r="4.200"/>
<circle cx="1474.7" cy="1197.7" r="4.200"/>
<circle cx="1560.6" cy="1218.6" r="4.200"/>
<circle cx="1576.2" cy="1242.9" r="4.200"/>
<circle cx="1558.3" cy="1125.6" r="4.200"/>
<circle cx="1451.3" cy="1260.8" r="4.200"/>
<circle cx="1582.5" cy="1088.3" r="4.200"/>
<circle cx="1637.2" cy="1179.3" r="4.200"/>
<circle cx="1524.0" cy="1205.7" r="4.200"/>
<circle cx="1549.9" cy="990.2" r="4.200"/>
<circle cx="1600.1" cy="1266.7" r="4.200"/>
<circle cx="1592.7" cy="1308.6" r="4.200"/>
<circle cx="1514.7" cy="1136.6" r="4.200"/>
<circle cx="1565.4" cy="1256.7" r="4.200"/>
<circle cx="1667.7" cy="1278.6" r="4.200"/>
<circle cx="1570.0" cy="1300.9" r="4.200"/>
<circle cx="1486.9" cy="1240.2" r="4.200"/>
<circle cx="1614.6" cy="1292.7" r="4.200"/>
<circle cx="1679.9" cy="1192.9" r="4.200"/>
<circle cx="1669.8" cy="1207.7" r="4.200"/>
<circle cx="1678.5" cy="1010.2" r="4.200"/>
<circle cx="1592.8" cy="1043.1" r="4.200"/>
<circle cx="1508.1" cy="1262.1" r="4.200"/>
<circle cx="1488.5" cy="1209.1" r="4.200"/>
<circle cx="1555.1" cy="1218.8" r="4.200"/>
<circle cx="1491.7" cy="1241.0" r="4.200"/>
<circle cx="1434.8" cy="1235.6" r="4.200"/>
<circle cx="1588.6" cy="1004.7" r="4.200"/>
<circle cx="1670.0" cy="1290.5" r="4.200"/>
<circle cx="1575.1" cy="1091.9" r="4.200"/>
<circle cx="1536.1" cy="1318.1" r="4.200"/>
<circle cx="1659.4" cy="996.7" r="4.200"/>
<circle cx="1425.6" cy="1218.1" r="4.200"/>
<circle cx="1615.8" cy="1219.6" r="4.200"/>
<circle cx="1541.4" cy="1156.0" r="4.200"/>
<circle cx="1452.7" cy="1175.9" r="4.200"/>
<circle cx="1654.3" cy="1175.1" r="4.200"/>
<circle cx="1686.8" cy="1231.5" r="4.200"/>
<circle cx="1665.7" cy="1230.6" r="4.200"/>
<circle cx="1655.5" cy="946.9" r="4.200"/>
<circle cx="1669.6" cy="1207.6" r="4.200"/>
<circle cx="1602.3" cy="1231.0" r="4.200"/>
<circle cx="1498.6" cy="1319.0" r="4.200"/>
<circle cx="1489.0" cy="1244.0" r="4.200"/>
<circle cx="1667.7" cy="971.4" r="4.200"/>
<circle cx="1590.4" cy="1292.0" r="4.200"/>
<circle cx="1543.1" cy="1074.3" r="4.200"/>
<circle cx="1473.7" cy="1325.1" r="4.200"/>
<circle cx="1546.3" cy="1157.2" r="4.200"/>
<circle cx="1501.1" cy="1222.9" r="4.200"/>
<circle cx="1463.5" cy="1233.0" r="4.200"/>
<circle cx="1588.1" cy="1306.5" r="4.200"/>
<circle cx="1548.5" cy="1313.5" r="4.200"/>
<circle cx="1536.6" cy="995.2" r="4.200"/>
<circle cx="1700.3" cy="1280.3" r="4.200"/>
<circle cx="1582.8" cy="1133.1" r="4.200"/>
<circle cx="1595.2" cy="1183.5" r="4.200"/>
<circle cx="1695.4" cy="1279.3" r="4.200"/>
<circle cx="1479.9" cy="1256.4" r="4.200"/>
<circle cx="1429.1" cy="1234.8" r="4.200"/>
<circle cx="1541.5" cy="1183.1" r="4.200"/>
<circle cx="1633.9" cy="1053.2" r="4.200"/>
<circle cx="1451.4" cy="1219.2" r="4.200"/>
<circle cx="1646.9" cy="1240.7" r="4.200"/>
<circle cx="1592.0" cy="1112.9" r="4.200"/>
<circle cx="1624.4" cy="1236.7" r="4.200"/>
<circle cx="1490.8" cy="1280.6" r="4.200"/>
<circle cx="1542.3" cy="1331.5" r="4.200"/>
<circle cx="1453.4" cy="1290.7" r="4.200"/>
<circle cx="1615.6" cy="1204.9" r="4.200"/>
<circle cx="1558.9" cy="1314.7" r="4.200"/>
<circle cx="1477.3" cy="1182.6" r="4.200"/>
<circle cx="1582.5" cy="1196.2" r="4.200"/>
<circle cx="1498.3" cy="1266.0" r="4.200"/>
<circle cx="1489.6" cy="1273.9" r="4.200"/>
<circle cx="1610.1" cy="1182.3" r="4.200"/>
<circle cx="1629.5" cy="1222.2" r="4.200"/>
<circle cx="1656.2" cy="1213.6" r="4.200"/>
<circle cx="1669.2" cy="1015.7" r="4.200"/>
<circle cx="1573.8" cy="1233.7" r="4.200"/>
<circle cx="1561.3" cy="1272.7" r="4.200"/>
<circle cx="1409.2" cy="1204.7" r="4.200"/>
<circle cx="1513.9" cy="1120.4" r="4.200"/>
<circle cx="1595.2" cy="1261.5" r="4.200"/>
<circle cx="1612.6" cy="1144.2" r="4.200"/>
<circle cx="1559.0" cy="1278.2" r="4.200"/>
<circle cx="1596.4" cy="1255.4" r="4.200"/>
<circle cx="1611.4" cy="1175.0" r="4.200"/>
<circle cx="1577.9" cy="1297.8" r="4.200"/>
<circle cx="1614.4" cy="1023.5" r="4.200"/>
<circle cx="1465.1" cy="1324.6" r="4.200"/>
<circle cx="1478.1" cy="1230.0" r="4.200"/>
<circle cx="1614.7" cy="1297.6" r="4.200"/>
<circle cx="1657.5" cy="1218.3" r="4.200"/>
<circle cx="1636.7" cy="1066.8" r="4.200"/>
<circle cx="1522.0" cy="1283.7" r="4.200"/>
<circle cx="1629.2" cy="1031.5" r="4.200"/>
<circle cx="1694.6" cy="1277.2" r="4.200"/>
<circle cx="1597.3" cy="1139.1" r="4.200"/>
<circle cx="1581.1" cy="1258.8" r="4.200"/>
<circle cx="1583.5" cy="1266.0" r="4.200"/>
<circle cx="1602.7" cy="1108.8" r="4.200"/>
<circle cx="1594.4" cy="1220.8" r="4.200"/>
<circle cx="1667.5" cy="1272.0" r="4.200"/>
<circle cx="1697.5" cy="997.2" r="4.200"/>
<circle cx="1657.3" cy="1280.7" r="4.200"/>
<circle cx="1490.4" cy="1306.6" r="4.200"/>
<circle cx="1664.4" cy="1229.4" r="4.200"/>
<circle cx="1573.9" cy="1212.7" r="4.200"/>
<circle cx="1552.8" cy="1191.8" r="4.200"/>
<circle cx="1504.3" cy="1181.3" r="4.200"/>
<circle cx="1492.1" cy="1235.7" r="4.200"/>
<circle cx="1442.6" cy="1275.1" r="4.200"/>
<circle cx="1479.6" cy="1241.3" r="4.200"/>
<circle cx="1529.2" cy="1093.4" r="4.200"/>
<circle cx="1575.1" cy="1280.5" r="4.200"/>
<circle cx="1569.0" cy="1297.4" r="4.200"/>
<circle cx="1486.4" cy="1239.2" r="4.200"/>
<circle cx="1478.5" cy="1276.2" r="4.200"/>
<circle cx="1509.4" cy="1194.4" r="4.200"/>
<circle cx="1556.4" cy="1210.1" r="4.200"/>
<circle cx="1584.0" cy="1310.4" r="4.200"/>
<circle cx="1583.8" cy="1276.8" r="4.200"/>
<circle cx="1631.0" cy="1181.6" r="4.200"/>
<circle cx="1607.3" cy="1250.7" r="4.200"/>
<circle cx="1627.5" cy="1186.1" r="4.200"/>
<circle cx="1530.3" cy="1268.0" r="4.200"/>
<circle cx="1592.1" cy="1312.0" r="4.200"/>
<circle cx="1586.3" cy="1102.8" r="4.200"/>
<circle cx="1548.8" cy="1200.2" r="4.200"/>
<circle cx="1457.4" cy="1264.7" r="4.200"/>
<circle cx="1543.2" cy="1264.3" r="4.200"/>
<circle cx="1494.9" cy="1198.7" r="4.200"/>
<circle cx="1560.9" cy="1129.8" r="4.200"/>
<circle cx="1469.4" cy="1330.8" r="4.200"/>
<circle cx="1570.9" cy="1308.0" r="4.200"/>
<circle cx="1593.1" cy="1134.3" r="4.200"/>
<circle cx="1556.0" cy="1301.1" r="4.200"/>
<circle cx="1655.4" cy="1242.0" r="4.200"/>
<circle cx="1619.7" cy="1037.0" r="4.200"/>
<circle cx="1539.4" cy="1170.3" r="4.200"/>
<circle cx="1543.4" cy="1330.4" r="4.200"/>
<circle cx="1679.6" cy="975.2" r="4.200"/>
<circle cx="1420.3" cy="1218.1" r="4.200"/>
<circle cx="1530.1" cy="1093.2" r="4.200"/>
<circle cx="1579.9" cy="1000.5" r="4.200"/>
<circle cx="1620.3" cy="1227.7" r="4.200"/>
<circle cx="1518.5" cy="1231.1" r="4.200"/>
<circle cx="1564.2" cy="1120.1" r="4.200"/>
<circle cx="1455.7" cy="1204.2" r="4.200"/>
<circle cx="1504.5" cy="1229.6" r="4.200"/>
<circle cx="1485.1" cy="1321.4" r="4.200"/>
<circle cx="1462.8" cy="1232.3" r="4.200"/>
<circle cx="1478.6" cy="1315.2" r="4.200"/>
<circle cx="1640.6" cy="1144.1" r="4.200"/>
<circle cx="1572.0" cy="1104.3" r="4.200"/>
<circle cx="1644.1" cy="1091.8" r="4.200"/>
<circle cx="1531.7" cy="1314.5" r="4.200"/>
<circle cx="1481.5" cy="1257.1" r="4.200"/>
<circle cx="1495.0" cy="1286.7" r="4.200"/>
<circle cx="1614.8" cy="1279.9" r="4.200"/>
<circle cx="1522.9" cy="1330.7" r="4.200"/>
<circle cx="1674.8" cy="1206.9" r="4.200"/>
<circle cx="1456.1" cy="1312.8" r="4.200"/>
<circle cx="1596.6" cy="1261.5" r="4.200"/>
<circle cx="1562.6" cy="967.6" r="4.200"/>
<circle cx="1540.8" cy="1236.0" r="4.200"/>
<circle cx="1550.7" cy="1127.8" r="4.200"/>
<circle cx="1476.5" cy="1317.3" r="4.200"/>
<circle cx="1626.4" cy="1021.0" r="4.200"/>
<circle cx="1573.8" cy="1065.1" r="4.200"/>
<circle cx="1598.9" cy="1096.6" r="4.200"/>
<circle cx="1493.3" cy="1246.1" r="4.200"/>
<circle cx="1535.1" cy="1269.3" r="4.200"/>
<circle cx="1689.6" cy="1244.6" r="4.200"/>
<circle cx="1468.1" cy="1329.8" r="4.200"/>
<circle cx="1444.5" cy="1214.0" r="4.200"/>
<circle cx="1663.8" cy="1212.1" r="4.200"/>
<circle cx="1620.4" cy="1253.4" r="4.200"/>
<circle cx="1560.8" cy="1217.2" r="4.200"/>
<circle cx="1536.0" cy="1332.7" r="4.200"/>
<circle cx="1434.0" cy="1236.5" r="4.200"/>
<circle cx="1551.9" cy="1213.9" r="4.200"/>
<circle cx="1646.3" cy="1252.1" r="4.200"/>
<circle cx="1602.9" cy="1245.2" r="4.200"/>
<circle cx="1635.7" cy="962.5" r="4.200"/>
<circle cx="1511.2" cy="1165.4" r="4.200"/>
<circle cx="1563.8" cy="1108.9" r="4.200"/>
<circle cx="1511.9" cy="1231.8" r="4.200"/>
<circle cx="1487.8" cy="1150.2" r="4.200"/>
<circle cx="1673.7" cy="1173.3" r="4.200"/>
<circle cx="1663.3" cy="1266.8" r="4.200"/>
<circle cx="1618.6" cy="1129.7" r="4.200"/>
<circle cx="1554.0" cy="1150.4" r="4.200"/>
<circle cx="1622.2" cy="1234.9" r="4.200"/>
<circle cx="1615.7" cy="1282.8" r="4.200"/>
<circle cx="1607.7" cy="1265.0" r="4.200"/>
<circle cx="1681.1" cy="1248.0" r="4.200"/>
<circle cx="1501.9" cy="1200.7" r="4.200"/>
<circle cx="1617.9" cy="1287.6" r="4.200"/>
<circle cx="1691.1" cy="1275.2" r="4.200"/>
<circle cx="1673.8" cy="973.1" r="4.200"/>
<circle cx="1605.4" cy="1074.6" r="4.200"/>
<circle cx="1610.3" cy="1259.9" r="4.200"/>
<circle cx="1702.1" cy="1267.4" r="4.200"/>
<circle cx="1544.7" cy="1272.9" r="4.200"/>
<circle cx="1532.8" cy="1286.2" r="4.200"/>
<circle cx="1597.8" cy="1300.2" r="4.200"/>
<circle cx="1558.0" cy="1123.4" r="4.200"/>
<circle cx="1511.2" cy="1206.2" r="4.200"/>
<circle cx="1646.9" cy="1102.7" r="4.200"/>
<circle cx="1587.9" cy="1020.9" r="4.200"/>
<circle cx="1667.3" cy="973.4" r="4.200"/>
<circle cx="1593.0" cy="955.9" r="4.200"/>
<circle cx="1512.6" cy="1341.2" r="4.200"/>
<circle cx="1624.4" cy="1305.9" r="4.200"/>
<circle cx="1467.0" cy="1328.9" r="4.200"/>
<circle cx="1473.2" cy="1165.1" r="4.200"/>
<circle cx="1466.7" cy="1302.4" r="4.200"/>
<circle cx="1531.6" cy="1305.7" r="4.200"/>
<circle cx="1468.7" cy="1183.9" r="4.200"/>
<circle cx="1514.3" cy="1309.1" r="4.200"/>
<circle cx="1672.3" cy="1260.8" r="4.200"/>
<circle cx="1642.6" cy="961.7" r="4.200"/>
<circle cx="1468.3" cy="1308.5" r="4.200"/>
<circle cx="1521.0" cy="1156.4" r="4.200"/>
<circle cx="1583.2" cy="1236.4" r="4.200"/>
<circle cx="1422.9" cy="1241.5" r="4.200"/>
<circle cx="1652.3" cy="1203.4" r="4.200"/>
<circle cx="1604.3" cy="1273.9" r="4.200"/>
<circle cx="1585.7" cy="1061.1" r="4.200"/>
<circle cx="1633.8" cy="1180.6" r="4.200"/>
<circle cx="1530.9" cy="1143.2" r="4.200"/>
<circle cx="1556.7" cy="1308.8" r="4.200"/>
<circle cx="1597.4" cy="954.9" r="4.200"/>
<circle cx="1529.3" cy="1226.2" r="4.200"/>
<circle cx="1560.4" cy="1298.6" r="4.200"/>
<circle cx="1581.5" cy="1157.2" r="4.200"/>
<circle cx="1554.3" cy="1048.9" r="4.200"/>
<circle cx="1431.1" cy="1210.6" r="4.200"/>
<circle cx="1532.0" cy="1273.6" r="4.200"/>
<circle cx="1636.4" cy="1154.0" r="4.200"/>
<circle cx="1425.4" cy="1238.9" r="4.200"/>
<circle cx="1648.5" cy="1170.8" r="4.200"/>
<circle cx="1643.7" cy="1197.4" r="4.200"/>
<circle cx="1558.2" cy="1104.0" r="4.200"/>
<circle cx="1580.2" cy="1311.4" r="4.200"/>
<circle cx="1533.9" cy="1152.9" r="4.200"/>
<circle cx="1456.9" cy="1276.7" r="4.200"/>
<circle cx="1696.2" cy="1279.4" r="4.200"/>
<circle cx="1579.9" cy="1109.0" r="4.200"/>
<circle cx="1691.5" cy="939.7" r="4.200"/>
<circle cx="1680.6" cy="1267.9" r="4.200"/>
<circle cx="1582.2" cy="1304.3" r="4.200"/>
<circle cx="1497.4" cy="1163.6" r="4.200"/>
<circle cx="1471.2" cy="1258.7" r="4.200"/>
<circle cx="1520.4" cy="1236.3" r="4.200"/>
<circle cx="1506.6" cy="1341.8" r="4.200"/>
<circle cx="1439.1" cy="1236.7" r="4.200"/>
<circle cx="1589.3" cy="1294.3" r="4.200"/>
<circle cx="1645.6" cy="1204.1" r="4.200"/>
<circle cx="1646.8" cy="1257.6" r="4.200"/>
<circle cx="1646.0" cy="1273.0" r="4.200"/>
<circle cx="1517.8" cy="1091.8" r="4.200"/>
<circle cx="1678.8" cy="1268.8" r="4.200"/>
<circle cx="1657.6" cy="1267.9" r="4.200"/>
<circle cx="1567.7" cy="1000.1" r="4.200"/>
<circle cx="1565.0" cy="1176.5" r="4.200"/>
<circle cx="1638.0" cy="1222.3" r="4.200"/>
<circle cx="1516.0" cy="1145.8" r="4.200"/>
<circle cx="1455.1" cy="1265.9" r="4.200"/>
<circle cx="1549.3" cy="1214.2" r="4.200"/>
<circle cx="1495.1" cy="1333.7" r="4.200"/>
<circle cx="1594.7" cy="1173.1" r="4.200"/>
<circle cx="1501.1" cy="1137.9" r="4.200"/>
<circle cx="1493.3" cy="1159.3" r="4.200"/>
<circle cx="1529.9" cy="1294.1" r="4.200"/>
<circle cx="1624.6" cy="1271.4" r="4.200"/>
<circle cx="1507.0" cy="1150.4" r="4.200"/>
<circle cx="1640.8" cy="1260.1" r="4.200"/>
<circle cx="1552.9" cy="1097.3" r="4.200"/>
<circle cx="1471.4" cy="1328.4" r="4.200"/>
<circle cx="1491.6" cy="1211.1" r="4.200"/>
<circle cx="1572.9" cy="1145.9" r="4.200"/>
<circle cx="1490.2" cy="1252.2" r="4.200"/>
<circle cx="1565.3" cy="1323.2" r="4.200"/>
<circle cx="1612.1" cy="1182.1" r="4.200"/>
<circle cx="1521.1" cy="1287.1" r="4.200"/>
<circle cx="1518.4" cy="1233.3" r="4.200"/>
<circle cx="1598.1" cy="1235.4" r="4.200"/>
<circle cx="1627.5" cy="1278.7" r="4.200"/>
<circle cx="1531.8" cy="1173.4" r="4.200"/>
<circle cx="1690.4" cy="1244.9" r="4.200"/>
<circle cx="1699.3" cy="1260.7" r="4.200"/>
<circle cx="1541.9" cy="1244.9" r="4.200"/>
<circle cx="1498.2" cy="1316.7" r="4.200"/>
<circle cx="1583.3" cy="1096.0" r="4.200"/>
<circle cx="1578.5" cy="1300.8" r="4.200"/>
<circle cx="1613.9" cy="1268.0" r="4.200"/>
<circle cx="1636.8" cy="1263.5" r="4.200"/>
<circle cx="1556.7" cy="1274.9" r="4.200"/>
<circle cx="1528.0" cy="1310.2" r="4.200"/>
<circle cx="1483.6" cy="1187.8" r="4.200"/>
<circle cx="1589.5" cy="1282.8" r="4.200"/>
<circle cx="1619.6" cy="1171.1" r="4.200"/>
<circle cx="1466.3" cy="1287.8" r="4.200"/>
<circle cx="1437.5" cy="1264.8" r="4.200"/>
<circle cx="1596.2" cy="1257.9" r="4.200"/>
<circle cx="1558.6" cy="1314.3" r="4.200"/>
<circle cx="1551.6" cy="1103.6" r="4.200"/>
<circle cx="1679.5" cy="1218.9" r="4.200"/>
<circle cx="1424.5" cy="1233.3" r="4.200"/>
<circle cx="1671.7" cy="992.3" r="4.200"/>
<circle cx="1614.2" cy="1283.2" r="4.200"/>
<circle cx="1451.8" cy="1237.7" r="4.200"/>
<circle cx="1621.7" cy="969.6" r="4.200"/>
<circle cx="1636.9" cy="1220.8" r="4.200"/>
<circle cx="1683.0" cy="1238.7" r="4.200"/>
<circle cx="1669.4" cy="1244.2" r="4.200"/>
<circle cx="1589.1" cy="1259.8" r="4.200"/>
<circle cx="1450.4" cy="1237.1" r="4.200"/>
<circle cx="1441.1" cy="1228.5" r="4.200"/>
<circle cx="1589.0" cy="1066.0" r="4.200"/>
<circle cx="1628.8" cy="1262.1" r="4.200"/>
<circle cx="1532.1" cy="1104.3" r="4.200"/>
<circle cx="1435.4" cy="1239.8" r="4.200"/>
<circle cx="1633.2" cy="1084.7" r="4.200"/>
<circle cx="1647.1" cy="1021.6" r="4.200"/>
<circle cx="1629.2" cy="1222.2" r="4.200"/>
<circle cx="1495.3" cy="1347.4" r="4.200"/>
<circle cx="1470.9" cy="1231.2" r="4.200"/>
<circle cx="1575.2" cy="1137.8" r="4.200"/>
<circle cx="1586.2" cy="1114.0" r="4.200"/>
<circle cx="1548.8" cy="1241.6" r="4.200"/>
<circle cx="1616.9" cy="955.0" r="4.200"/>
<circle cx="1537.9" cy="1077.1" r="4.200"/>
<circle cx="1519.1" cy="1150.7" r="4.200"/>
<circle cx="1558.9" cy="1326.6" r="4.200"/>
<circle cx="1669.5" cy="1196.2" r="4.200"/>
<circle cx="1644.5" cy="1115.5" r="4.200"/>
<circle cx="1577.8" cy="1246.5" r="4.200"/>
<circle cx="1667.3" cy="1209.1" r="4.200"/>
<circle cx="1540.4" cy="1279.0" r="4.200"/>
<circle cx="1458.2" cy="1222.9" r="4.200"/>
<circle cx="1636.1" cy="954.9" r="4.200"/>
<circle cx="1550.2" cy="1185.7" r="4.200"/>
<circle cx="1582.7" cy="967.9" r="4.200"/>
<circle cx="1571.9" cy="1206.6" r="4.200"/>
<circle cx="1621.4" cy="1209.4" r="4.200"/>
<circle cx="1607.8" cy="1304.4" r="4.200"/>
<circle cx="1473.5" cy="1264.4" r="4.200"/>
<circle cx="1500.7" cy="1331.1" r="4.200"/>
<circle cx="1532.8" cy="1131.3" r="4.200"/>
<circle cx="1484.9" cy="1173.6" r="4.200"/>
<circle cx="1549.0" cy="1178.7" r="4.200"/>
<circle cx="1696.0" cy="951.3" r="4.200"/>
<circle cx="1585.6" cy="1148.5" r="4.200"/>
<circle cx="1626.3" cy="1170.1" r="4.200"/>
<circle cx="1675.2" cy="1001.8" r="4.200"/>
<circle cx="1628.6" cy="1242.8" r="4.200"/>
<circle cx="1577.6" cy="994.9" r="4.200"/>
<circle cx="1470.9" cy="1316.6" r="4.200"/>
<circle cx="1586.7" cy="1262.5" r="4.200"/>
<circle cx="1541.5" cy="1115.9" r="4.200"/>
<circle cx="1656.1" cy="1193.5" r="4.200"/>
<circle cx="1471.9" cy="1242.7" r="4.200"/>
<circle cx="1540.2" cy="1279.9" r="4.200"/>
<circle cx="1648.3" cy="1220.4" r="4.200"/>
<circle cx="1524.1" cy="1308.3" r="4.200"/>
<circle cx="1686.7" cy="1246.7" r="4.200"/>
<circle cx="1590.1" cy="1073.7" r="4.200"/>
<circle cx="1635.7" cy="1099.3" r="4.200"/>
<circle cx="1595.1" cy="1293.9" r="4.200"/>
<circle cx="1461.6" cy="1227.9" r="4.200"/>
<circle cx="1660.1" cy="1219.4" r="4.200"/>
<circle cx="1584.3" cy="1230.8" r="4.200"/>
<circle cx="1652.4" cy="1156.2" r="4.200"/>
<circle cx="1449.3" cy="1293.2" r="4.200"/>
<circle cx="1570.3" cy="1222.7" r="4.200"/>
<circle cx="1563.8" cy="1228.4" r="4.200"/>
<circle cx="1562.5" cy="1115.8" r="4.200"/>
<circle cx="1597.7" cy="1300.6" r="4.200"/>
<circle cx="1516.1" cy="1125.7" r="4.200"/>
<circle cx="1656.8" cy="1219.6" r="4.200"/>
<circle cx="1526.7" cy="1297.0" r="4.200"/>
<circle cx="1561.8" cy="1214.1" r="4.200"/>
<circle cx="1501.9" cy="1272.8" r="4.200"/>
<circle cx="1543.4" cy="1193.3" r="4.200"/>
<circle cx="1606.4" cy="1264.8" r="4.200"/>
<circle cx="1537.9" cy="1081.9" r="4.200"/>
<circle cx="1599.8" cy="1171.1" r="4.200"/>
<circle cx="1479.1" cy="1314.7" r="4.200"/>
<circle cx="1676.5" cy="1014.1" r="4.200"/>
<circle cx="1562.1" cy="1285.9" r="4.200"/>
<circle cx="1482.1" cy="1248.1" r="4.200"/>
<circle cx="1624.6" cy="1170.5" r="4.200"/>
<circle cx="1664.4" cy="1147.7" r="4.200"/>
<circle cx="1669.5" cy="1243.5" r="4.200"/>
<circle cx="1636.8" cy="1060.4" r="4.200"/>
<circle cx="1530.1" cy="1256.2" r="4.200"/>
<circle cx="1472.5" cy="1184.2" r="4.200"/>
<circle cx="1476.1" cy="1260.1" r="4.200"/>
<circle cx="1556.1" cy="1057.5" r="4.200"/>
<circle cx="1510.4" cy="1267.2" r="4.200"/>
<circle cx="1646.3" cy="953.1" r="4.200"/>
<circle cx="1680.1" cy="1204.2" r="4.200"/>
<circle cx="1508.4" cy="1327.9" r="4.200"/>
<circle cx="1565.1" cy="1130.7" r="4.200"/>
<circle cx="1632.8" cy="1040.6" r="4.200"/>
<circle cx="1512.7" cy="1279.4" r="4.200"/>
<circle cx="1568.0" cy="1201.5" r="4.200"/>
<circle cx="1657.7" cy="1243.7" r="4.200"/>
<circle cx="1449.3" cy="1266.5" r="4.200"/>
<circle cx="1525.9" cy="1308.6" r="4.200"/>
<circle cx="1463.5" cy="1206.2" r="4.200"/>
<circle cx="1491.0" cy="1299.0" r="4.200"/>
<circle cx="1577.5" cy="1292.7" r="4.200"/>
<circle cx="1576.4" cy="1180.2" r="4.200"/>
<circle cx="1692.2" cy="1246.0" r="4.200"/>
<circle cx="1679.5" cy="1207.5" r="4.200"/>
<circle cx="1502.5" cy="1264.6" r="4.200"/>
<circle cx="1470.9" cy="1310.4" r="4.200"/>
<circle cx="1454.6" cy="1262.5" r="4.200"/>
<circle cx="1466.3" cy="1329.4" r="4.200"/>
<circle cx="1639.4" cy="989.8" r="4.200"/>
<circle cx="1466.1" cy="1220.6" r="4.200"/>
<circle cx="1518.5" cy="1230.8" r="4.200"/>
<circle cx="1575.6" cy="1294.1" r="4.200"/>
<circle cx="1645.8" cy="1196.1" r="4.200"/>
<circle cx="1635.0" cy="908.6" r="4.200"/>
<circle cx="1464.9" cy="1287.4" r="4.200"/>
<circle cx="1565.0" cy="1040.8" r="4.200"/>
<circle cx="1646.4" cy="1292.9" r="4.200"/>
<circle cx="1620.5" cy="1238.3" r="4.200"/>
<circle cx="1461.2" cy="1247.7" r="4.200"/>
<circle cx="1618.3" cy="1204.7" r="4.200"/>
<circle cx="1613.4" cy="1296.2" r="4.200"/>
<circle cx="1645.2" cy="1178.2" r="4.200"/>
<circle cx="1553.4" cy="1287.5" r="4.200"/>
<circle cx="1643.2" cy="1229.0" r="4.200"/>
<circle cx="1477.7" cy="1245.3" r="4.200"/>
<circle cx="1555.2" cy="1299.1" r="4.200"/>
<circle cx="1622.9" cy="956.6" r="4.200"/>
<circle cx="1677.5" cy="1260.9" r="4.200"/>
<circle cx="1476.5" cy="1311.0" r="4.200"/>
<circle cx="1539.9" cy="1306.0" r="4.200"/>
<circle cx="1561.4" cy="1123.3" r="4.200"/>
<circle cx="1541.9" cy="988.7" r="4.200"/>
<circle cx="1662.2" cy="1260.5" r="4.200"/>
<circle cx="1613.4" cy="1147.6" r="4.200"/>
<circle cx="1537.3" cy="1053.5" r="4.200"/>
<circle cx="1653.2" cy="1194.6" r="4.200"/>
<circle cx="1543.4" cy="1334.5" r="4.200"/>
<circle cx="1645.5" cy="987.2" r="4.200"/>
<circle cx="1648.0" cy="1217.5" r="4.200"/>
<circle cx="1518.7" cy="1109.2" r="4.200"/>
<circle cx="1437.6" cy="1232.4" r="4.200"/>
<circle cx="1469.4" cy="1283.3" r="4.200"/>
<circle cx="1497.5" cy="1251.1" r="4.200"/>
<circle cx="1674.0" cy="1235.5" r="4.200"/>
<circle cx="1568.9" cy="1047.4" r="4.200"/>
<circle cx="1596.9" cy="1265.9" r="4.200"/>
<circle cx="1598.4" cy="1278.2" r="4.200"/>
<circle cx="1504.2" cy="1187.7" r="4.200"/>
<circle cx="1524.9" cy="1080.0" r="4.200"/>
<circle cx="1524.8" cy="1297.5" r="4.200"/>
<circle cx="1538.1" cy="1166.2" r="4.200"/>
<circle cx="1519.2" cy="1257.8" r="4.200"/>
<circle cx="1619.1" cy="1118.5" r="4.200"/>
<circle cx="1539.5" cy="1101.0" r="4.200"/>
<circle cx="1555.4" cy="1136.4" r="4.200"/>
<circle cx="1680.0" cy="1223.0" r="4.200"/>
<circle cx="1559.0" cy="1148.6" r="4.200"/>
<circle cx="1664.6" cy="1222.1" r="4.200"/>
<circle cx="1676.9" cy="1260.7" r="4.200"/>
<circle cx="1548.2" cy="1111.8" r="4.200"/>
<circle cx="1618.3" cy="1237.7" r="4.200"/>
<circle cx="1545.0" cy="1060.4" r="4.200"/>
<circle cx="1489.4" cy="1227.0" r="4.200"/>
<circle cx="1657.3" cy="1220.0" r="4.200"/>
<circle cx="1515.6" cy="1161.6" r="4.200"/>
<circle cx="1504.0" cy="1275.9" r="4.200"/>
<circle cx="1536.8" cy="1224.9" r="4.200"/>
<circle cx="1579.1" cy="1078.3" r="4.200"/>
<circle cx="1450.0" cy="1226.1" r="4.200"/>
<circle cx="1635.2" cy="1260.8" r="4.200"/>
<circle cx="1498.5" cy="1230.5" r="4.200"/>
<circle cx="1486.8" cy="1242.3" r="4.200"/>
<circle cx="1658.7" cy="1161.1" r="4.200"/>
<circle cx="1524.3" cy="1077.6" r="4.200"/>
<circle cx="1524.5" cy="1160.9" r="4.200"/>
<circle cx="1464.0" cy="1268.0" r="4.200"/>
<circle cx="1700.7" cy="1269.8" r="4.200"/>
<circle cx="1520.5" cy="1217.9" r="4.200"/>
<circle cx="1689.6" cy="1256.9" r="4.200"/>
<circle cx="1429.4" cy="1246.6" r="4.200"/>
<circle cx="1635.8" cy="1131.5" r="4.200"/>
<circle cx="1683.9" cy="1011.7" r="4.200"/>
<circle cx="1623.2" cy="1008.2" r="4.200"/>
<circle cx="1601.2" cy="1188.0" r="4.200"/>
<circle cx="1597.9" cy="1184.9" r="4.200"/>
<circle cx="1588.5" cy="1316.6" r="4.200"/>
<circle cx="1702.9" cy="968.3" r="4.200"/>
<circle cx="1605.4" cy="1291.3" r="4.200"/>
<circle cx="1520.6" cy="1150.7" r="4.200"/>
<circle cx="1528.4" cy="1172.0" r="4.200"/>
<circle cx="1655.9" cy="1133.3" r="4.200"/>
<circle cx="1426.0" cy="1242.3" r="4.200"/>
<circle cx="1569.5" cy="1173.0" r="4.200"/>
<circle cx="1456.3" cy="1292.4" r="4.200"/>
<circle cx="1530.6" cy="1148.4" r="4.200"/>
<circle cx="1644.1" cy="1136.0" r="4.200"/>
<circle cx="1506.7" cy="1275.8" r="4.200"/>
<circle cx="1518.1" cy="1297.0" r="4.200"/>
<circle cx="1560.4" cy="1175.6" r="4.200"/>
<circle cx="1642.7" cy="1218.1" r="4.200"/>
<circle cx="1431.9" cy="1236.9" r="4.200"/>
<circle cx="1521.5" cy="1208.6" r="4.200"/>
<circle cx="1650.1" cy="958.3" r="4.200"/>
<circle cx="1474.2" cy="1305.3" r="4.200"/>
<circle cx="1455.5" cy="1183.4" r="4.200"/>
<circle cx="1536.9" cy="1244.9" r="4.200"/>
<circle cx="1617.4" cy="1137.8" r="4.200"/>
<circle cx="1458.1" cy="1254.1" r="4.200"/>
<circle cx="1517.5" cy="1313.3" r="4.200"/>
<circle cx="1646.3" cy="1297.9" r="4.200"/>
<circle cx="1621.2" cy="1129.6" r="4.200"/>
<circle cx="1589.3" cy="1206.9" r="4.200"/>
<circle cx="1653.9" cy="1213.7" r="4.200"/>
<circle cx="1544.1" cy="1195.9" r="4.200"/>
<circle cx="1467.6" cy="1288.4" r="4.200"/>
<circle cx="1534.5" cy="1141.1" r="4.200"/>
<circle cx="1607.9" cy="1241.6" r="4.200"/>
<circle cx="1547.4" cy="1236.2" r="4.200"/>
<circle cx="1638.7" cy="1248.5" r="4.200"/>
<circle cx="1564.8" cy="1243.9" r="4.200"/>
<circle cx="1617.1" cy="1241.6" r="4.200"/>
<circle cx="1608.4" cy="1216.7" r="4.200"/>
<circle cx="1595.8" cy="1153.9" r="4.200"/>
<circle cx="1679.3" cy="1248.0" r="4.200"/>
<circle cx="1587.7" cy="1154.8" r="4.200"/>
<circle cx="1540.6" cy="1136.6" r="4.200"/>
<circle cx="1573.7" cy="982.9" r="4.200"/>
<circle cx="1640.4" cy="1300.2" r="4.200"/>
<circle cx="1547.9" cy="1225.3" r="4.200"/>
<circle cx="1634.4" cy="1301.6" r="4.200"/>
<circle cx="1521.4" cy="1237.6" r="4.200"/>
<circle cx="1658.7" cy="1175.4" r="4.200"/>
<circle cx="1636.0" cy="1222.0" r="4.200"/>
<circle cx="1663.8" cy="1280.1" r="4.200"/>
<circle cx="1682.5" cy="1207.0" r="4.200"/>
<circle cx="1485.2" cy="1295.1" r="4.200"/>
<circle cx="1558.2" cy="1102.5" r="4.200"/>
<circle cx="1593.0" cy="1208.1" r="4.200"/>
<circle cx="1536.9" cy="1103.5" r="4.200"/>
<circle cx="1637.3" cy="933.6" r="4.200"/>
<circle cx="1531.4" cy="1203.8" r="4.200"/>
<circle cx="1538.6" cy="1135.3" r="4.200"/>
<circle cx="1551.7" cy="1198.8" r="4.200"/>
<circle cx="1581.6" cy="1280.1" r="4.200"/>
<circle cx="1514.8" cy="1154.0" r="4.200"/>
<circle cx="1509.9" cy="1182.8" r="4.200"/>
<circle cx="1657.5" cy="1270.7" r="4.200"/>
<circle cx="1568.5" cy="1109.0" r="4.200"/>
<circle cx="1472.4" cy="1347.6" r="4.200"/>
<circle cx="1631.6" cy="1073.4" r="4.200"/>
<circle cx="1635.4" cy="1211.2" r="4.200"/>
<circle cx="1538.0" cy="1283.9" r="4.200"/>
<circle cx="1469.1" cy="1282.6" r="4.200"/>
<circle cx="1545.4" cy="1005.2" r="4.200"/>
<circle cx="1555.1" cy="1306.3" r="4.200"/>
<circle cx="1623.0" cy="1094.9" r="4.200"/>
<circle cx="1515.7" cy="1176.9" r="4.200"/>
<circle cx="1446.6" cy="1287.2" r="4.200"/>
<circle cx="1539.2" cy="1318.3" r="4.200"/>
<circle cx="1507.3" cy="1316.4" r="4.200"/>
<circle cx="1411.6" cy="1190.3" r="4.200"/>
<circle cx="1675.9" cy="1193.4" r="4.200"/>
<circle cx="1611.4" cy="1068.1" r="4.200"/>
<circle cx="1673.7" cy="998.8" r="4.200"/>
<circle cx="1670.5" cy="1246.9" r="4.200"/>
<circle cx="1473.1" cy="1316.5" r="4.200"/>
<circle cx="1522.1" cy="1201.0" r="4.200"/>
<circle cx="1588.6" cy="1308.2" r="4.200"/>
<circle cx="1612.0" cy="1188.9" r="4.200"/>
<circle cx="1497.9" cy="1143.6" r="4.200"/>
<circle cx="1697.1" cy="1276.2" r="4.200"/>
<circle cx="1642.1" cy="1286.6" r="4.200"/>
<circle cx="1671.9" cy="1195.3" r="4.200"/>
<circle cx="1504.0" cy="1134.4" r="4.200"/>
<circle cx="1503.0" cy="1189.5" r="4.200"/>
<circle cx="1638.7" cy="1140.1" r="4.200"/>
<circle cx="1570.3" cy="1067.3" r="4.200"/>
<circle cx="1620.8" cy="1299.7" r="4.200"/>
<circle cx="1437.1" cy="1230.7" r="4.200"/>
<circle cx="1491.5" cy="1150.2" r="4.200"/>
<circle cx="1587.7" cy="1063.6" r="4.200"/>
<circle cx="1581.6" cy="1141.9" r="4.200"/>
<circle cx="1545.3" cy="1148.4" r="4.200"/>
<circle cx="1669.7" cy="1223.4" r="4.200"/>
<circle cx="1682.3" cy="1197.8" r="4.200"/>
<circle cx="1546.7" cy="1310.2" r="4.200"/>
<circle cx="1552.8" cy="1014.4" r="4.200"/>
<circle cx="1568.4" cy="1301.9" r="4.200"/>
<circle cx="1583.2" cy="1134.8" r="4.200"/>
<circle cx="1416.7" cy="1224.4" r="4.200"/>
<circle cx="1634.8" cy="1276.5" r="4.200"/>
<circle cx="1516.8" cy="1239.3" r="4.200"/>
<circle cx="1534.9" cy="1247.5" r="4.200"/>
<circle cx="1650.9" cy="1163.0" r="4.200"/>
<circle cx="1570.8" cy="1176.9" r="4.200"/>
<circle cx="1659.6" cy="1234.1" r="4.200"/>
<circle cx="1489.2" cy="1347.9" r="4.200"/>
<circle cx="1462.5" cy="1314.4" r="4.200"/>
<circle cx="1657.7" cy="1018.8" r="4.200"/>
<circle cx="1680.0" cy="977.0" r="4.200"/>
<circle cx="1604.1" cy="1292.2" r="4.200"/>
<circle cx="1594.1" cy="1004.0" r="4.200"/>
<circle cx="1653.2" cy="1175.4" r="4.200"/>
<circle cx="1450.2" cy="1185.4" r="4.200"/>
<circle cx="1461.2" cy="1306.2" r="4.200"/>
<circle cx="1555.2" cy="1315.0" r="4.200"/>
<circle cx="1543.7" cy="1140.9" r="4.200"/>
<circle cx="1598.8" cy="978.6" r="4.200"/>
<circle cx="1419.5" cy="1205.7" r="4.200"/>
<circle cx="1631.1" cy="1099.0" r="4.200"/>
<circle cx="1586.9" cy="1271.6" r="4.200"/>
<circle cx="1555.4" cy="1179.2" r="4.200"/>
<circle cx="1688.5" cy="1216.8" r="4.200"/>
<circle cx="1546.9" cy="1126.1" r="4.200"/>
<circle cx="1471.6" cy="1311.1" r="4.200"/>
<circle cx="1573.2" cy="1193.3" r="4.200"/>
<circle cx="1550.1" cy="1234.0" r="4.200"/>
<circle cx="1638.7" cy="1158.6" r="4.200"/>
<circle cx="1419.9" cy="1229.8" r="4.200"/>
<circle cx="1624.8" cy="993.7" r="4.200"/>
<circle cx="1500.8" cy="1154.3" r="4.200"/>
<circle cx="1543.2" cy="1179.3" r="4.200"/>
<circle cx="1548.7" cy="1010.5" r="4.200"/>
<circle cx="1447.8" cy="1220.0" r="4.200"/>
<circle cx="1547.0" cy="1044.1" r="4.200"/>
<circle cx="1571.7" cy="1253.7" r="4.200"/>
<circle cx="1664.2" cy="1159.1" r="4.200"/>
<circle cx="1643.4" cy="1091.0" r="4.200"/>
<circle cx="1493.2" cy="1280.7" r="4.200"/>
<circle cx="1636.8" cy="1254.8" r="4.200"/>
<circle cx="1602.1" cy="1218.8" r="4.200"/>
<circle cx="1507.4" cy="1164.1" r="4.200"/>
<circle cx="1461.7" cy="1168.5" r="4.200"/>
<circle cx="1668.3" cy="1191.5" r="4.200"/>
<circle cx="1674.4" cy="1209.9" r="4.200"/>
<circle cx="1541.9" cy="999.7" r="4.200"/>
<circle cx="1694.2" cy="1243.2" r="4.200"/>
<circle cx="1510.6" cy="1226.1" r="4.200"/>
<circle cx="1493.4" cy="1318.4" r="4.200"/>
<circle cx="1670.3" cy="965.2" r="4.200"/>
<circle cx="1649.4" cy="1135.5" r="4.200"/>
<circle cx="1457.0" cy="1257.7" r="4.200"/>
<circle cx="1706.0" cy="979.8" r="4.200"/>
<circle cx="1636.1" cy="1034.8" r="4.200"/>
<circle cx="1573.2" cy="1173.4" r="4.200"/>
<circle cx="1570.3" cy="1093.1" r="4.200"/>
<circle cx="1526.3" cy="1282.1" r="4.200"/>
<circle cx="1501.1" cy="1345.4" r="4.200"/>
<circle cx="1479.7" cy="1174.7" r="4.200"/>
<circle cx="1638.6" cy="1030.9" r="4.200"/>
<circle cx="1570.4" cy="1052.4" r="4.200"/>
<circle cx="1687.3" cy="1234.7" r="4.200"/>
<circle cx="1470.3" cy="1252.7" r="4.200"/>
<circle cx="1461.3" cy="1288.3" r="4.200"/>
<circle cx="1691.5" cy="1245.8" r="4.200"/>
<circle cx="1494.0" cy="1157.6" r="4.200"/>
<circle cx="1535.8" cy="1070.5" r="4.200"/>
<circle cx="1612.8" cy="1192.3" r="4.200"/>
<circle cx="1490.7" cy="1186.9" r="4.200"/>
<circle cx="1482.5" cy="1337.3" r="4.200"/>
<circle cx="1612.9" cy="1278.8" r="4.200"/>
<circle cx="1559.1" cy="1318.2" r="4.200"/>
<circle cx="1604.3" cy="1164.3" r="4.200"/>
<circle cx="1676.4" cy="1004.6" r="4.200"/>
<circle cx="1518.2" cy="1210.8" r="4.200"/>
<circle cx="1548.5" cy="1241.8" r="4.200"/>
<circle cx="1562.8" cy="1298.8" r="4.200"/>
<circle cx="1605.6" cy="1311.1" r="4.200"/>
<circle cx="1571.8" cy="1275.6" r="4.200"/>
<circle cx="1614.3" cy="1194.1" r="4.200"/>
<circle cx="1682.2" cy="1228.4" r="4.200"/>
<circle cx="1685.3" cy="1249.3" r="4.200"/>
<circle cx="1604.7" cy="1292.5" r="4.200"/>
<circle cx="1462.8" cy="1268.2" r="4.200"/>
<circle cx="1650.2" cy="1224.2" r="4.200"/>
<circle cx="1520.9" cy="1196.3" r="4.200"/>
<circle cx="1599.3" cy="1312.9" r="4.200"/>
<circle cx="1589.0" cy="1288.5" r="4.200"/>
<circle cx="1516.1" cy="1328.3" r="4.200"/>
<circle cx="1661.5" cy="1254.5" r="4.200"/>
<circle cx="1564.7" cy="1187.9" r="4.200"/>
<circle cx="1578.7" cy="1217.2" r="4.200"/>
<circle cx="1652.0" cy="1269.6" r="4.200"/>
<circle cx="1537.2" cy="1123.8" r="4.200"/>
<circle cx="1576.5" cy="1216.4" r="4.200"/>
<circle cx="1649.6" cy="1243.6" r="4.200"/>
<circle cx="1694.3" cy="1256.7" r="4.200"/>
<circle cx="1534.3" cy="1164.1" r="4.200"/>
<circle cx="1518.5" cy="1250.3" r="4.200"/>
<circle cx="1563.0" cy="1299.4" r="4.200"/>
<circle cx="1581.2" cy="1235.0" r="4.200"/>
<circle cx="1633.8" cy="1235.3" r="4.200"/>
<circle cx="1534.7" cy="1268.8" r="4.200"/>
<circle cx="1672.4" cy="1193.7" r="4.200"/>
<circle cx="1464.7" cy="1302.3" r="4.200"/>
<circle cx="1670.8" cy="1162.5" r="4.200"/>
<circle cx="1517.5" cy="1230.0" r="4.200"/>
<circle cx="1477.6" cy="1167.7" r="4.200"/>
<circle cx="1583.3" cy="1298.3" r="4.200"/>
<circle cx="1619.3" cy="1213.2" r="4.200"/>
<circle cx="1595.3" cy="1302.2" r="4.200"/>
<circle cx="1444.9" cy="1282.6" r="4.200"/>
<circle cx="1482.1" cy="1289.3" r="4.200"/>
<circle cx="1407.6" cy="1199.3" r="4.200"/>
<circle cx="1638.8" cy="1239.8" r="4.200"/>
<circle cx="1606.5" cy="1172.5" r="4.200"/>
<circle cx="1488.4" cy="1180.6" r="4.200"/>
<circle cx="1552.0" cy="1097.5" r="4.200"/>
<circle cx="1560.5" cy="1298.7" r="4.200"/>
<circle cx="1643.7" cy="1178.4" r="4.200"/>
<circle cx="1500.4" cy="1304.1" r="4.200"/>
<circle cx="1502.3" cy="1250.8" r="4.200"/>
<circle cx="1537.5" cy="1209.5" r="4.200"/>
<circle cx="1557.1" cy="988.9" r="4.200"/>
<circle cx="1672.4" cy="1168.2" r="4.200"/>
<circle cx="1608.7" cy="1121.3" r="4.200"/>
<circle cx="1554.7" cy="1260.7" r="4.200"/>
<circle cx="1549.7" cy="1213.8" r="4.200"/>
<circle cx="1444.5" cy="1225.1" r="4.200"/>
<circle cx="1576.9" cy="1165.8" r="4.200"/>
<circle cx="1528.1" cy="1064.1" r="4.200"/>
<circle cx="1568.6" cy="1187.5" r="4.200"/>
<circle cx="1631.5" cy="911.4" r="4.200"/>
<circle cx="1629.2" cy="1115.6" r="4.200"/>
<circle cx="1530.5" cy="1185.5" r="4.200"/>
<circle cx="1635.2" cy="1194.0" r="4.200"/>
<circle cx="1451.4" cy="1300.6" r="4.200"/>
<circle cx="1576.6" cy="1117.2" r="4.200"/>
<circle cx="1508.7" cy="1152.5" r="4.200"/>
<circle cx="1443.8" cy="1254.8" r="4.200"/>
<circle cx="1545.9" cy="1049.9" r="4.200"/>
<circle cx="1433.7" cy="1259.0" r="4.200"/>
<circle cx="1487.6" cy="1341.7" r="4.200"/>
<circle cx="1593.9" cy="1314.1" r="4.200"/>
<circle cx="1464.8" cy="1336.2" r="4.200"/>
<circle cx="1599.7" cy="1192.2" r="4.200"/>
<circle cx="1477.9" cy="1245.4" r="4.200"/>
<circle cx="1600.4" cy="1060.4" r="4.200"/>
<circle cx="1614.9" cy="984.1" r="4.200"/>
<circle cx="1509.6" cy="1317.4" r="4.200"/>
<circle cx="1517.7" cy="1297.2" r="4.200"/>
<circle cx="1685.7" cy="1236.4" r="4.200"/>
<circle cx="1690.4" cy="1228.7" r="4.200"/>
<circle cx="1454.1" cy="1265.3" r="4.200"/>
<circle cx="1467.9" cy="1327.2" r="4.200"/>
<circle cx="1524.5" cy="1280.7" r="4.200"/>
<circle cx="1489.6" cy="1307.0" r="4.200"/>
<circle cx="1630.2" cy="1164.9" r="4.200"/>
<circle cx="1488.0" cy="1221.6" r="4.200"/>
<circle cx="1458.0" cy="1214.8" r="4.200"/>
<circle cx="1469.5" cy="1335.2" r="4.200"/>
<circle cx="1482.2" cy="1161.4" r="4.200"/>
<circle cx="1594.7" cy="1133.3" r="4.200"/>
<circle cx="1597.8" cy="1185.2" r="4.200"/>
<circle cx="1585.6" cy="1142.1" r="4.200"/>
<circle cx="1462.2" cy="1220.6" r="4.200"/>
<circle cx="1452.8" cy="1173.8" r="4.200"/>
<circle cx="1634.1" cy="1107.0" r="4.200"/>
<circle cx="1471.4" cy="1170.8" r="4.200"/>
<circle cx="1519.1" cy="1187.7" r="4.200"/>
<circle cx="1479.0" cy="1346.2" r="4.200"/>
<circle cx="1553.3" cy="1321.5" r="4.200"/>
<circle cx="1689.5" cy="1234.4" r="4.200"/>
<circle cx="1455.4" cy="1261.5" r="4.200"/>
<circle cx="1583.1" cy="1227.0" r="4.200"/>
<circle cx="1481.9" cy="1350.7" r="4.200"/>
<circle cx="1447.9" cy="1220.0" r="4.200"/>
<circle cx="1479.1" cy="1188.9" r="4.200"/>
<circle cx="1515.6" cy="1156.4" r="4.200"/>
<circle cx="1704.1" cy="999.4" r="4.200"/>
<circle cx="1599.1" cy="1123.9" r="4.200"/>
<circle cx="1592.0" cy="1310.0" r="4.200"/>
<circle cx="1614.4" cy="1197.2" r="4.200"/>
<circle cx="1554.0" cy="1299.0" r="4.200"/>
<circle cx="1545.1" cy="1227.7" r="4.200"/>
<circle cx="1614.8" cy="1240.7" r="4.200"/>
<circle cx="1500.0" cy="1209.9" r="4.200"/>
<circle cx="1520.8" cy="1223.7" r="4.200"/>
<circle cx="1697.9" cy="956.5" r="4.200"/>
<circle cx="1558.9" cy="1271.2" r="4.200"/>
<circle cx="1462.4" cy="1330.2" r="4.200"/>
<circle cx="1543.1" cy="1181.0" r="4.200"/>
<circle cx="1520.5" cy="1177.0" r="4.200"/>
<circle cx="1670.3" cy="1212.0" r="4.200"/>
<circle cx="1514.4" cy="1244.4" r="4.200"/>
<circle cx="1438.1" cy="1189.5" r="4.200"/>
<circle cx="1570.7" cy="1165.4" r="4.200"/>
<circle cx="1524.1" cy="1289.6" r="4.200"/>
<circle cx="1649.5" cy="950.5" r="4.200"/>
<circle cx="1606.7" cy="1015.6" r="4.200"/>
<circle cx="1540.2" cy="1306.3" r="4.200"/>
<circle cx="1488.1" cy="1226.1" r="4.200"/>
<circle cx="1646.5" cy="1168.5" r="4.200"/>
<circle cx="1660.0" cy="1206.1" r="4.200"/>
<circle cx="1544.6" cy="1271.1" r="4.200"/>
<circle cx="1545.6" cy="1167.0" r="4.200"/>
<circle cx="1504.3" cy="1318.8" r="4.200"/>
<circle cx="1536.7" cy="1116.4" r="4.200"/>
<circle cx="1525.4" cy="1211.9" r="4.200"/>
<circle cx="1411.5" cy="1196.6" r="4.200"/>
<circle cx="1549.7" cy="987.2" r="4.200"/>
<circle cx="1484.1" cy="1239.1" r="4.200"/>
<circle cx="1515.6" cy="1169.8" r="4.200"/>
<circle cx="1555.0" cy="1009.0" r="4.200"/>
<circle cx="1609.8" cy="1302.1" r="4.200"/>
<circle cx="1695.8" cy="1278.0" r="4.200"/>
<circle cx="1489.7" cy="1314.0" r="4.200"/>
<circle cx="1467.1" cy="1242.5" r="4.200"/>
<circle cx="1572.9" cy="1187.3" r="4.200"/>
<circle cx="1662.4" cy="948.2" r="4.200"/>
<circle cx="1565.4" cy="1188.3" r="4.200"/>
<circle cx="1633.7" cy="927.2" r="4.200"/>
<circle cx="1551.7" cy="1200.7" r="4.200"/>
<circle cx="1507.5" cy="1179.2" r="4.200"/>
<circle cx="1565.8" cy="1214.2" r="4.200"/>
<circle cx="1423.0" cy="1227.4" r="4.200"/>
<circle cx="1677.1" cy="1221.5" r="4.200"/>
<circle cx="1708.7" cy="985.6" r="4.200"/>
<circle cx="1493.4" cy="1244.8" r="4.200"/>
<circle cx="1531.2" cy="1200.2" r="4.200"/>
<circle cx="1500.6" cy="1264.4" r="4.200"/>
<circle cx="1682.6" cy="1219.1" r="4.200"/>
<circle cx="1526.7" cy="1302.0" r="4.200"/>
<circle cx="1621.5" cy="1049.1" r="4.200"/>
<circle cx="1664.5" cy="1279.1" r="4.200"/>
<circle cx="1577.9" cy="1185.5" r="4.200"/>
<circle cx="1638.7" cy="936.5" r="4.200"/>
<circle cx="1624.7" cy="1131.0" r="4.200"/>
<circle cx="1556.3" cy="1317.7" r="4.200"/>
<circle cx="1553.4" cy="1260.4" r="4.200"/>
<circle cx="1660.7" cy="1142.1" r="4.200"/>
<circle cx="1649.7" cy="1109.6" r="4.200"/>
<circle cx="1535.9" cy="1157.9" r="4.200"/>
<circle cx="1577.7" cy="1143.0" r="4.200"/>
<circle cx="1627.0" cy="978.4" r="4.200"/>
<circle cx="1636.8" cy="1004.1" r="4.200"/>
<circle cx="1554.9" cy="1313.5" r="4.200"/>
<circle cx="1676.7" cy="1205.8" r="4.200"/>
<circle cx="1549.8" cy="1138.3" r="4.200"/>
<circle cx="1530.2" cy="1056.2" r="4.200"/>
<circle cx="1447.1" cy="1279.0" r="4.200"/>
<circle cx="1578.5" cy="1311.3" r="4.200"/>
<circle cx="1484.7" cy="1342.4" r="4.200"/>
<circle cx="1514.5" cy="1218.3" r="4.200"/>
<circle cx="1495.3" cy="1243.5" r="4.200"/>
<circle cx="1652.8" cy="1296.0" r="4.200"/>
<circle cx="1569.0" cy="1174.8" r="4.200"/>
<circle cx="1430.8" cy="1230.5" r="4.200"/>
<circle cx="1420.4" cy="1220.2" r="4.200"/>
<circle cx="1588.9" cy="1195.6" r="4.200"/>
<circle cx="1451.9" cy="1230.5" r="4.200"/>
<circle cx="1639.0" cy="1186.3" r="4.200"/>
<circle cx="1672.3" cy="1205.9" r="4.200"/>
<circle cx="1515.7" cy="1332.6" r="4.200"/>
<circle cx="1507.9" cy="1153.1" r="4.200"/>
<circle cx="1493.8" cy="1266.6" r="4.200"/>
<circle cx="1534.3" cy="1109.8" r="4.200"/>
<circle cx="1599.0" cy="1298.5" r="4.200"/>
<circle cx="1685.0" cy="1249.2" r="4.200"/>
<circle cx="1537.0" cy="1184.3" r="4.200"/>
<circle cx="1436.9" cy="1257.3" r="4.200"/>
<circle cx="1535.6" cy="1327.5" r="4.200"/>
<circle cx="1554.5" cy="1152.5" r="4.200"/>
<circle cx="1597.3" cy="1246.1" r="4.200"/>
<circle cx="1468.2" cy="1302.2" r="4.200"/>
<circle cx="1525.8" cy="1334.4" r="4.200"/>
<circle cx="1618.2" cy="1078.1" r="4.200"/>
<circle cx="1489.4" cy="1334.0" r="4.200"/>
<circle cx="1488.2" cy="1308.0" r="4.200"/>
<circle cx="1483.9" cy="1157.9" r="4.200"/>
<circle cx="1658.0" cy="1159.4" r="4.200"/>
<circle cx="1579.7" cy="1299.9" r="4.200"/>
<circle cx="1526.3" cy="1297.5" r="4.200"/>
<circle cx="1624.2" cy="1027.5" r="4.200"/>
<circle cx="1517.6" cy="1124.1" r="4.200"/>
<circle cx="1467.2" cy="1280.9" r="4.200"/>
<circle cx="1416.9" cy="1216.4" r="4.200"/>
<circle cx="1629.9" cy="1143.4" r="4.200"/>
<circle cx="1634.4" cy="1294.9" r="4.200"/>
<circle cx="1609.3" cy="1202.5" r="4.200"/>
<circle cx="1449.2" cy="1271.3" r="4.200"/>
<circle cx="1639.4" cy="1233.1" r="4.200"/>
<circle cx="1544.6" cy="1194.1" r="4.200"/>
<circle cx="1674.4" cy="1223.3" r="4.200"/>
<circle cx="1675.6" cy="1256.1" r="4.200"/>
<circle cx="1668.1" cy="1171.2" r="4.200"/>
<circle cx="1633.6" cy="1222.8" r="4.200"/>
<circle cx="1693.5" cy="1271.2" r="4.200"/>
<circle cx="1494.1" cy="1233.0" r="4.200"/>
<circle cx="1602.8" cy="1250.6" r="4.200"/>
<circle cx="1558.6" cy="1304.4" r="4.200"/>
<circle cx="1674.3" cy="1004.4" r="4.200"/>
<circle cx="1509.1" cy="1166.3" r="4.200"/>
<circle cx="1543.5" cy="1217.5" r="4.200"/>
<circle cx="1687.9" cy="1272.9" r="4.200"/>
<circle cx="1700.2" cy="962.9" r="4.200"/>
<circle cx="1519.7" cy="1110.1" r="4.200"/>
<circle cx="1692.6" cy="973.9" r="4.200"/>
<circle cx="1620.3" cy="1130.1" r="4.200"/>
<circle cx="1601.1" cy="1243.1" r="4.200"/>
<circle cx="1553.7" cy="1134.0" r="4.200"/>
<circle cx="1524.6" cy="1208.9" r="4.200"/>
<circle cx="1571.3" cy="1080.0" r="4.200"/>
<circle cx="1466.5" cy="1300.1" r="4.200"/>
<circle cx="1564.2" cy="1161.7" r="4.200"/>
<circle cx="1581.7" cy="1284.8" r="4.200"/>
<circle cx="1545.7" cy="982.3" r="4.200"/>
<circle cx="1464.4" cy="1242.1" r="4.200"/>
<circle cx="1541.8" cy="1274.8" r="4.200"/>
<circle cx="1521.9" cy="1147.4" r="4.200"/>
<circle cx="1663.7" cy="1199.9" r="4.200"/>
<circle cx="1555.5" cy="1111.4" r="4.200"/>
<circle cx="1615.3" cy="1072.7" r="4.200"/>
<circle cx="1621.4" cy="1236.8" r="4.200"/>
<circle cx="1611.2" cy="1276.8" r="4.200"/>
<circle cx="1505.2" cy="1331.3" r="4.200"/>
<circle cx="1688.5" cy="1222.7" r="4.200"/>
<circle cx="1630.0" cy="918.5" r="4.200"/>
<circle cx="1617.6" cy="1300.7" r="4.200"/>
<circle cx="1512.2" cy="1272.3" r="4.200"/>
<circle cx="1656.6" cy="1154.8" r="4.200"/>
<circle cx="1587.5" cy="1140.3" r="4.200"/>
<circle cx="1681.3" cy="1234.2" r="4.200"/>
<circle cx="1617.0" cy="1199.1" r="4.200"/>
<circle cx="1566.7" cy="1295.3" r="4.200"/>
<circle cx="1477.4" cy="1351.4" r="4.200"/>
<circle cx="1653.8" cy="1204.0" r="4.200"/>
<circle cx="1529.1" cy="1308.7" r="4.200"/>
<circle cx="1655.8" cy="977.3" r="4.200"/>
<circle cx="1564.4" cy="1300.8" r="4.200"/>
<circle cx="1633.0" cy="1217.9" r="4.200"/>
<circle cx="1652.2" cy="972.6" r="4.200"/>
<circle cx="1562.3" cy="1157.3" r="4.200"/>
<circle cx="1648.8" cy="1282.9" r="4.200"/>
<circle cx="1512.2" cy="1258.1" r="4.200"/>
<circle cx="1604.0" cy="1204.6" r="4.200"/>
<circle cx="1546.8" cy="1229.1" r="4.200"/>
<circle cx="1549.5" cy="1226.8" r="4.200"/>
<circle cx="1659.6" cy="1268.9" r="4.200"/>
<circle cx="1564.0" cy="1209.9" r="4.200"/>
<circle cx="1555.7" cy="1215.2" r="4.200"/>
<circle cx="1646.1" cy="1014.6" r="4.200"/>
<circle cx="1707.2" cy="994.5" r="4.200"/>
<circle cx="1643.6" cy="1241.7" r="4.200"/>
<circle cx="1698.4" cy="957.0" r="4.200"/>
<circle cx="1513.4" cy="1288.8" r="4.200"/>
<circle cx="1468.8" cy="1247.7" r="4.200"/>
<circle cx="1528.2" cy="1132.2" r="4.200"/>
<circle cx="1480.2" cy="1216.2" r="4.200"/>
<circle cx="1523.2" cy="1250.3" r="4.200"/>
<circle cx="1442.5" cy="1269.7" r="4.200"/>
<circle cx="1548.0" cy="1322.0" r="4.200"/>
<circle cx="1503.4" cy="1245.6" r="4.200"/>
<circle cx="1532.2" cy="1252.9" r="4.200"/>
<circle cx="1621.6" cy="1089.2" r="4.200"/>
<circle cx="1428.4" cy="1238.8" r="4.200"/>
<circle cx="1482.2" cy="1202.2" r="4.200"/>
<circle cx="1634.1" cy="1189.3" r="4.200"/>
<circle cx="1509.1" cy="1313.5" r="4.200"/>
<circle cx="1645.5" cy="1183.0" r="4.200"/>
<circle cx="1569.4" cy="1132.9" r="4.200"/>
<circle cx="1467.8" cy="1315.3" r="4.200"/>
<circle cx="1467.3" cy="1298.8" r="4.200"/>
<circle cx="1598.5" cy="1096.6" r="4.200"/>
<circle cx="1503.1" cy="1142.2" r="4.200"/>
<circle cx="1594.2" cy="1149.7" r="4.200"/>
<circle cx="1633.9" cy="1155.6" r="4.200"/>
<circle cx="1607.7" cy="1262.2" r="4.200"/>
<circle cx="1672.2" cy="1205.6" r="4.200"/>
<circle cx="1668.7" cy="1237.6" r="4.200"/>
<circle cx="1674.3" cy="952.2" r="4.200"/>
<circle cx="1463.8" cy="1302.8" r="4.200"/>
<circle cx="1526.9" cy="1323.9" r="4.200"/>
<circle cx="1525.0" cy="1316.4" r="4.200"/>
<circle cx="1595.5" cy="1222.3" r="4.200"/>
<circle cx="1647.3" cy="1209.8" r="4.200"/>
<circle cx="1594.6" cy="1256.1" r="4.200"/>
<circle cx="1487.4" cy="1280.8" r="4.200"/>
<circle cx="1615.7" cy="1190.8" r="4.200"/>
<circle cx="1548.4" cy="1098.8" r="4.200"/>
<circle cx="1544.5" cy="1188.4" r="4.200"/>
<circle cx="1423.9" cy="1185.7" r="4.200"/>
<circle cx="1548.2" cy="1282.4" r="4.200"/>
<circle cx="1653.9" cy="1275.6" r="4.200"/>
<circle cx="1565.3" cy="972.2" r="4.200"/>
<circle cx="1535.4" cy="1307.8" r="4.200"/>
<circle cx="1504.5" cy="1150.9" r="4.200"/>
<circle cx="1560.0" cy="1212.7" r="4.200"/>
<circle cx="1663.9" cy="1016.5" r="4.200"/>
<circle cx="1472.1" cy="1227.0" r="4.200"/>
<circle cx="1685.5" cy="949.0" r="4.200"/>
<circle cx="1674.8" cy="1276.7" r="4.200"/>
<circle cx="1547.0" cy="1249.8" r="4.200"/>
<circle cx="1654.5" cy="998.4" r="4.200"/>
<circle cx="1576.8" cy="1226.9" r="4.200"/>
<circle cx="1546.1" cy="1276.2" r="4.200"/>
<circle cx="1453.5" cy="1267.7" r="4.200"/>
<circle cx="1650.6" cy="1219.6" r="4.200"/>
<circle cx="1522.9" cy="1177.3" r="4.200"/>
<circle cx="1556.1" cy="1096.4" r="4.200"/>
<circle cx="1648.7" cy="1253.2" r="4.200"/>
<circle cx="1656.2" cy="926.0" r="4.200"/>
<circle cx="1505.4" cy="1318.3" r="4.200"/>
<circle cx="1551.8" cy="1319.0" r="4.200"/>
<circle cx="1506.7" cy="1235.6" r="4.200"/>
<circle cx="1457.1" cy="1298.2" r="4.200"/>
<circle cx="1511.8" cy="1231.4" r="4.200"/>
<circle cx="1471.4" cy="1190.7" r="4.200"/>
<circle cx="1605.9" cy="954.5" r="4.200"/>
<circle cx="1583.1" cy="1143.1" r="4.200"/>
<circle cx="1471.6" cy="1354.9" r="4.200"/>
<circle cx="1452.7" cy="1273.8" r="4.200"/>
<circle cx="1426.2" cy="1180.0" r="4.200"/>
<circle cx="1490.6" cy="1231.2" r="4.200"/>
<circle cx="1575.6" cy="1110.4" r="4.200"/>
<circle cx="1457.7" cy="1318.1" r="4.200"/>
<circle cx="1454.3" cy="1305.9" r="4.200"/>
<circle cx="1407.7" cy="1184.6" r="4.200"/>
<circle cx="1621.3" cy="1110.4" r="4.200"/>
<circle cx="1503.2" cy="1274.4" r="4.200"/>
<circle cx="1644.8" cy="1273.5" r="4.200"/>
<circle cx="1480.6" cy="1221.2" r="4.200"/>
<circle cx="1569.8" cy="1300.6" r="4.200"/>
<circle cx="1581.8" cy="1239.2" r="4.200"/>
<circle cx="1710.1" cy="990.7" r="4.200"/>
<circle cx="1477.2" cy="1342.2" r="4.200"/>
<circle cx="1553.0" cy="1002.4" r="4.200"/>
<circle cx="1600.5" cy="1279.6" r="4.200"/>
<circle cx="1683.6" cy="961.4" r="4.200"/>
<circle cx="1482.3" cy="1351.0" r="4.200"/>
<circle cx="1613.6" cy="1241.5" r="4.200"/>
<circle cx="1462.1" cy="1208.6" r="4.200"/>
<circle cx="1647.8" cy="1223.7" r="4.200"/>
<circle cx="1543.8" cy="1318.2" r="4.200"/>
<circle cx="1546.7" cy="1194.6" r="4.200"/>
<circle cx="1455.4" cy="1170.4" r="4.200"/>
<circle cx="1570.9" cy="1301.9" r="4.200"/>
<circle cx="1601.3" cy="1168.5" r="4.200"/>
<circle cx="1546.4" cy="1203.6" r="4.200"/>
<circle cx="1595.0" cy="1214.8" r="4.200"/>
<circle cx="1694.6" cy="1248.7" r="4.200"/>
<circle cx="1673.9" cy="1221.1" r="4.200"/>
<circle cx="1547.2" cy="1187.8" r="4.200"/>
<circle cx="1606.6" cy="1080.9" r="4.200"/>
<circle cx="1687.2" cy="1273.5" r="4.200"/>
<circle cx="1605.5" cy="1017.0" r="4.200"/>
<circle cx="1491.9" cy="1235.6" r="4.200"/>
<circle cx="1483.5" cy="1167.4" r="4.200"/>
<circle cx="1654.1" cy="1235.5" r="4.200"/>
<circle cx="1525.1" cy="1249.8" r="4.200"/>
<circle cx="1685.2" cy="1244.3" r="4.200"/>
<circle cx="1591.2" cy="1304.1" r="4.200"/>
<circle cx="1662.6" cy="943.0" r="4.200"/>
<circle cx="1642.8" cy="1110.8" r="4.200"/>
<circle cx="1601.5" cy="1150.9" r="4.200"/>
<circle cx="1614.3" cy="1174.0" r="4.200"/>
<circle cx="1539.1" cy="1248.9" r="4.200"/>
<circle cx="1540.7" cy="1285.4" r="4.200"/>
<circle cx="1496.1" cy="1332.0" r="4.200"/>
<circle cx="1580.8" cy="1171.1" r="4.200"/>
<circle cx="1600.0" cy="1244.7" r="4.200"/>
<circle cx="1526.5" cy="1262.5" r="4.200"/>
<circle cx="1509.6" cy="1205.4" r="4.200"/>
<circle cx="1580.5" cy="1129.5" r="4.200"/>
<circle cx="1673.2" cy="1237.0" r="4.200"/>
<circle cx="1508.1" cy="1287.9" r="4.200"/>
<circle cx="1533.3" cy="1191.2" r="4.200"/>
<circle cx="1572.6" cy="1059.2" r="4.200"/>
<circle cx="1516.0" cy="1244.9" r="4.200"/>
<circle cx="1678.5" cy="1203.5" r="4.200"/>
<circle cx="1462.1" cy="1309.7" r="4.200"/>
<circle cx="1506.2" cy="1300.9" r="4.200"/>
<circle cx="1581.3" cy="1179.7" r="4.200"/>
<circle cx="1577.3" cy="1077.7" r="4.200"/>
<circle cx="1582.3" cy="1074.6" r="4.200"/>
<circle cx="1465.3" cy="1300.6" r="4.200"/>
<circle cx="1597.7" cy="1232.5" r="4.200"/>
<circle cx="1544.0" cy="1228.6" r="4.200"/>
<circle cx="1551.6" cy="1233.6" r="4.200"/>
<circle cx="1503.9" cy="1248.1" r="4.200"/>
<circle cx="1525.5" cy="1261.9" r="4.200"/>
<circle cx="1658.3" cy="1201.5" r="4.200"/>
<circle cx="1675.7" cy="1221.7" r="4.200"/>
<circle cx="1580.7" cy="1062.6" r="4.200"/>
<circle cx="1671.5" cy="1281.7" r="4.200"/>
<circle cx="1570.6" cy="1240.1" r="4.200"/>
<circle cx="1630.0" cy="1202.2" r="4.200"/>
<circle cx="1641.7" cy="1238.5" r="4.200"/>
<circle cx="1689.0" cy="1258.1" r="4.200"/>
<circle cx="1633.9" cy="1214.5" r="4.200"/>
<circle cx="1597.4" cy="1217.0" r="4.200"/>
<circle cx="1540.5" cy="1082.1" r="4.200"/>
<circle cx="1582.7" cy="1136.4" r="4.200"/>
<circle cx="1522.8" cy="1338.7" r="4.200"/>
<circle cx="1613.5" cy="1274.5" r="4.200"/>
<circle cx="1456.0" cy="1210.2" r="4.200"/>
<circle cx="1475.1" cy="1306.1" r="4.200"/>
<circle cx="1435.5" cy="1235.7" r="4.200"/>
<circle cx="1602.7" cy="1197.2" r="4.200"/>
<circle cx="1583.3" cy="1309.1" r="4.200"/>
<circle cx="1629.4" cy="915.7" r="4.200"/>
<circle cx="1598.1" cy="1163.5" r="4.200"/>
<circle cx="1415.7" cy="1207.7" r="4.200"/>
<circle cx="1505.8" cy="1344.3" r="4.200"/>
<circle cx="1505.5" cy="1251.1" r="4.200"/>
<circle cx="1629.8" cy="1153.9" r="4.200"/>
<circle cx="1642.4" cy="1138.7" r="4.200"/>
<circle cx="1555.8" cy="1083.7" r="4.200"/>
<circle cx="1597.3" cy="1056.0" r="4.200"/>
<circle cx="1590.8" cy="1084.9" r="4.200"/>
<circle cx="1524.9" cy="1167.6" r="4.200"/>
<circle cx="1678.6" cy="1207.8" r="4.200"/>
<circle cx="1453.8" cy="1259.4" r="4.200"/>
<circle cx="1521.7" cy="1241.3" r="4.200"/>
<circle cx="1523.2" cy="1120.6" r="4.200"/>
<circle cx="1525.1" cy="1070.1" r="4.200"/>
<circle cx="1434.3" cy="1243.5" r="4.200"/>
<circle cx="1543.3" cy="1310.5" r="4.200"/>
<circle cx="1564.0" cy="987.7" r="4.200"/>
<circle cx="1682.9" cy="1232.0" r="4.200"/>
<circle cx="1621.3" cy="1279.6" r="4.200"/>
<circle cx="1559.0" cy="1234.7" r="4.200"/>
<circle cx="1690.4" cy="961.1" r="4.200"/>
<circle cx="1610.7" cy="1242.2" r="4.200"/>
<circle cx="1467.5" cy="1166.4" r="4.200"/>
<circle cx="1561.5" cy="1109.8" r="4.200"/>
<circle cx="1613.7" cy="1064.6" r="4.200"/>
<circle cx="1610.4" cy="1259.8" r="4.200"/>
<circle cx="1526.2" cy="1241.1" r="4.200"/>
<circle cx="1422.8" cy="1207.7" r="4.200"/>
<circle cx="1601.5" cy="1194.9" r="4.200"/>
<circle cx="1662.9" cy="1155.4" r="4.200"/>
<circle cx="1607.1" cy="1067.7" r="4.200"/>
<circle cx="1603.5" cy="1115.5" r="4.200"/>
<circle cx="1588.7" cy="1065.7" r="4.200"/>
<circle cx="1480.7" cy="1310.5" r="4.200"/>
<circle cx="1487.9" cy="1182.9" r="4.200"/>
<circle cx="1574.6" cy="1195.6" r="4.200"/>
<circle cx="1546.7" cy="1175.0" r="4.200"/>
<circle cx="1571.2" cy="1030.5" r="4.200"/>
<circle cx="1605.4" cy="1167.2" r="4.200"/>
<circle cx="1681.5" cy="1268.4" r="4.200"/>
<circle cx="1450.7" cy="1240.8" r="4.200"/>
<circle cx="1566.9" cy="1169.0" r="4.200"/>
<circle cx="1564.2" cy="1204.1" r="4.200"/>
<circle cx="1606.5" cy="994.5" r="4.200"/>
<circle cx="1495.3" cy="1164.0" r="4.200"/>
<circle cx="1481.8" cy="1241.5" r="4.200"/>
<circle cx="1594.3" cy="1126.8" r="4.200"/>
<circle cx="1529.8" cy="1334.9" r="4.200"/>
<circle cx="1607.5" cy="1254.4" r="4.200"/>
<circle cx="1499.0" cy="1176.2" r="4.200"/>
<circle cx="1507.4" cy="1220.6" r="4.200"/>
<circle cx="1663.5" cy="1169.3" r="4.200"/>
<circle cx="1598.0" cy="1225.3" r="4.200"/>
<circle cx="1696.3" cy="983.6" r="4.200"/>
<circle cx="1596.5" cy="1139.0" r="4.200"/>
<circle cx="1612.1" cy="1255.7" r="4.200"/>
<circle cx="1589.8" cy="1025.1" r="4.200"/>
<circle cx="1601.7" cy="1027.5" r="4.200"/>
<circle cx="1666.2" cy="1224.1" r="4.200"/>
<circle cx="1542.4" cy="1222.6" r="4.200"/>
<circle cx="1533.7" cy="1201.9" r="4.200"/>
<circle cx="1458.4" cy="1302.1" r="4.200"/>
<circle cx="1568.0" cy="1107.7" r="4.200"/>
<circle cx="1569.4" cy="1000.4" r="4.200"/>
<circle cx="1423.4" cy="1195.4" r="4.200"/>
<circle cx="1627.4" cy="1188.6" r="4.200"/>
<circle cx="1469.4" cy="1273.7" r="4.200"/>
<circle cx="1596.8" cy="1145.4" r="4.200"/>
<circle cx="1554.7" cy="1140.5" r="4.200"/>
<circle cx="1680.5" cy="1247.8" r="4.200"/>
<circle cx="1591.7" cy="1303.2" r="4.200"/>
<circle cx="1670.1" cy="979.1" r="4.200"/>
<circle cx="1569.3" cy="1283.8" r="4.200"/>
<circle cx="1576.7" cy="1298.7" r="4.200"/>
<circle cx="1673.6" cy="1220.1" r="4.200"/>
<circle cx="1496.1" cy="1264.8" r="4.200"/>
<circle cx="1636.6" cy="1266.9" r="4.200"/>
<circle cx="1620.9" cy="1127.6" r="4.200"/>
<circle cx="1679.0" cy="1198.1" r="4.200"/>
<circle cx="1524.4" cy="1293.7" r="4.200"/>
<circle cx="1511.3" cy="1293.3" r="4.200"/>
<circle cx="1643.0" cy="1293.3" r="4.200"/>
<circle cx="1551.3" cy="1162.4" r="4.200"/>
<circle cx="1589.4" cy="1241.7" r="4.200"/>
<circle cx="1611.2" cy="954.9" r="4.200"/>
<circle cx="1668.5" cy="1209.8" r="4.200"/>
<circle cx="1663.6" cy="1281.5" r="4.200"/>
<circle cx="1491.3" cy="1292.8" r="4.200"/>
<circle cx="1492.5" cy="1327.8" r="4.200"/>
<circle cx="1522.0" cy="1296.2" r="4.200"/>
<circle cx="1680.9" cy="1273.4" r="4.200"/>
<circle cx="1462.3" cy="1207.6" r="4.200"/>
<circle cx="1518.9" cy="1331.7" r="4.200"/>
<circle cx="1437.2" cy="1243.7" r="4.200"/>
<circle cx="1571.4" cy="1118.7" r="4.200"/>
<circle cx="1643.3" cy="968.9" r="4.200"/>
<circle cx="1593.8" cy="1206.6" r="4.200"/>
<circle cx="1499.6" cy="1229.8" r="4.200"/>
<circle cx="1450.1" cy="1172.6" r="4.200"/>
<circle cx="1601.6" cy="977.8" r="4.200"/>
<circle cx="1675.1" cy="1267.7" r="4.200"/>
<circle cx="1579.6" cy="1041.5" r="4.200"/>
<circle cx="1645.8" cy="1230.6" r="4.200"/>
<circle cx="1541.6" cy="1277.3" r="4.200"/>
<circle cx="1504.5" cy="1284.3" r="4.200"/>
<circle cx="1663.7" cy="1244.3" r="4.200"/>
<circle cx="1529.1" cy="1214.8" r="4.200"/>
<circle cx="1655.8" cy="1121.8" r="4.200"/>
<circle cx="1588.9" cy="1311.4" r="4.200"/>
<circle cx="1550.5" cy="1191.5" r="4.200"/>
<circle cx="1501.6" cy="1190.2" r="4.200"/>
<circle cx="1513.8" cy="1259.2" r="4.200"/>
<circle cx="1570.5" cy="1322.8" r="4.200"/>
<circle cx="1478.4" cy="1181.4" r="4.200"/>
<circle cx="1585.7" cy="1249.0" r="4.200"/>
<circle cx="1623.8" cy="1107.5" r="4.200"/>
<circle cx="1708.3" cy="999.6" r="4.200"/>
<circle cx="1600.2" cy="975.5" r="4.200"/>
<circle cx="1591.3" cy="991.8" r="4.200"/>
<circle cx="1593.6" cy="1085.7" r="4.200"/>
<circle cx="1618.2" cy="1158.0" r="4.200"/>
<circle cx="1554.4" cy="1043.9" r="4.200"/>
<circle cx="1602.5" cy="988.6" r="4.200"/>
<circle cx="1645.2" cy="1197.8" r="4.200"/>
<circle cx="1664.0" cy="1009.3" r="4.200"/>
<circle cx="1677.7" cy="1269.6" r="4.200"/>
<circle cx="1591.3" cy="1308.5" r="4.200"/>
<circle cx="1545.0" cy="1249.4" r="4.200"/>
<circle cx="1649.7" cy="1236.0" r="4.200"/>
<circle cx="1592.4" cy="1254.2" r="4.200"/>
<circle cx="1597.3" cy="1244.0" r="4.200"/>
<circle cx="1538.8" cy="1317.1" r="4.200"/>
<circle cx="1430.5" cy="1252.1" r="4.200"/>
<circle cx="1654.9" cy="1168.3" r="4.200"/>
<circle cx="1541.2" cy="1315.9" r="4.200"/>
<circle cx="1620.7" cy="1125.8" r="4.200"/>
<circle cx="1626.7" cy="1128.1" r="4.200"/>
<circle cx="1612.5" cy="1275.5" r="4.200"/>
<circle cx="1626.1" cy="1172.5" r="4.200"/>
<circle cx="1626.2" cy="1183.8" r="4.200"/>
<circle cx="1504.6" cy="1317.4" r="4.200"/>
<circle cx="1556.6" cy="1150.9" r="4.200"/>
<circle cx="1500.7" cy="1301.9" r="4.200"/>
<circle cx="1657.1" cy="1248.4" r="4.200"/>
<circle cx="1510.6" cy="1245.9" r="4.200"/>
<circle cx="1554.6" cy="1130.3" r="4.200"/>
<circle cx="1629.3" cy="1162.2" r="4.200"/>
<circle cx="1464.2" cy="1194.0" r="4.200"/>
<circle cx="1532.3" cy="1062.9" r="4.200"/>
<circle cx="1518.8" cy="1339.6" r="4.200"/>
<circle cx="1531.9" cy="1316.0" r="4.200"/>
<circle cx="1581.0" cy="1301.4" r="4.200"/>
<circle cx="1454.2" cy="1198.5" r="4.200"/>
<circle cx="1524.5" cy="1243.2" r="4.200"/>
<circle cx="1542.1" cy="1235.7" r="4.200"/>
<circle cx="1465.1" cy="1243.0" r="4.200"/>
<circle cx="1453.4" cy="1285.2" r="4.200"/>
<circle cx="1663.0" cy="1240.1" r="4.200"/>
<circle cx="1452.0" cy="1218.1" r="4.200"/>
<circle cx="1447.6" cy="1293.4" r="4.200"/>
<circle cx="1552.6" cy="1273.8" r="4.200"/>
<circle cx="1671.2" cy="1183.7" r="4.200"/>
<circle cx="1669.4" cy="1285.2" r="4.200"/>
<circle cx="1520.5" cy="1309.5" r="4.200"/>
<circle cx="1633.1" cy="1132.7" r="4.200"/>
<circle cx="1695.5" cy="999.0" r="4.200"/>
<circle cx="1487.3" cy="1300.6" r="4.200"/>
<circle cx="1580.2" cy="1316.9" r="4.200"/>
<circle cx="1504.5" cy="1147.3" r="4.200"/>
<circle cx="1566.4" cy="1080.3" r="4.200"/>
<circle cx="1614.9" cy="1133.7" r="4.200"/>
<circle cx="1562.3" cy="1239.5" r="4.200"/>
<circle cx="1455.7" cy="1244.3" r="4.200"/>
<circle cx="1525.0" cy="1337.8" r="4.200"/>
<circle cx="1561.5" cy="1242.7" r="4.200"/>
<circle cx="1523.1" cy="1244.4" r="4.200"/>
<circle cx="1458.7" cy="1263.7" r="4.200"/>
<circle cx="1466.0" cy="1239.4" r="4.200"/>
<circle cx="1583.1" cy="1048.8" r="4.200"/>
<circle cx="1661.6" cy="1282.5" r="4.200"/>
<circle cx="1649.5" cy="987.0" r="4.200"/>
<circle cx="1559.7" cy="1189.8" r="4.200"/>
<circle cx="1649.0" cy="1149.6" r="4.200"/>
<circle cx="1590.2" cy="1306.3" r="4.200"/>
<circle cx="1503.0" cy="1287.5" r="4.200"/>
<circle cx="1470.3" cy="1347.8" r="4.200"/>
<circle cx="1572.5" cy="1103.9" r="4.200"/>
<circle cx="1557.8" cy="1015.5" r="4.200"/>
<circle cx="1651.9" cy="1020.6" r="4.200"/>
<circle cx="1606.1" cy="1259.8" r="4.200"/>
<circle cx="1502.5" cy="1301.2" r="4.200"/>
<circle cx="1625.7" cy="1293.5" r="4.200"/>
<circle cx="1667.0" cy="1250.8" r="4.200"/>
<circle cx="1442.6" cy="1229.2" r="4.200"/>
<circle cx="1567.8" cy="1240.8" r="4.200"/>
<circle cx="1608.8" cy="1006.8" r="4.200"/>
<circle cx="1610.1" cy="1243.3" r="4.200"/>
<circle cx="1498.8" cy="1296.8" r="4.200"/>
<circle cx="1499.4" cy="1345.8" r="4.200"/>
<circle cx="1531.2" cy="1165.5" r="4.200"/>
<circle cx="1562.4" cy="1177.4" r="4.200"/>
<circle cx="1600.2" cy="1242.3" r="4.200"/>
<circle cx="1481.0" cy="1245.6" r="4.200"/>
<circle cx="1454.6" cy="1258.8" r="4.200"/>
<circle cx="1518.5" cy="1275.4" r="4.200"/>
<circle cx="1522.0" cy="1268.8" r="4.200"/>
<circle cx="1570.6" cy="1132.3" r="4.200"/>
<circle cx="1622.6" cy="1264.5" r="4.200"/>
<circle cx="1579.3" cy="1300.0" r="4.200"/>
<circle cx="1601.3" cy="1269.6" r="4.200"/>
<circle cx="1628.4" cy="1200.3" r="4.200"/>
<circle cx="1590.7" cy="1221.7" r="4.200"/>
<circle cx="1475.9" cy="1347.3" r="4.200"/>
<circle cx="1474.8" cy="1182.5" r="4.200"/>
<circle cx="1591.6" cy="1276.2" r="4.200"/>
<circle cx="1596.9" cy="1090.8" r="4.200"/>
<circle cx="1646.0" cy="1176.6" r="4.200"/>
<circle cx="1617.7" cy="1213.2" r="4.200"/>
<circle cx="1563.7" cy="1291.9" r="4.200"/>
<circle cx="1510.6" cy="1166.4" r="4.200"/>
<circle cx="1673.0" cy="996.5" r="4.200"/>
<circle cx="1580.6" cy="1237.2" r="4.200"/>
<circle cx="1506.6" cy="1240.6" r="4.200"/>
<circle cx="1553.6" cy="1304.0" r="4.200"/>
<circle cx="1568.6" cy="973.1" r="4.200"/>
<circle cx="1615.8" cy="1269.5" r="4.200"/>
<circle cx="1588.9" cy="963.5" r="4.200"/>
<circle cx="1661.5" cy="1218.4" r="4.200"/>
<circle cx="1580.0" cy="1155.2" r="4.200"/>
<circle cx="1653.8" cy="1142.3" r="4.200"/>
<circle cx="1532.8" cy="1281.1" r="4.200"/>
<circle cx="1476.1" cy="1339.6" r="4.200"/>
<circle cx="1550.0" cy="1072.4" r="4.200"/>
<circle cx="1477.1" cy="1265.0" r="4.200"/>
<circle cx="1471.2" cy="1298.4" r="4.200"/>
<circle cx="1529.9" cy="1252.2" r="4.200"/>
<circle cx="1586.7" cy="1309.5" r="4.200"/>
<circle cx="1682.0" cy="1205.6" r="4.200"/>
<circle cx="1642.3" cy="1028.4" r="4.200"/>
<circle cx="1662.3" cy="1213.4" r="4.200"/>
<circle cx="1508.1" cy="1138.8" r="4.200"/>
<circle cx="1538.6" cy="1142.4" r="4.200"/>
<circle cx="1619.3" cy="1295.0" r="4.200"/>
<circle cx="1448.2" cy="1266.4" r="4.200"/>
<circle cx="1571.6" cy="971.8" r="4.200"/>
<circle cx="1581.8" cy="1318.7" r="4.200"/>
<circle cx="1619.2" cy="1277.1" r="4.200"/>
<circle cx="1579.8" cy="980.1" r="4.200"/>
<circle cx="1539.1" cy="1138.1" r="4.200"/>
<circle cx="1539.0" cy="1231.4" r="4.200"/>
<circle cx="1494.1" cy="1277.3" r="4.200"/>
<circle cx="1521.3" cy="1151.0" r="4.200"/>
<circle cx="1589.2" cy="1308.0" r="4.200"/>
<circle cx="1494.9" cy="1339.9" r="4.200"/>
<circle cx="1638.0" cy="1164.8" r="4.200"/>
<circle cx="1653.7" cy="1226.8" r="4.200"/>
<circle cx="1558.2" cy="973.6" r="4.200"/>
<circle cx="1570.1" cy="1222.9" r="4.200"/>
<circle cx="1511.6" cy="1124.3" r="4.200"/>
<circle cx="1439.8" cy="1269.0" r="4.200"/>
<circle cx="1544.5" cy="1099.8" r="4.200"/>
<circle cx="1652.8" cy="1211.4" r="4.200"/>
<circle cx="1635.1" cy="1170.5" r="4.200"/>
<circle cx="1557.8" cy="1205.9" r="4.200"/>
<circle cx="1569.1" cy="1262.6" r="4.200"/>
<circle cx="1560.0" cy="1239.1" r="4.200"/>
<circle cx="1590.4" cy="1240.3" r="4.200"/>
<circle cx="1652.6" cy="1122.0" r="4.200"/>
<circle cx="1647.4" cy="1103.9" r="4.200"/>
<circle cx="1619.0" cy="1232.1" r="4.200"/>
<circle cx="1612.3" cy="1308.4" r="4.200"/>
<circle cx="1582.6" cy="1298.2" r="4.200"/>
<circle cx="1583.3" cy="1163.3" r="4.200"/>
<circle cx="1530.5" cy="1313.5" r="4.200"/>
<circle cx="1661.3" cy="1140.1" r="4.200"/>
<circle cx="1636.8" cy="1276.4" r="4.200"/>
<circle cx="1524.3" cy="1229.7" r="4.200"/>
<circle cx="1704.8" cy="1273.9" r="4.200"/>
<circle cx="1570.5" cy="1073.4" r="4.200"/>
<circle cx="1569.7" cy="1267.5" r="4.200"/>
<circle cx="1587.2" cy="1282.0" r="4.200"/>
<circle cx="1630.6" cy="956.5" r="4.200"/>
<circle cx="1685.6" cy="1204.9" r="4.200"/>
<circle cx="1665.6" cy="1184.1" r="4.200"/>
<circle cx="1585.0" cy="1169.8" r="4.200"/>
<circle cx="1605.3" cy="1039.2" r="4.200"/>
<circle cx="1479.7" cy="1236.6" r="4.200"/>
<circle cx="1456.2" cy="1265.0" r="4.200"/>
<circle cx="1594.8" cy="1044.3" r="4.200"/>
<circle cx="1545.8" cy="1213.8" r="4.200"/>
<circle cx="1599.4" cy="1063.6" r="4.200"/>
<circle cx="1577.8" cy="1296.6" r="4.200"/>
<circle cx="1576.2" cy="1304.8" r="4.200"/>
<circle cx="1650.9" cy="1275.0" r="4.200"/>
<circle cx="1493.5" cy="1275.9" r="4.200"/>
<circle cx="1580.8" cy="1068.0" r="4.200"/>
<circle cx="1661.8" cy="1280.9" r="4.200"/>
<circle cx="1517.6" cy="1292.2" r="4.200"/>
<circle cx="1545.3" cy="1147.5" r="4.200"/>
<circle cx="1474.7" cy="1181.3" r="4.200"/>
<circle cx="1551.4" cy="1206.2" r="4.200"/>
<circle cx="1602.2" cy="1286.6" r="4.200"/>
<circle cx="1599.6" cy="1264.6" r="4.200"/>
<circle cx="1506.5" cy="1245.6" r="4.200"/>
<circle cx="1552.4" cy="1315.0" r="4.200"/>
<circle cx="1497.8" cy="1231.7" r="4.200"/>
<circle cx="1575.7" cy="1222.6" r="4.200"/>
<circle cx="1693.8" cy="1276.5" r="4.200"/>
<circle cx="1500.7" cy="1237.7" r="4.200"/>
<circle cx="1670.6" cy="1265.3" r="4.200"/>
<circle cx="1677.5" cy="1219.6" r="4.200"/>
<circle cx="1605.9" cy="1148.1" r="4.200"/>
<circle cx="1572.6" cy="1235.1" r="4.200"/>
<circle cx="1637.9" cy="1098.5" r="4.200"/>
<circle cx="1683.7" cy="1261.3" r="4.200"/>
<circle cx="1459.1" cy="1253.4" r="4.200"/>
<circle cx="1659.8" cy="1133.1" r="4.200"/>
<circle cx="1543.5" cy="1331.9" r="4.200"/>
<circle cx="1521.4" cy="1151.9" r="4.200"/>
<circle cx="1496.1" cy="1331.1" r="4.200"/>
<circle cx="1419.7" cy="1180.9" r="4.200"/>
<circle cx="1485.1" cy="1306.6" r="4.200"/>
<circle cx="1530.8" cy="1078.5" r="4.200"/>
<circle cx="1616.5" cy="1241.5" r="4.200"/>
<circle cx="1699.9" cy="996.7" r="4.200"/>
<circle cx="1639.2" cy="1288.2" r="4.200"/>
<circle cx="1639.6" cy="968.9" r="4.200"/>
<circle cx="1501.1" cy="1302.6" r="4.200"/>
<circle cx="1538.4" cy="1318.6" r="4.200"/>
<circle cx="1630.6" cy="1289.3" r="4.200"/>
<circle cx="1516.6" cy="1223.8" r="4.200"/>
<circle cx="1582.0" cy="1300.0" r="4.200"/>
<circle cx="1553.6" cy="1300.8" r="4.200"/>
<circle cx="1524.7" cy="1256.8" r="4.200"/>
<circle cx="1518.7" cy="1128.2" r="4.200"/>
<circle cx="1587.5" cy="1302.9" r="4.200"/>
<circle cx="1548.4" cy="1330.6" r="4.200"/>
<circle cx="1652.0" cy="1228.5" r="4.200"/>
<circle cx="1686.2" cy="1210.3" r="4.200"/>
<circle cx="1483.7" cy="1270.5" r="4.200"/>
<circle cx="1604.4" cy="1247.4" r="4.200"/>
<circle cx="1516.8" cy="1270.8" r="4.200"/>
<circle cx="1519.8" cy="1277.5" r="4.200"/>
<circle cx="1560.8" cy="1237.2" r="4.200"/>
<circle cx="1613.5" cy="1079.6" r="4.200"/>
<circle cx="1553.3" cy="1231.4" r="4.200"/>
<circle cx="1625.7" cy="1184.4" r="4.200"/>
<circle cx="1469.0" cy="1256.0" r="4.200"/>
<circle cx="1618.6" cy="1119.3" r="4.200"/>
<circle cx="1650.0" cy="916.5" r="4.200"/>
<circle cx="1643.7" cy="1265.1" r="4.200"/>
<circle cx="1459.2" cy="1236.3" r="4.200"/>
<circle cx="1617.6" cy="968.2" r="4.200"/>
<circle cx="1666.0" cy="1217.4" r="4.200"/>
<circle cx="1641.8" cy="1085.6" r="4.200"/>
<circle cx="1590.0" cy="1263.2" r="4.200"/>
<circle cx="1553.7" cy="1085.1" r="4.200"/>
<circle cx="1577.1" cy="1306.3" r="4.200"/>
<circle cx="1583.4" cy="1292.3" r="4.200"/>
<circle cx="1588.6" cy="1067.1" r="4.200"/>
<circle cx="1472.0" cy="1218.5" r="4.200"/>
<circle cx="1639.4" cy="1227.1" r="4.200"/>
</g>
<g fill="#9be84a" fill-opacity=".75" stroke="#1fe6e6" stroke-width="2.700">
<circle cx="1547.5" cy="1129.5" r="6.300"/>
<circle cx="1558.8" cy="1271.5" r="6.300"/>
<circle cx="1647" cy="1271" r="6.300"/>
<circle cx="1522" cy="1283.5" r="6.300"/>
<circle cx="1525" cy="1296" r="6.300"/>
<circle cx="1512" cy="1299" r="6.300"/>
<circle cx="1491" cy="1305" r="6.300"/>
<circle cx="1540" cy="1318" r="6.300"/>
<circle cx="1528" cy="1321" r="6.300"/>
<circle cx="1516" cy="1324" r="6.300"/>
</g><g fill="#22e3e3">
<circle cx="1580" cy="1318.5" r="2"/>
<circle cx="1664" cy="1291" r="2"/>
<circle cx="1502.5" cy="1327.7" r="2"/>
<circle cx="1491" cy="1331.5" r="2"/>
<circle cx="1485" cy="1333.5" r="2"/>
<circle cx="1472.5" cy="1337.7" r="2"/>
<circle cx="1548" cy="1313" r="2"/>
</g>
</g></svg>
<div class="mbtn" style="left:662px;top:864px;height:87px"></div><div class="abs" style="left:662px;top:907px;width:43px;height:1px;background:#ddd"></div>
<svg class="abs" style="left:662px;top:864px;width:43px;height:87px" viewBox="0 0 43 87"><path d="M15 22.500h13M21.500 16v13M15 66.500h13" stroke="#444" stroke-width="1.300" fill="none"/></svg>
<div class="mbtn" style="left:2410px;top:864px"><svg viewBox="0 0 25 25"><path d="M12.500 3.500 22.500 9l-10 5.500L2.500 9zM2.500 12.500l10 5.500 10-5.500M2.500 16l10 5.500 10-5.500"/></svg></div>
<div class="mbtn" style="left:2410px;top:921px"><svg viewBox="0 0 25 25"><path d="M7 10V2.500h8l3.500 3.500V10M15 2.500V6h3.500M7 19H3.500a1 1 0 0 1-1-1v-7a1 1 0 0 1 1-1h18a1 1 0 0 1 1 1v7a1 1 0 0 1-1 1H18M7 15.500h11v7H7zM10 19h5M18.500 13h1.500"/></svg></div>
<div class="mbtn" style="left:2411px;top:976px;height:87px"></div><div class="abs" style="left:2411px;top:1019px;width:43px;height:1px;background:#cfcfcf"></div>
<svg class="abs" style="left:2411px;top:976px;width:43px;height:87px;fill:none;stroke:#555;stroke-width:1.200" viewBox="0 0 43 87"><path d="M12.500 16.800h17"/><rect x="10" y="15.300" width="3" height="3"/><rect x="29" y="15.300" width="3" height="3"/><rect x="10.500" y="21" width="21" height="7.300" stroke-width="1.400"/><path d="M14 28v-3M17 28v-4M20 28v-3M23 28v-4M26 28v-3M29 28v-4"/><path d="M12 57.500h19M17.500 57.500c0-2 8-2 8 0M14 60l1.500 15.500h12L29 60zM18 62.500v10.500M21.500 62.500v10.500M25 62.500v10.500"/></svg>
</div></body></html>
